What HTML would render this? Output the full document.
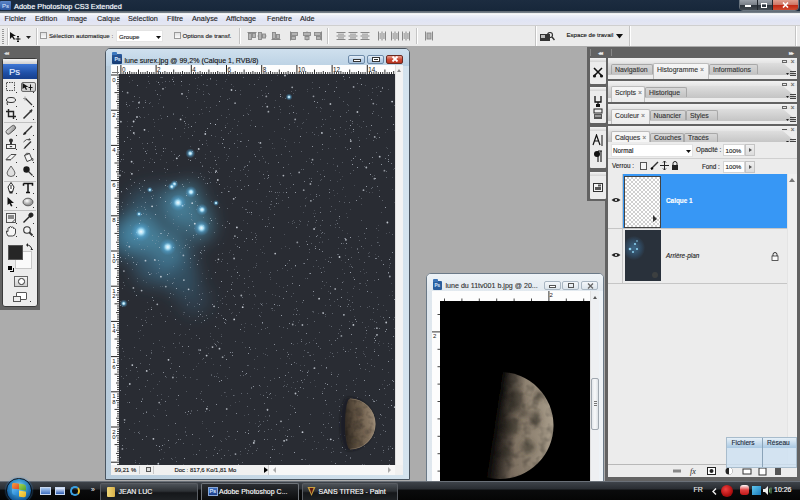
<!DOCTYPE html>
<html><head><meta charset="utf-8">
<style>
*{margin:0;padding:0;box-sizing:border-box}
html,body{width:800px;height:500px;overflow:hidden}
body{position:relative;background:#acacac;font-family:"Liberation Sans",sans-serif;font-size:7px;color:#222}
.a{position:absolute}
.t{position:absolute;white-space:nowrap;line-height:1;-webkit-text-stroke:0.12px currentColor}
#title{left:0;top:0;width:800px;height:10.5px;background:linear-gradient(#1c2c40,#17273a);}
#menu{left:0;top:10.5px;width:800px;height:14.5px;background:linear-gradient(#5a646e 0,#7a848e 1.8px,#ffffff 2.6px,#eceff8 4.5px,#e0e4f4 9px,#e4e6f2 13.5px,#d4d4da 14.5px);}
#opts{left:0;top:25px;width:800px;height:21px;background:#ebebeb;border-top:1px solid #cfcfcf;}
#tools{left:0;top:46px;width:40px;height:264px;background:#636363}
#doc1{left:105px;top:48px;width:305px;height:432px;background:#c4d8e8;border:1px solid #4a5560;border-radius:5px 5px 0 0}
#doc2{left:426px;top:273px;width:178px;height:212px;background:#dde6ee;border:1px solid #6b7a88;border-radius:5px 5px 0 0}
#task{left:0;top:481px;width:800px;height:19px;background:linear-gradient(#41464d 0,#2a2e33 40%,#0a0b0c 50%,#050505 100%)}
.dk{background:#626262}
.pn{background:#ececec}
</style></head><body>
<!-- title bar -->
<div id="title" class="a">
  <div class="a" style="left:0;top:1px;width:11px;height:9px;background:linear-gradient(#5b86c8,#2a55a0);border-radius:1px"></div>
  <div class="t" style="left:2px;top:3px;font-size:6px;color:#c9dcf5">Ps</div>
  <div class="t" style="left:14px;top:2.8px;font-size:7.35px;color:#fff;text-shadow:0 0 2px #4a6a90">Adobe Photoshop CS3 Extended</div>
  <div class="a" style="left:739px;top:-1px;width:60px;height:11.5px;border:1px solid #6a7580;border-radius:0 0 4px 4px;background:#222"></div>
  <div class="a" style="left:740px;top:0;width:17px;height:10px;background:linear-gradient(#9aa0a8 0,#7a8088 45%,#2e353d 55%,#444b52 100%)"></div>
  <div class="a" style="left:757px;top:0;width:1px;height:10px;background:#20262c"></div>
  <div class="a" style="left:758px;top:0;width:14px;height:10px;background:linear-gradient(#9aa0a8 0,#7a8088 45%,#2e353d 55%,#444b52 100%)"></div>
  <div class="a" style="left:772px;top:0;width:1px;height:10px;background:#20262c"></div>
  <div class="a" style="left:773px;top:0;width:25px;height:10px;border-radius:0 0 3px 0;background:linear-gradient(#e0a090 0,#d07868 45%,#c02a14 55%,#d04a30 100%)"></div>
  <div class="a" style="left:745px;top:5px;width:6px;height:2px;background:#fff"></div>
  <div class="a" style="left:761px;top:2.5px;width:5.5px;height:5px;border:1px solid #fff;border-top-width:1.5px"></div>
  <svg class="a" style="left:782px;top:2px" width="7" height="6"><path d="M1 0.5 L6 5.5 M6 0.5 L1 5.5" stroke="#fff" stroke-width="1.6"/></svg>
</div>
<!-- menu bar -->
<div id="menu" class="a">
  <div class="t" style="left:4.5px;top:4.3px;font-size:7.25px">Fichier</div>
  <div class="t" style="left:35px;top:4.3px;font-size:7.25px">Edition</div>
  <div class="t" style="left:67px;top:4.3px;font-size:7.25px">Image</div>
  <div class="t" style="left:97px;top:4.3px;font-size:7.25px">Calque</div>
  <div class="t" style="left:128px;top:4.3px;font-size:7.25px">Sélection</div>
  <div class="t" style="left:167px;top:4.3px;font-size:7.25px">Filtre</div>
  <div class="t" style="left:192px;top:4.3px;font-size:7.25px">Analyse</div>
  <div class="t" style="left:226px;top:4.3px;font-size:7.25px">Affichage</div>
  <div class="t" style="left:267px;top:4.3px;font-size:7.25px">Fenêtre</div>
  <div class="t" style="left:300px;top:4.3px;font-size:7.25px">Aide</div>
</div>
<!-- options bar -->
<div id="opts" class="a">
  <div class="a" style="left:2px;top:3px;width:2px;height:15px;background:repeating-linear-gradient(#999 0 1px,transparent 1px 2px)"></div>
  <div class="a" style="left:7px;top:2px;width:1px;height:17px;background:#c4c4c4;box-shadow:1px 0 #fff"></div>
  <svg class="a" style="left:9px;top:5px" width="14" height="12" viewBox="0 0 14 12"><path d="M1 1 L1 8 L3 6 L5 9 L6 8 L4 5 L7 5 Z" fill="#111"/><path d="M9 5 v6 M6.5 8 h5 M8 6 l1-1 l1 1 M8 10 l1 1 l1-1" stroke="#111" stroke-width="1" fill="none"/></svg>
  <svg class="a" style="left:26px;top:10px" width="5" height="3"><path d="M0 0 h5 l-2.5 3z" fill="#222"/></svg>
  <div class="a" style="left:36px;top:2px;width:1px;height:17px;background:#c4c4c4;box-shadow:1px 0 #fff"></div>
  <div class="a" style="left:40px;top:6px;width:7px;height:7px;border:1px solid #9a9a9a;background:linear-gradient(#e0e0e0,#fafafa)"></div>
  <div class="t" style="left:49px;top:6.8px;font-size:6.15px;color:#222">Sélection automatique :</div>
  <div class="a" style="left:116px;top:4px;width:47px;height:12px;background:#fff;border:1px solid #e4e4e4"></div>
  <div class="t" style="left:119px;top:8px;font-size:6.1px;color:#222">Groupe</div>
  <svg class="a" style="left:156px;top:10px" width="5" height="3"><path d="M0 0 h5 l-2.5 3z" fill="#111"/></svg>
  <div class="a" style="left:174px;top:6px;width:7px;height:7px;border:1px solid #9a9a9a;background:linear-gradient(#e0e0e0,#fafafa)"></div>
  <div class="t" style="left:182.5px;top:6.8px;font-size:6.2px;color:#222">Options de transf.</div>
  <div class="a" style="left:239px;top:2px;width:1px;height:16px;background:#c4c4c4;box-shadow:1px 0 #fff"></div>
  <div class="a" style="left:327px;top:2px;width:1px;height:16px;background:#c4c4c4;box-shadow:1px 0 #fff"></div>
  <div class="a" style="left:416px;top:2px;width:1px;height:16px;background:#c4c4c4;box-shadow:1px 0 #fff"></div>
  <div class="a" style="left:535px;top:0px;width:1px;height:20px;background:#c4c4c4;box-shadow:1px 0 #fff"></div>
  <div class="a" style="left:629px;top:0px;width:1px;height:20px;background:#c4c4c4;box-shadow:1px 0 #fff"></div>
  <div class="a" style="left:795px;top:0px;width:1px;height:20px;background:#c4c4c4;box-shadow:1px 0 #fff"></div>
<svg class="a" style="left:247px;top:5px" width="10" height="10" viewBox="0 0 10 10"><path d="M0.5 1.5h9" stroke="#888"/><rect x="1.5" y="2.5" width="3" height="6" fill="#b4b4b4" stroke="#888" stroke-width="0.9"/><rect x="5.5" y="2.5" width="3" height="4" fill="#b4b4b4" stroke="#888" stroke-width="0.9"/></svg>
<svg class="a" style="left:257px;top:5px" width="10" height="10" viewBox="0 0 10 10"><path d="M0.5 5h9" stroke="#888"/><rect x="1.5" y="1.5" width="3" height="7" fill="#b4b4b4" stroke="#888" stroke-width="0.9"/><rect x="5.5" y="3" width="3" height="4" fill="#b4b4b4" stroke="#888" stroke-width="0.9"/></svg>
<svg class="a" style="left:271px;top:5px" width="10" height="10" viewBox="0 0 10 10"><path d="M0.5 8.5h9" stroke="#888"/><rect x="1.5" y="1.5" width="3" height="6" fill="#b4b4b4" stroke="#888" stroke-width="0.9"/><rect x="5.5" y="3.5" width="3" height="4" fill="#b4b4b4" stroke="#888" stroke-width="0.9"/></svg>
<svg class="a" style="left:289px;top:5px" width="10" height="10" viewBox="0 0 10 10"><path d="M1.5 0.5v9" stroke="#888"/><rect x="2.5" y="1.5" width="6" height="3" fill="#b4b4b4" stroke="#888" stroke-width="0.9"/><rect x="2.5" y="5.5" width="4" height="3" fill="#b4b4b4" stroke="#888" stroke-width="0.9"/></svg>
<svg class="a" style="left:302px;top:5px" width="10" height="10" viewBox="0 0 10 10"><path d="M5 0.5v9" stroke="#888"/><rect x="1.5" y="1.5" width="7" height="3" fill="#b4b4b4" stroke="#888" stroke-width="0.9"/><rect x="3" y="5.5" width="4" height="3" fill="#b4b4b4" stroke="#888" stroke-width="0.9"/></svg>
<svg class="a" style="left:313px;top:5px" width="10" height="10" viewBox="0 0 10 10"><path d="M8.5 0.5v9" stroke="#888"/><rect x="1.5" y="1.5" width="6" height="3" fill="#b4b4b4" stroke="#888" stroke-width="0.9"/><rect x="3.5" y="5.5" width="4" height="3" fill="#b4b4b4" stroke="#888" stroke-width="0.9"/></svg>
<svg class="a" style="left:336px;top:5px" width="10" height="10" viewBox="0 0 10 10"><path d="M0.5 1.5h9M0.5 5h9M0.5 8.5h9" stroke="#888"/><rect x="2" y="2.5" width="6" height="1.8" fill="#b4b4b4"/><rect x="2" y="6" width="6" height="1.8" fill="#b4b4b4"/></svg>
<svg class="a" style="left:348px;top:5px" width="10" height="10" viewBox="0 0 10 10"><path d="M0.5 1.5h9M0.5 5h9M0.5 8.5h9" stroke="#888"/><rect x="2" y="2.5" width="6" height="1.8" fill="#b4b4b4"/><rect x="2" y="6" width="6" height="1.8" fill="#b4b4b4"/></svg>
<svg class="a" style="left:360px;top:5px" width="10" height="10" viewBox="0 0 10 10"><path d="M0.5 1.5h9M0.5 5h9M0.5 8.5h9" stroke="#888"/><rect x="2" y="2.5" width="6" height="1.8" fill="#b4b4b4"/><rect x="2" y="6" width="6" height="1.8" fill="#b4b4b4"/></svg>
<svg class="a" style="left:377px;top:5px" width="10" height="10" viewBox="0 0 10 10"><path d="M1.5 0.5v9M5 0.5v9M8.5 0.5v9" stroke="#888"/><rect x="2.5" y="2" width="1.8" height="6" fill="#b4b4b4"/><rect x="6" y="2" width="1.8" height="6" fill="#b4b4b4"/></svg>
<svg class="a" style="left:390px;top:5px" width="10" height="10" viewBox="0 0 10 10"><path d="M1.5 0.5v9M5 0.5v9M8.5 0.5v9" stroke="#888"/><rect x="2.5" y="2" width="1.8" height="6" fill="#b4b4b4"/><rect x="6" y="2" width="1.8" height="6" fill="#b4b4b4"/></svg>
<svg class="a" style="left:401px;top:5px" width="10" height="10" viewBox="0 0 10 10"><path d="M1.5 0.5v9M5 0.5v9M8.5 0.5v9" stroke="#888"/><rect x="2.5" y="2" width="1.8" height="6" fill="#b4b4b4"/><rect x="6" y="2" width="1.8" height="6" fill="#b4b4b4"/></svg>
<svg class="a" style="left:424px;top:5px" width="10" height="10" viewBox="0 0 10 10"><path d="M1.5 0.5v9M8.5 0.5v9" stroke="#888"/><rect x="3" y="2" width="4" height="6" fill="#b4b4b4" stroke="#888" stroke-width="0.9"/></svg>
  <svg class="a" style="left:539px;top:6px" width="16" height="10" viewBox="0 0 16 10"><rect x="1" y="2" width="10" height="7" fill="#333"/><rect x="2" y="3" width="4" height="3" fill="#bbb"/><circle cx="11" cy="3" r="2.5" fill="none" stroke="#333" stroke-width="1.2"/><path d="M13 5 l2.5 3" stroke="#333" stroke-width="1.5"/></svg>
  <div class="t" style="left:566.5px;top:6.3px;font-size:6.1px;color:#111">Espace de travail</div>
  <svg class="a" style="left:616px;top:8px" width="7" height="5"><path d="M0 0 h7 l-3.5 4.5z" fill="#111"/></svg>
</div>
<!-- toolbox -->
<div id="tools" class="a">
  <div class="t" style="left:4px;top:4px;font-size:6px;color:#ddd;letter-spacing:-1px">◂◂</div>
  <div class="a" style="left:2px;top:12px;width:36px;height:249px;background:#ececec;border-radius:3px;border:1px solid #3a3a3a"></div>
  <div class="a" style="left:3px;top:13px;width:34px;height:5px;background:linear-gradient(#f4f4f4,#cfcfcf)"></div>
  <div class="a" style="left:3px;top:18px;width:34px;height:14.5px;background:linear-gradient(#3f78d6,#1f4fa6 60%,#173f8c)"></div>
  <div class="t" style="left:9px;top:21px;font-size:9.5px;color:#e8f0ff">Ps</div>
  <div class="a" style="left:20.5px;top:35.5px;width:15.5px;height:10.5px;border:1px solid #6a6a6a;border-radius:2px;background:linear-gradient(#e0e0e0,#cacaca)"></div>
  <div class="a" style="left:4px;top:76px;width:32px;height:1px;background:#c0c0c0"></div>
  <div class="a" style="left:4px;top:134.5px;width:32px;height:1px;background:#c0c0c0"></div>
  <div class="a" style="left:4px;top:164px;width:32px;height:1px;background:#c0c0c0"></div>
<svg class="a" style="left:5px;top:35px" width="12" height="12" viewBox="0 0 12 12"><rect x="1.5" y="1.5" width="8" height="8" fill="none" stroke="#333" stroke-width="0.9" stroke-dasharray="1.5 1"/></svg>
<svg class="a" style="left:22px;top:35px" width="12" height="12" viewBox="0 0 12 12"><path d="M0.5 2 L0.5 8 L2.5 6.5 L4 9 L5 8.5 L3.8 6 L6.5 6 Z" fill="#111"/><path d="M8.5 3.5v6M6.5 6.5h4" stroke="#111" stroke-width="1"/></svg>
<svg class="a" style="left:5px;top:49px" width="12" height="12" viewBox="0 0 12 12"><ellipse cx="6" cy="5" rx="4.5" ry="2.5" fill="none" stroke="#333" stroke-width="1"/><path d="M2.5 6.5 Q1.5 8 2.5 10" stroke="#333" fill="none"/></svg>
<svg class="a" style="left:22px;top:49px" width="12" height="12" viewBox="0 0 12 12"><path d="M3.5 3.5 L10 10" stroke="#333" stroke-width="1.3"/><path d="M1 3.5h4M3 1.5v4" stroke="#888" stroke-width="0.8"/></svg>
<svg class="a" style="left:5px;top:62px" width="12" height="12" viewBox="0 0 12 12"><path d="M3.5 1 v7.5 h7.5 M1 3.5 h7.5 v7.5" fill="none" stroke="#222" stroke-width="1.4"/></svg>
<svg class="a" style="left:22px;top:62px" width="12" height="12" viewBox="0 0 12 12"><path d="M1.5 10.5 L8 4" stroke="#333" stroke-width="1.6"/><path d="M7 3 L10 1 L10.5 2.5 L9 5z" fill="#333"/></svg>
<svg class="a" style="left:5px;top:78px" width="12" height="12" viewBox="0 0 12 12"><defs><linearGradient id="ha" x1="0" y1="0" x2="1" y2="1"><stop offset="0" stop-color="#eee"/><stop offset="1" stop-color="#888"/></linearGradient></defs><rect x="0.5" y="3.5" width="11" height="4.5" rx="2.2" transform="rotate(-40 6 6)" fill="url(#ha)" stroke="#444" stroke-width="0.8"/></svg>
<svg class="a" style="left:22px;top:78px" width="12" height="12" viewBox="0 0 12 12"><path d="M3 9 L10 2" stroke="#333" stroke-width="1.4"/><path d="M1 11 Q1.5 8 3.5 8 L4.5 9 Q4 11 1 11z" fill="#222"/></svg>
<svg class="a" style="left:5px;top:92px" width="12" height="12" viewBox="0 0 12 12"><circle cx="6" cy="2.5" r="2" fill="#333"/><rect x="5" y="4" width="2" height="3" fill="#333"/><rect x="1.5" y="6.5" width="9" height="4" fill="#f4f4f4" stroke="#333" stroke-width="0.9"/><path d="M4.5 8h3l-1.5 1.5z" fill="#333"/></svg>
<svg class="a" style="left:22px;top:92px" width="12" height="12" viewBox="0 0 12 12"><path d="M3 9.5 L9 3.5" stroke="#333" stroke-width="1.4"/><path d="M1.5 4 Q4 0.5 8 1.5" stroke="#444" fill="none" stroke-width="0.9"/><path d="M7 0 L9 1.8 L6.5 2.8z" fill="#444"/><path d="M1.5 11 Q2 9 3.5 9 L4 10z" fill="#222"/></svg>
<svg class="a" style="left:5px;top:105px" width="12" height="12" viewBox="0 0 12 12"><path d="M1 8.5 L6 3.5 L11 3.5 L6 8.5 Z" fill="#f4f4f4" stroke="#333" stroke-width="0.9"/><path d="M1 8.5 L6 8.5 L6 9.5 L1 9.5z" fill="#666"/></svg>
<svg class="a" style="left:22px;top:105px" width="12" height="12" viewBox="0 0 12 12"><path d="M2.5 4.5 L7.5 2.5 L10 8.5 L5 10.5 Z" fill="#f4f4f4" stroke="#333" stroke-width="0.9"/><path d="M2.5 4.5 Q4 1 7.5 2.5" stroke="#333" fill="none" stroke-width="0.8"/><path d="M10.5 7 q1 2 0 3" stroke="#333" fill="none" stroke-width="0.9"/></svg>
<svg class="a" style="left:5px;top:119px" width="12" height="12" viewBox="0 0 12 12"><path d="M6 1 Q10 6.5 10 8 A4 3.5 0 0 1 2 8 Q2 6.5 6 1Z" fill="#e0e0e0" stroke="#555" stroke-width="0.9"/></svg>
<svg class="a" style="left:22px;top:119px" width="12" height="12" viewBox="0 0 12 12"><circle cx="4.5" cy="4.5" r="3.2" fill="#1a1a1a"/><path d="M6.5 6.5 L10.5 10.5" stroke="#333" stroke-width="1.1"/></svg>
<svg class="a" style="left:5px;top:136px" width="12" height="12" viewBox="0 0 12 12"><path d="M6 0.5 L9 5 L7.5 10 L4.5 10 L3 5 Z" fill="#fff" stroke="#222" stroke-width="1"/><path d="M6 3v4" stroke="#222" stroke-width="1"/><rect x="4.5" y="9.5" width="3" height="2" fill="#222"/></svg>
<svg class="a" style="left:22px;top:136px" width="12" height="12" viewBox="0 0 12 12"><path d="M1.5 1.5h9v2.2M1.5 1.5v2.2M6 1.5v9M4 10.5h4" stroke="#111" stroke-width="1.5" fill="none"/></svg>
<svg class="a" style="left:5px;top:150px" width="12" height="12" viewBox="0 0 12 12"><path d="M2.5 1 L2.5 9 L4.5 7.5 L6 10.5 L7.5 10 L6 7 L9 7 Z" fill="#111"/></svg>
<svg class="a" style="left:22px;top:150px" width="12" height="12" viewBox="0 0 12 12"><defs><radialGradient id="eg" cx="0.4" cy="0.35"><stop offset="0" stop-color="#fff"/><stop offset="1" stop-color="#999"/></radialGradient></defs><ellipse cx="6" cy="6" rx="5" ry="3.8" fill="url(#eg)" stroke="#444" stroke-width="0.8"/></svg>
<svg class="a" style="left:5px;top:166px" width="12" height="12" viewBox="0 0 12 12"><rect x="1.5" y="1.5" width="9" height="9" fill="#f0f0f0" stroke="#444" stroke-width="0.9"/><rect x="3" y="3" width="6" height="4" fill="#888"/><path d="M7 10.5 L10.5 7" stroke="#444"/></svg>
<svg class="a" style="left:22px;top:166px" width="12" height="12" viewBox="0 0 12 12"><path d="M1.5 10.5 L7 5" stroke="#222" stroke-width="1.4"/><path d="M6.5 3.5 L8.5 5.5 M8 1.5 a1.8 1.8 0 0 1 2.5 2.5 L9 5 L7 3z" fill="#222" stroke="#222" stroke-width="1.2"/></svg>
<svg class="a" style="left:5px;top:179px" width="12" height="12" viewBox="0 0 12 12"><path d="M3 11 Q1 8 1.5 6 L3 6.5 L3 3 Q3.5 2 4.5 3 L4.5 2 Q5.5 1 6.5 2 L6.5 2.5 Q7.5 1.5 8.5 2.5 L8.5 3.5 Q9.5 3 10.5 4 L10.5 8 Q10 11 7.5 11 Z" fill="#f6f6f6" stroke="#333" stroke-width="0.9"/></svg>
<svg class="a" style="left:22px;top:179px" width="12" height="12" viewBox="0 0 12 12"><circle cx="5" cy="5" r="3.3" fill="#f4f4f4" stroke="#333" stroke-width="1.1"/><path d="M7.5 7.5 L10.5 10.5" stroke="#333" stroke-width="1.8"/></svg>
<div class="a" style="left:16px;top:46px;width:1.2px;height:1.2px;background:#333"></div>
<div class="a" style="left:33px;top:46px;width:1.2px;height:1.2px;background:#333"></div>
<div class="a" style="left:16px;top:60px;width:1.2px;height:1.2px;background:#333"></div>
<div class="a" style="left:33px;top:60px;width:1.2px;height:1.2px;background:#333"></div>
<div class="a" style="left:16px;top:73px;width:1.2px;height:1.2px;background:#333"></div>
<div class="a" style="left:33px;top:73px;width:1.2px;height:1.2px;background:#333"></div>
<div class="a" style="left:16px;top:89px;width:1.2px;height:1.2px;background:#333"></div>
<div class="a" style="left:33px;top:89px;width:1.2px;height:1.2px;background:#333"></div>
<div class="a" style="left:16px;top:103px;width:1.2px;height:1.2px;background:#333"></div>
<div class="a" style="left:33px;top:103px;width:1.2px;height:1.2px;background:#333"></div>
<div class="a" style="left:16px;top:116px;width:1.2px;height:1.2px;background:#333"></div>
<div class="a" style="left:33px;top:116px;width:1.2px;height:1.2px;background:#333"></div>
<div class="a" style="left:16px;top:130px;width:1.2px;height:1.2px;background:#333"></div>
<div class="a" style="left:33px;top:130px;width:1.2px;height:1.2px;background:#333"></div>
<div class="a" style="left:16px;top:147px;width:1.2px;height:1.2px;background:#333"></div>
<div class="a" style="left:33px;top:147px;width:1.2px;height:1.2px;background:#333"></div>
<div class="a" style="left:16px;top:161px;width:1.2px;height:1.2px;background:#333"></div>
<div class="a" style="left:33px;top:161px;width:1.2px;height:1.2px;background:#333"></div>
<div class="a" style="left:16px;top:177px;width:1.2px;height:1.2px;background:#333"></div>
<div class="a" style="left:33px;top:177px;width:1.2px;height:1.2px;background:#333"></div>
<div class="a" style="left:16px;top:190px;width:1.2px;height:1.2px;background:#333"></div>
<div class="a" style="left:33px;top:190px;width:1.2px;height:1.2px;background:#333"></div>

  <div class="a" style="left:14.5px;top:205px;width:17.5px;height:17.5px;background:#fafafa;border:1px solid #c8c8c8"></div>
  <div class="a" style="left:8px;top:198.5px;width:15px;height:15.5px;background:#262626;border:1px solid #555"></div>
  <div class="a" style="left:8px;top:220px;width:4px;height:4px;background:#000"></div>
  <div class="a" style="left:10px;top:222px;width:4px;height:4px;border:1px solid #000;border-top:none;border-left:none"></div>
  <svg class="a" style="left:26px;top:197px" width="7" height="7"><path d="M1 2 q4 0 5 5" stroke="#222" fill="none"/><path d="M0 2 l2 -2 v4z M6 7 l-2 -1 h4z" fill="#222"/></svg>
  <div class="a" style="left:14px;top:230px;width:14px;height:10.5px;border:1px solid #666;background:linear-gradient(#f4f4f4,#cfcfcf)"></div>
  <div class="a" style="left:18px;top:232px;width:6.5px;height:6.5px;border-radius:50%;border:1px solid #333;background:#fff"></div>
  <div class="a" style="left:16px;top:246px;width:11px;height:8px;border:1px solid #555;background:#fff;border-radius:1px"></div>
  <div class="a" style="left:13px;top:250px;width:8px;height:6px;border:1px solid #555;background:#eee"></div>
  <div class="a" style="left:30px;top:255px;width:1.2px;height:1.2px;background:#333"></div>
</div>
<!-- doc1 -->
<div id="doc1" class="a"><div class="a" style="left:-1px;top:-1px;width:305px;height:431px">
<div class="a" style="left:1px;top:1px;width:303px;height:17px;background:linear-gradient(#cfe0ee,#bcd2e4);border-radius:4px 4px 0 0"></div>
<div class="a" style="left:1px;top:18px;width:303px;height:413px;background:linear-gradient(90deg,#b8ccdc,#d4e3ee)"></div>
<div class="a" style="left:7px;top:6px;width:10px;height:10px;background:linear-gradient(#2a5a9c,#143a72);border-radius:1px"></div>
<div class="a" style="left:7px;top:4px;width:5px;height:3px;background:#3a78c0;border-radius:1px 1px 0 0"></div>
<div class="t" style="left:9.5px;top:9px;font-size:5px;color:#cfe0f8;font-weight:bold">Ps</div>
<div class="t" style="left:19.5px;top:8.5px;font-size:7.05px;color:#111">lune surex.jpg @ 99,2% (Calque 1, RVB/8)</div>
<div class="a" style="left:243px;top:6.5px;width:17px;height:9px;border:1px solid #6d8aa8;border-radius:2px;background:linear-gradient(#e4eef8,#bcd2e8 50%,#a9c3dd)"></div>
<div class="a" style="left:247.5px;top:10.5px;width:8px;height:3px;border:1px solid #333;background:#fff"></div>
<div class="a" style="left:262px;top:6.5px;width:17px;height:9px;border:1px solid #6d8aa8;border-radius:2px;background:linear-gradient(#e4eef8,#bcd2e8 50%,#a9c3dd)"></div>
<div class="a" style="left:266.5px;top:8.5px;width:8px;height:5.5px;border:1px solid #333;background:#fff"></div>
<div class="a" style="left:268.5px;top:10.5px;width:4px;height:1.5px;background:#333"></div>
<div class="a" style="left:281px;top:6.5px;width:17px;height:9px;border:1px solid #6a2a22;border-radius:2px;background:linear-gradient(#e8a090,#cc4a35 50%,#b83420)"></div>
<svg class="a" style="left:286px;top:8px" width="8" height="6"><path d="M1.5 0.5 L6.5 5.5 M6.5 0.5 L1.5 5.5" stroke="#fff" stroke-width="1.8"/></svg>
<div class="a" style="left:6px;top:17px;width:284px;height:9px;background:#fdfdfd"></div>
<div class="a" style="left:6px;top:26px;width:8px;height:391px;background:#fdfdfd"></div>
<div class="a" style="left:6px;top:17px;width:8px;height:9px;background:#fdfdfd"></div><div class="a" style="left:12px;top:18px;width:1px;height:8px;background:#777"></div><div class="a" style="left:7px;top:23.5px;width:7px;height:1px;background:#777"></div>
<svg class="a" style="left:0;top:0" width="305" height="431"><rect x="15.4" y="17" width="1" height="9" fill="#222"/><text x="16.9" y="23.5" font-size="6.3" font-family="Liberation Sans" fill="#111">0</text><rect x="17.6" y="24" width="1" height="2" fill="#333"/><rect x="19.8" y="24" width="1" height="2" fill="#333"/><rect x="22.0" y="24" width="1" height="2" fill="#333"/><rect x="24.2" y="23" width="1" height="3" fill="#333"/><rect x="26.4" y="24" width="1" height="2" fill="#333"/><rect x="28.6" y="24" width="1" height="2" fill="#333"/><rect x="30.8" y="24" width="1" height="2" fill="#333"/><rect x="33.0" y="21.5" width="1" height="4.5" fill="#333"/><rect x="35.2" y="24" width="1" height="2" fill="#333"/><rect x="37.4" y="24" width="1" height="2" fill="#333"/><rect x="39.6" y="24" width="1" height="2" fill="#333"/><rect x="41.8" y="23" width="1" height="3" fill="#333"/><rect x="44.0" y="24" width="1" height="2" fill="#333"/><rect x="46.2" y="24" width="1" height="2" fill="#333"/><rect x="48.4" y="24" width="1" height="2" fill="#333"/><rect x="50.6" y="17" width="1" height="9" fill="#222"/><text x="52.1" y="23.5" font-size="6.3" font-family="Liberation Sans" fill="#111">2</text><rect x="52.8" y="24" width="1" height="2" fill="#333"/><rect x="55.0" y="24" width="1" height="2" fill="#333"/><rect x="57.2" y="24" width="1" height="2" fill="#333"/><rect x="59.4" y="23" width="1" height="3" fill="#333"/><rect x="61.6" y="24" width="1" height="2" fill="#333"/><rect x="63.8" y="24" width="1" height="2" fill="#333"/><rect x="66.0" y="24" width="1" height="2" fill="#333"/><rect x="68.2" y="21.5" width="1" height="4.5" fill="#333"/><rect x="70.4" y="24" width="1" height="2" fill="#333"/><rect x="72.6" y="24" width="1" height="2" fill="#333"/><rect x="74.8" y="24" width="1" height="2" fill="#333"/><rect x="77.0" y="23" width="1" height="3" fill="#333"/><rect x="79.2" y="24" width="1" height="2" fill="#333"/><rect x="81.4" y="24" width="1" height="2" fill="#333"/><rect x="83.6" y="24" width="1" height="2" fill="#333"/><rect x="85.8" y="17" width="1" height="9" fill="#222"/><text x="87.3" y="23.5" font-size="6.3" font-family="Liberation Sans" fill="#111">4</text><rect x="88.0" y="24" width="1" height="2" fill="#333"/><rect x="90.2" y="24" width="1" height="2" fill="#333"/><rect x="92.4" y="24" width="1" height="2" fill="#333"/><rect x="94.6" y="23" width="1" height="3" fill="#333"/><rect x="96.8" y="24" width="1" height="2" fill="#333"/><rect x="99.0" y="24" width="1" height="2" fill="#333"/><rect x="101.2" y="24" width="1" height="2" fill="#333"/><rect x="103.4" y="21.5" width="1" height="4.5" fill="#333"/><rect x="105.6" y="24" width="1" height="2" fill="#333"/><rect x="107.8" y="24" width="1" height="2" fill="#333"/><rect x="110.0" y="24" width="1" height="2" fill="#333"/><rect x="112.2" y="23" width="1" height="3" fill="#333"/><rect x="114.4" y="24" width="1" height="2" fill="#333"/><rect x="116.6" y="24" width="1" height="2" fill="#333"/><rect x="118.8" y="24" width="1" height="2" fill="#333"/><rect x="121.0" y="17" width="1" height="9" fill="#222"/><text x="122.5" y="23.5" font-size="6.3" font-family="Liberation Sans" fill="#111">6</text><rect x="123.2" y="24" width="1" height="2" fill="#333"/><rect x="125.4" y="24" width="1" height="2" fill="#333"/><rect x="127.6" y="24" width="1" height="2" fill="#333"/><rect x="129.8" y="23" width="1" height="3" fill="#333"/><rect x="132.0" y="24" width="1" height="2" fill="#333"/><rect x="134.2" y="24" width="1" height="2" fill="#333"/><rect x="136.4" y="24" width="1" height="2" fill="#333"/><rect x="138.6" y="21.5" width="1" height="4.5" fill="#333"/><rect x="140.8" y="24" width="1" height="2" fill="#333"/><rect x="143.0" y="24" width="1" height="2" fill="#333"/><rect x="145.2" y="24" width="1" height="2" fill="#333"/><rect x="147.4" y="23" width="1" height="3" fill="#333"/><rect x="149.6" y="24" width="1" height="2" fill="#333"/><rect x="151.8" y="24" width="1" height="2" fill="#333"/><rect x="154.0" y="24" width="1" height="2" fill="#333"/><rect x="156.2" y="17" width="1" height="9" fill="#222"/><text x="157.7" y="23.5" font-size="6.3" font-family="Liberation Sans" fill="#111">8</text><rect x="158.4" y="24" width="1" height="2" fill="#333"/><rect x="160.6" y="24" width="1" height="2" fill="#333"/><rect x="162.8" y="24" width="1" height="2" fill="#333"/><rect x="165.0" y="23" width="1" height="3" fill="#333"/><rect x="167.2" y="24" width="1" height="2" fill="#333"/><rect x="169.4" y="24" width="1" height="2" fill="#333"/><rect x="171.6" y="24" width="1" height="2" fill="#333"/><rect x="173.8" y="21.5" width="1" height="4.5" fill="#333"/><rect x="176.0" y="24" width="1" height="2" fill="#333"/><rect x="178.2" y="24" width="1" height="2" fill="#333"/><rect x="180.4" y="24" width="1" height="2" fill="#333"/><rect x="182.6" y="23" width="1" height="3" fill="#333"/><rect x="184.8" y="24" width="1" height="2" fill="#333"/><rect x="187.0" y="24" width="1" height="2" fill="#333"/><rect x="189.2" y="24" width="1" height="2" fill="#333"/><rect x="191.4" y="17" width="1" height="9" fill="#222"/><text x="192.9" y="23.5" font-size="6.3" font-family="Liberation Sans" fill="#111">10</text><rect x="193.6" y="24" width="1" height="2" fill="#333"/><rect x="195.8" y="24" width="1" height="2" fill="#333"/><rect x="198.0" y="24" width="1" height="2" fill="#333"/><rect x="200.2" y="23" width="1" height="3" fill="#333"/><rect x="202.4" y="24" width="1" height="2" fill="#333"/><rect x="204.6" y="24" width="1" height="2" fill="#333"/><rect x="206.8" y="24" width="1" height="2" fill="#333"/><rect x="209.0" y="21.5" width="1" height="4.5" fill="#333"/><rect x="211.2" y="24" width="1" height="2" fill="#333"/><rect x="213.4" y="24" width="1" height="2" fill="#333"/><rect x="215.6" y="24" width="1" height="2" fill="#333"/><rect x="217.8" y="23" width="1" height="3" fill="#333"/><rect x="220.0" y="24" width="1" height="2" fill="#333"/><rect x="222.2" y="24" width="1" height="2" fill="#333"/><rect x="224.4" y="24" width="1" height="2" fill="#333"/><rect x="226.6" y="17" width="1" height="9" fill="#222"/><text x="228.1" y="23.5" font-size="6.3" font-family="Liberation Sans" fill="#111">12</text><rect x="228.8" y="24" width="1" height="2" fill="#333"/><rect x="231.0" y="24" width="1" height="2" fill="#333"/><rect x="233.2" y="24" width="1" height="2" fill="#333"/><rect x="235.4" y="23" width="1" height="3" fill="#333"/><rect x="237.6" y="24" width="1" height="2" fill="#333"/><rect x="239.8" y="24" width="1" height="2" fill="#333"/><rect x="242.0" y="24" width="1" height="2" fill="#333"/><rect x="244.2" y="21.5" width="1" height="4.5" fill="#333"/><rect x="246.4" y="24" width="1" height="2" fill="#333"/><rect x="248.6" y="24" width="1" height="2" fill="#333"/><rect x="250.8" y="24" width="1" height="2" fill="#333"/><rect x="253.0" y="23" width="1" height="3" fill="#333"/><rect x="255.2" y="24" width="1" height="2" fill="#333"/><rect x="257.4" y="24" width="1" height="2" fill="#333"/><rect x="259.6" y="24" width="1" height="2" fill="#333"/><rect x="261.8" y="17" width="1" height="9" fill="#222"/><text x="263.3" y="23.5" font-size="6.3" font-family="Liberation Sans" fill="#111">14</text><rect x="264.0" y="24" width="1" height="2" fill="#333"/><rect x="266.2" y="24" width="1" height="2" fill="#333"/><rect x="268.4" y="24" width="1" height="2" fill="#333"/><rect x="270.6" y="23" width="1" height="3" fill="#333"/><rect x="272.8" y="24" width="1" height="2" fill="#333"/><rect x="275.0" y="24" width="1" height="2" fill="#333"/><rect x="277.2" y="24" width="1" height="2" fill="#333"/><rect x="279.4" y="21.5" width="1" height="4.5" fill="#333"/><rect x="281.6" y="24" width="1" height="2" fill="#333"/><rect x="283.8" y="24" width="1" height="2" fill="#333"/><rect x="286.0" y="24" width="1" height="2" fill="#333"/><rect x="288.2" y="23" width="1" height="3" fill="#333"/><rect x="6" y="26.5" width="8" height="1" fill="#222"/><text x="7.2" y="33.5" font-size="6" font-family="Liberation Sans" fill="#111">0</text><rect x="12" y="28.7" width="2" height="1" fill="#333"/><rect x="12" y="30.9" width="2" height="1" fill="#333"/><rect x="12" y="33.1" width="2" height="1" fill="#333"/><rect x="11" y="35.3" width="3" height="1" fill="#333"/><rect x="12" y="37.5" width="2" height="1" fill="#333"/><rect x="12" y="39.7" width="2" height="1" fill="#333"/><rect x="12" y="41.9" width="2" height="1" fill="#333"/><rect x="9.5" y="44.1" width="4.5" height="1" fill="#333"/><rect x="12" y="46.3" width="2" height="1" fill="#333"/><rect x="12" y="48.5" width="2" height="1" fill="#333"/><rect x="12" y="50.7" width="2" height="1" fill="#333"/><rect x="11" y="52.9" width="3" height="1" fill="#333"/><rect x="12" y="55.1" width="2" height="1" fill="#333"/><rect x="12" y="57.3" width="2" height="1" fill="#333"/><rect x="12" y="59.5" width="2" height="1" fill="#333"/><rect x="6" y="61.7" width="8" height="1" fill="#222"/><text x="7.2" y="68.7" font-size="6" font-family="Liberation Sans" fill="#111">2</text><rect x="12" y="63.9" width="2" height="1" fill="#333"/><rect x="12" y="66.1" width="2" height="1" fill="#333"/><rect x="12" y="68.3" width="2" height="1" fill="#333"/><rect x="11" y="70.5" width="3" height="1" fill="#333"/><rect x="12" y="72.7" width="2" height="1" fill="#333"/><rect x="12" y="74.9" width="2" height="1" fill="#333"/><rect x="12" y="77.1" width="2" height="1" fill="#333"/><rect x="9.5" y="79.3" width="4.5" height="1" fill="#333"/><rect x="12" y="81.5" width="2" height="1" fill="#333"/><rect x="12" y="83.7" width="2" height="1" fill="#333"/><rect x="12" y="85.9" width="2" height="1" fill="#333"/><rect x="11" y="88.1" width="3" height="1" fill="#333"/><rect x="12" y="90.3" width="2" height="1" fill="#333"/><rect x="12" y="92.5" width="2" height="1" fill="#333"/><rect x="12" y="94.7" width="2" height="1" fill="#333"/><rect x="6" y="96.9" width="8" height="1" fill="#222"/><text x="7.2" y="103.9" font-size="6" font-family="Liberation Sans" fill="#111">4</text><rect x="12" y="99.1" width="2" height="1" fill="#333"/><rect x="12" y="101.3" width="2" height="1" fill="#333"/><rect x="12" y="103.5" width="2" height="1" fill="#333"/><rect x="11" y="105.7" width="3" height="1" fill="#333"/><rect x="12" y="107.9" width="2" height="1" fill="#333"/><rect x="12" y="110.1" width="2" height="1" fill="#333"/><rect x="12" y="112.3" width="2" height="1" fill="#333"/><rect x="9.5" y="114.5" width="4.5" height="1" fill="#333"/><rect x="12" y="116.7" width="2" height="1" fill="#333"/><rect x="12" y="118.9" width="2" height="1" fill="#333"/><rect x="12" y="121.1" width="2" height="1" fill="#333"/><rect x="11" y="123.3" width="3" height="1" fill="#333"/><rect x="12" y="125.5" width="2" height="1" fill="#333"/><rect x="12" y="127.7" width="2" height="1" fill="#333"/><rect x="12" y="129.9" width="2" height="1" fill="#333"/><rect x="6" y="132.1" width="8" height="1" fill="#222"/><text x="7.2" y="139.1" font-size="6" font-family="Liberation Sans" fill="#111">6</text><rect x="12" y="134.3" width="2" height="1" fill="#333"/><rect x="12" y="136.5" width="2" height="1" fill="#333"/><rect x="12" y="138.7" width="2" height="1" fill="#333"/><rect x="11" y="140.9" width="3" height="1" fill="#333"/><rect x="12" y="143.1" width="2" height="1" fill="#333"/><rect x="12" y="145.3" width="2" height="1" fill="#333"/><rect x="12" y="147.5" width="2" height="1" fill="#333"/><rect x="9.5" y="149.7" width="4.5" height="1" fill="#333"/><rect x="12" y="151.9" width="2" height="1" fill="#333"/><rect x="12" y="154.1" width="2" height="1" fill="#333"/><rect x="12" y="156.3" width="2" height="1" fill="#333"/><rect x="11" y="158.5" width="3" height="1" fill="#333"/><rect x="12" y="160.7" width="2" height="1" fill="#333"/><rect x="12" y="162.9" width="2" height="1" fill="#333"/><rect x="12" y="165.1" width="2" height="1" fill="#333"/><rect x="6" y="167.3" width="8" height="1" fill="#222"/><text x="7.2" y="174.3" font-size="6" font-family="Liberation Sans" fill="#111">8</text><rect x="12" y="169.5" width="2" height="1" fill="#333"/><rect x="12" y="171.7" width="2" height="1" fill="#333"/><rect x="12" y="173.9" width="2" height="1" fill="#333"/><rect x="11" y="176.1" width="3" height="1" fill="#333"/><rect x="12" y="178.3" width="2" height="1" fill="#333"/><rect x="12" y="180.5" width="2" height="1" fill="#333"/><rect x="12" y="182.7" width="2" height="1" fill="#333"/><rect x="9.5" y="184.9" width="4.5" height="1" fill="#333"/><rect x="12" y="187.1" width="2" height="1" fill="#333"/><rect x="12" y="189.3" width="2" height="1" fill="#333"/><rect x="12" y="191.5" width="2" height="1" fill="#333"/><rect x="11" y="193.7" width="3" height="1" fill="#333"/><rect x="12" y="195.9" width="2" height="1" fill="#333"/><rect x="12" y="198.1" width="2" height="1" fill="#333"/><rect x="12" y="200.3" width="2" height="1" fill="#333"/><rect x="6" y="202.5" width="8" height="1" fill="#222"/><text x="7.2" y="209.5" font-size="6" font-family="Liberation Sans" fill="#111">1</text><text x="7.2" y="215.0" font-size="6" font-family="Liberation Sans" fill="#111">0</text><rect x="12" y="204.7" width="2" height="1" fill="#333"/><rect x="12" y="206.9" width="2" height="1" fill="#333"/><rect x="12" y="209.1" width="2" height="1" fill="#333"/><rect x="11" y="211.3" width="3" height="1" fill="#333"/><rect x="12" y="213.5" width="2" height="1" fill="#333"/><rect x="12" y="215.7" width="2" height="1" fill="#333"/><rect x="12" y="217.9" width="2" height="1" fill="#333"/><rect x="9.5" y="220.1" width="4.5" height="1" fill="#333"/><rect x="12" y="222.3" width="2" height="1" fill="#333"/><rect x="12" y="224.5" width="2" height="1" fill="#333"/><rect x="12" y="226.7" width="2" height="1" fill="#333"/><rect x="11" y="228.9" width="3" height="1" fill="#333"/><rect x="12" y="231.1" width="2" height="1" fill="#333"/><rect x="12" y="233.3" width="2" height="1" fill="#333"/><rect x="12" y="235.5" width="2" height="1" fill="#333"/><rect x="6" y="237.7" width="8" height="1" fill="#222"/><text x="7.2" y="244.7" font-size="6" font-family="Liberation Sans" fill="#111">1</text><text x="7.2" y="250.2" font-size="6" font-family="Liberation Sans" fill="#111">2</text><rect x="12" y="239.9" width="2" height="1" fill="#333"/><rect x="12" y="242.1" width="2" height="1" fill="#333"/><rect x="12" y="244.3" width="2" height="1" fill="#333"/><rect x="11" y="246.5" width="3" height="1" fill="#333"/><rect x="12" y="248.7" width="2" height="1" fill="#333"/><rect x="12" y="250.9" width="2" height="1" fill="#333"/><rect x="12" y="253.1" width="2" height="1" fill="#333"/><rect x="9.5" y="255.3" width="4.5" height="1" fill="#333"/><rect x="12" y="257.5" width="2" height="1" fill="#333"/><rect x="12" y="259.7" width="2" height="1" fill="#333"/><rect x="12" y="261.9" width="2" height="1" fill="#333"/><rect x="11" y="264.1" width="3" height="1" fill="#333"/><rect x="12" y="266.3" width="2" height="1" fill="#333"/><rect x="12" y="268.5" width="2" height="1" fill="#333"/><rect x="12" y="270.7" width="2" height="1" fill="#333"/><rect x="6" y="272.9" width="8" height="1" fill="#222"/><text x="7.2" y="279.9" font-size="6" font-family="Liberation Sans" fill="#111">1</text><text x="7.2" y="285.4" font-size="6" font-family="Liberation Sans" fill="#111">4</text><rect x="12" y="275.1" width="2" height="1" fill="#333"/><rect x="12" y="277.3" width="2" height="1" fill="#333"/><rect x="12" y="279.5" width="2" height="1" fill="#333"/><rect x="11" y="281.7" width="3" height="1" fill="#333"/><rect x="12" y="283.9" width="2" height="1" fill="#333"/><rect x="12" y="286.1" width="2" height="1" fill="#333"/><rect x="12" y="288.3" width="2" height="1" fill="#333"/><rect x="9.5" y="290.5" width="4.5" height="1" fill="#333"/><rect x="12" y="292.7" width="2" height="1" fill="#333"/><rect x="12" y="294.9" width="2" height="1" fill="#333"/><rect x="12" y="297.1" width="2" height="1" fill="#333"/><rect x="11" y="299.3" width="3" height="1" fill="#333"/><rect x="12" y="301.5" width="2" height="1" fill="#333"/><rect x="12" y="303.7" width="2" height="1" fill="#333"/><rect x="12" y="305.9" width="2" height="1" fill="#333"/><rect x="6" y="308.1" width="8" height="1" fill="#222"/><text x="7.2" y="315.1" font-size="6" font-family="Liberation Sans" fill="#111">1</text><text x="7.2" y="320.6" font-size="6" font-family="Liberation Sans" fill="#111">6</text><rect x="12" y="310.3" width="2" height="1" fill="#333"/><rect x="12" y="312.5" width="2" height="1" fill="#333"/><rect x="12" y="314.7" width="2" height="1" fill="#333"/><rect x="11" y="316.9" width="3" height="1" fill="#333"/><rect x="12" y="319.1" width="2" height="1" fill="#333"/><rect x="12" y="321.3" width="2" height="1" fill="#333"/><rect x="12" y="323.5" width="2" height="1" fill="#333"/><rect x="9.5" y="325.7" width="4.5" height="1" fill="#333"/><rect x="12" y="327.9" width="2" height="1" fill="#333"/><rect x="12" y="330.1" width="2" height="1" fill="#333"/><rect x="12" y="332.3" width="2" height="1" fill="#333"/><rect x="11" y="334.5" width="3" height="1" fill="#333"/><rect x="12" y="336.7" width="2" height="1" fill="#333"/><rect x="12" y="338.9" width="2" height="1" fill="#333"/><rect x="12" y="341.1" width="2" height="1" fill="#333"/><rect x="6" y="343.3" width="8" height="1" fill="#222"/><text x="7.2" y="350.3" font-size="6" font-family="Liberation Sans" fill="#111">1</text><text x="7.2" y="355.8" font-size="6" font-family="Liberation Sans" fill="#111">8</text><rect x="12" y="345.5" width="2" height="1" fill="#333"/><rect x="12" y="347.7" width="2" height="1" fill="#333"/><rect x="12" y="349.9" width="2" height="1" fill="#333"/><rect x="11" y="352.1" width="3" height="1" fill="#333"/><rect x="12" y="354.3" width="2" height="1" fill="#333"/><rect x="12" y="356.5" width="2" height="1" fill="#333"/><rect x="12" y="358.7" width="2" height="1" fill="#333"/><rect x="9.5" y="360.9" width="4.5" height="1" fill="#333"/><rect x="12" y="363.1" width="2" height="1" fill="#333"/><rect x="12" y="365.3" width="2" height="1" fill="#333"/><rect x="12" y="367.5" width="2" height="1" fill="#333"/><rect x="11" y="369.7" width="3" height="1" fill="#333"/><rect x="12" y="371.9" width="2" height="1" fill="#333"/><rect x="12" y="374.1" width="2" height="1" fill="#333"/><rect x="12" y="376.3" width="2" height="1" fill="#333"/><rect x="6" y="378.5" width="8" height="1" fill="#222"/><text x="7.2" y="385.5" font-size="6" font-family="Liberation Sans" fill="#111">2</text><text x="7.2" y="391.0" font-size="6" font-family="Liberation Sans" fill="#111">0</text><rect x="12" y="380.7" width="2" height="1" fill="#333"/><rect x="12" y="382.9" width="2" height="1" fill="#333"/><rect x="12" y="385.1" width="2" height="1" fill="#333"/><rect x="11" y="387.3" width="3" height="1" fill="#333"/><rect x="12" y="389.5" width="2" height="1" fill="#333"/><rect x="12" y="391.7" width="2" height="1" fill="#333"/><rect x="12" y="393.9" width="2" height="1" fill="#333"/><rect x="9.5" y="396.1" width="4.5" height="1" fill="#333"/><rect x="12" y="398.3" width="2" height="1" fill="#333"/><rect x="12" y="400.5" width="2" height="1" fill="#333"/><rect x="12" y="402.7" width="2" height="1" fill="#333"/><rect x="11" y="404.9" width="3" height="1" fill="#333"/><rect x="12" y="407.1" width="2" height="1" fill="#333"/><rect x="12" y="409.3" width="2" height="1" fill="#333"/><rect x="12" y="411.5" width="2" height="1" fill="#333"/><rect x="6" y="413.7" width="8" height="1" fill="#222"/><text x="7.2" y="420.7" font-size="6" font-family="Liberation Sans" fill="#111">2</text><text x="7.2" y="426.2" font-size="6" font-family="Liberation Sans" fill="#111">2</text><rect x="12" y="415.9" width="2" height="1" fill="#333"/></svg>
<div class="a" style="left:290px;top:17px;width:8px;height:400px;background:#f3f3f3;border-left:1px solid #e0e0e0"></div>
<svg class="a" style="left:291px;top:20px" width="6" height="5"><path d="M3 1 L5 4 H1Z" fill="#888"/></svg>
<div class="a" style="left:6px;top:417px;width:292px;height:9.5px;background:#f0f0f0"></div>
<div class="t" style="left:9.5px;top:419.5px;font-size:5.9px;color:#111">99,21 %</div>
<div class="a" style="left:34px;top:418px;width:1px;height:8px;background:#c8c8c8"></div>
<div class="a" style="left:41px;top:419px;width:5px;height:5px;border:1px solid #555;background:#ddd"></div>
<div class="a" style="left:48px;top:418px;width:1px;height:8px;background:#c8c8c8"></div>
<div class="t" style="left:69.5px;top:419.5px;font-size:5.9px;color:#111">Doc : 817,6 Ko/1,81 Mo</div>
<svg class="a" style="left:159px;top:419px" width="4" height="6"><path d="M0 0 L4 3 L0 6Z" fill="#000"/></svg>
<div class="a" style="left:163px;top:417px;width:127px;height:9.5px;background:#f7f7f7;border-left:1px solid #ccc"></div>
<svg class="a" style="left:167px;top:419px" width="4" height="6"><path d="M4 0 L1 3 L4 6Z" fill="#aaa"/></svg>
<svg class="a" style="left:283px;top:419px" width="4" height="6"><path d="M0 0 L3 3 L0 6Z" fill="#aaa"/></svg>
<div class="a" style="left:14px;top:26px;width:276px;height:391px;background:#232937;overflow:hidden"><!--SF--><svg width="276" height="391" style="position:absolute;left:0;top:0"><defs>
<filter id="bl" x="-50%" y="-50%" width="200%" height="200%"><feGaussianBlur stdDeviation="8"/></filter>
<filter id="bl3" x="-50%" y="-50%" width="200%" height="200%"><feGaussianBlur stdDeviation="0.8"/></filter>
<filter id="bs" x="-50%" y="-50%" width="200%" height="200%"><feGaussianBlur stdDeviation="0.45"/></filter>
<radialGradient id="sg"><stop offset="0" stop-color="#f4fcff"/><stop offset="0.25" stop-color="#b0e4fa" stop-opacity="0.95"/><stop offset="0.55" stop-color="#5ab0e0" stop-opacity="0.45"/><stop offset="1" stop-color="#4a9ad0" stop-opacity="0"/></radialGradient>
<radialGradient id="mg" cx="0.55" cy="0.45" r="0.65"><stop offset="0" stop-color="#8c7e6c"/><stop offset="0.7" stop-color="#7a6c5c"/><stop offset="1" stop-color="#4a4038"/></radialGradient>
</defs><rect width="276" height="391" fill="#292c33"/><g filter="url(#bl)"><circle cx="40" cy="155" r="46" fill="#4684a4" fill-opacity="0.2"/><circle cx="22" cy="158" r="20" fill="#5ab4d8" fill-opacity="0.55"/><circle cx="58" cy="130" r="17" fill="#5ab4d8" fill-opacity="0.48"/><circle cx="82" cy="153" r="13" fill="#5ab4d8" fill-opacity="0.42"/><circle cx="49" cy="174" r="17" fill="#5ab4d8" fill-opacity="0.45"/><circle cx="60" cy="200" r="20" fill="#4a98c0" fill-opacity="0.3"/><circle cx="72" cy="118" r="11" fill="#5ab4d8" fill-opacity="0.35"/><circle cx="5" cy="165" r="18" fill="#4a98c0" fill-opacity="0.38"/><circle cx="32" cy="195" r="18" fill="#4a98c0" fill-opacity="0.28"/><circle cx="75" cy="225" r="16" fill="#4a98c0" fill-opacity="0.18"/><circle cx="83" cy="136" r="10" fill="#5ab4d8" fill-opacity="0.32"/><circle cx="25" cy="128" r="12" fill="#4a98c0" fill-opacity="0.22"/><circle cx="62" cy="145" r="12" fill="#5ab4d8" fill-opacity="0.3"/></g><g filter="url(#bs)"><rect x="172" y="290" width="1" height="1" fill="#d0d8e4" fill-opacity="0.63"/><rect x="204" y="361" width="1" height="1" fill="#a8b0bc" fill-opacity="0.32"/><rect x="260" y="254" width="1" height="1" fill="#d0d8e4" fill-opacity="0.38"/><rect x="129" y="96" width="1" height="1" fill="#a8b0bc" fill-opacity="0.34"/><rect x="4" y="85" width="1" height="1" fill="#a8b0bc" fill-opacity="0.43"/><rect x="211" y="62" width="1" height="1" fill="#d0d8e4" fill-opacity="0.39"/><rect x="170" y="50" width="1" height="1" fill="#a8b0bc" fill-opacity="0.42"/><circle cx="57.8" cy="84.3" r="0.9" fill="#e4eaf2" fill-opacity="0.81"/><rect x="80" y="376" width="1" height="1" fill="#a8b0bc" fill-opacity="0.37"/><rect x="57" y="368" width="1" height="1" fill="#a8b0bc" fill-opacity="0.44"/><rect x="247" y="117" width="1" height="1" fill="#a8b0bc" fill-opacity="0.24"/><rect x="40" y="25" width="1" height="1" fill="#a8b0bc" fill-opacity="0.35"/><rect x="1" y="265" width="1" height="1" fill="#a8b0bc" fill-opacity="0.28"/><rect x="226" y="188" width="1" height="1" fill="#a8b0bc" fill-opacity="0.32"/><circle cx="194.5" cy="22.3" r="0.9" fill="#e4eaf2" fill-opacity="0.56"/><rect x="207" y="330" width="1" height="1" fill="#a8b0bc" fill-opacity="0.40"/><rect x="101" y="226" width="1" height="1" fill="#a8b0bc" fill-opacity="0.21"/><rect x="50" y="373" width="1" height="1" fill="#a8b0bc" fill-opacity="0.39"/><rect x="257" y="368" width="1" height="1" fill="#a8b0bc" fill-opacity="0.29"/><rect x="145" y="303" width="1" height="1" fill="#a8b0bc" fill-opacity="0.39"/><rect x="220" y="336" width="1" height="1" fill="#a8b0bc" fill-opacity="0.44"/><rect x="25" y="133" width="1" height="1" fill="#a8b0bc" fill-opacity="0.43"/><rect x="94" y="361" width="1" height="1" fill="#a8b0bc" fill-opacity="0.28"/><rect x="87" y="69" width="1" height="1" fill="#a8b0bc" fill-opacity="0.24"/><rect x="190" y="390" width="1" height="1" fill="#a8b0bc" fill-opacity="0.21"/><rect x="272" y="209" width="1" height="1" fill="#a8b0bc" fill-opacity="0.26"/><rect x="164" y="323" width="1" height="1" fill="#a8b0bc" fill-opacity="0.31"/><rect x="15" y="358" width="1" height="1" fill="#a8b0bc" fill-opacity="0.32"/><rect x="231" y="51" width="1" height="1" fill="#d0d8e4" fill-opacity="0.63"/><rect x="174" y="308" width="1" height="1" fill="#a8b0bc" fill-opacity="0.31"/><rect x="41" y="330" width="1" height="1" fill="#a8b0bc" fill-opacity="0.31"/><circle cx="275.8" cy="333.2" r="0.9" fill="#e4eaf2" fill-opacity="0.69"/><rect x="135" y="285" width="1" height="1" fill="#a8b0bc" fill-opacity="0.27"/><rect x="111" y="57" width="1" height="1" fill="#a8b0bc" fill-opacity="0.45"/><rect x="265" y="245" width="1" height="1" fill="#a8b0bc" fill-opacity="0.28"/><rect x="25" y="106" width="1" height="1" fill="#d0d8e4" fill-opacity="0.61"/><rect x="100" y="307" width="1" height="1" fill="#d0d8e4" fill-opacity="0.56"/><rect x="183" y="297" width="1" height="1" fill="#a8b0bc" fill-opacity="0.38"/><rect x="78" y="190" width="1" height="1" fill="#d0d8e4" fill-opacity="0.56"/><rect x="81" y="370" width="1" height="1" fill="#a8b0bc" fill-opacity="0.35"/><rect x="3" y="214" width="1" height="1" fill="#a8b0bc" fill-opacity="0.37"/><rect x="128" y="319" width="1" height="1" fill="#a8b0bc" fill-opacity="0.40"/><rect x="96" y="252" width="1" height="1" fill="#d0d8e4" fill-opacity="0.60"/><rect x="97" y="330" width="1" height="1" fill="#d0d8e4" fill-opacity="0.56"/><rect x="269" y="374" width="1" height="1" fill="#a8b0bc" fill-opacity="0.33"/><rect x="46" y="327" width="1" height="1" fill="#d0d8e4" fill-opacity="0.49"/><rect x="191" y="281" width="1" height="1" fill="#d0d8e4" fill-opacity="0.40"/><rect x="215" y="227" width="1" height="1" fill="#a8b0bc" fill-opacity="0.31"/><rect x="172" y="303" width="1" height="1" fill="#a8b0bc" fill-opacity="0.38"/><rect x="8" y="63" width="1" height="1" fill="#a8b0bc" fill-opacity="0.36"/><rect x="60" y="268" width="1" height="1" fill="#a8b0bc" fill-opacity="0.21"/><rect x="130" y="88" width="1" height="1" fill="#a8b0bc" fill-opacity="0.23"/><rect x="88" y="71" width="1" height="1" fill="#a8b0bc" fill-opacity="0.21"/><rect x="128" y="149" width="1" height="1" fill="#a8b0bc" fill-opacity="0.35"/><rect x="66" y="353" width="1" height="1" fill="#a8b0bc" fill-opacity="0.30"/><rect x="77" y="160" width="1" height="1" fill="#a8b0bc" fill-opacity="0.41"/><rect x="103" y="14" width="1" height="1" fill="#a8b0bc" fill-opacity="0.22"/><rect x="150" y="133" width="1" height="1" fill="#a8b0bc" fill-opacity="0.44"/><rect x="226" y="164" width="1" height="1" fill="#d0d8e4" fill-opacity="0.54"/><rect x="102" y="56" width="1" height="1" fill="#a8b0bc" fill-opacity="0.34"/><rect x="264" y="378" width="1" height="1" fill="#a8b0bc" fill-opacity="0.29"/><rect x="247" y="0" width="1" height="1" fill="#a8b0bc" fill-opacity="0.34"/><rect x="170" y="55" width="1" height="1" fill="#a8b0bc" fill-opacity="0.42"/><rect x="104" y="169" width="1" height="1" fill="#a8b0bc" fill-opacity="0.27"/><circle cx="268.4" cy="148.5" r="0.9" fill="#e4eaf2" fill-opacity="0.82"/><circle cx="164.4" cy="101.6" r="0.9" fill="#e4eaf2" fill-opacity="0.70"/><circle cx="114.7" cy="124.8" r="0.9" fill="#e4eaf2" fill-opacity="0.70"/><rect x="79" y="186" width="1" height="1" fill="#a8b0bc" fill-opacity="0.36"/><rect x="122" y="115" width="1" height="1" fill="#d0d8e4" fill-opacity="0.60"/><rect x="4" y="208" width="1" height="1" fill="#a8b0bc" fill-opacity="0.43"/><rect x="216" y="96" width="1" height="1" fill="#a8b0bc" fill-opacity="0.24"/><rect x="273" y="115" width="1" height="1" fill="#a8b0bc" fill-opacity="0.32"/><rect x="178" y="236" width="1" height="1" fill="#d0d8e4" fill-opacity="0.39"/><rect x="210" y="118" width="1" height="1" fill="#a8b0bc" fill-opacity="0.28"/><rect x="82" y="207" width="1" height="1" fill="#a8b0bc" fill-opacity="0.29"/><rect x="206" y="231" width="1" height="1" fill="#a8b0bc" fill-opacity="0.26"/><rect x="126" y="358" width="1" height="1" fill="#d0d8e4" fill-opacity="0.51"/><rect x="4" y="304" width="1" height="1" fill="#a8b0bc" fill-opacity="0.34"/><rect x="195" y="247" width="1" height="1" fill="#a8b0bc" fill-opacity="0.43"/><rect x="106" y="153" width="1" height="1" fill="#d0d8e4" fill-opacity="0.41"/><rect x="82" y="325" width="1" height="1" fill="#a8b0bc" fill-opacity="0.41"/><rect x="192" y="169" width="1" height="1" fill="#a8b0bc" fill-opacity="0.40"/><rect x="251" y="56" width="1" height="1" fill="#a8b0bc" fill-opacity="0.34"/><rect x="137" y="129" width="1" height="1" fill="#a8b0bc" fill-opacity="0.35"/><rect x="224" y="27" width="1" height="1" fill="#a8b0bc" fill-opacity="0.40"/><rect x="219" y="259" width="1" height="1" fill="#a8b0bc" fill-opacity="0.38"/><rect x="270" y="390" width="1" height="1" fill="#d0d8e4" fill-opacity="0.36"/><rect x="232" y="86" width="1" height="1" fill="#a8b0bc" fill-opacity="0.44"/><rect x="197" y="53" width="1" height="1" fill="#a8b0bc" fill-opacity="0.43"/><rect x="41" y="239" width="1" height="1" fill="#a8b0bc" fill-opacity="0.24"/><rect x="172" y="17" width="1" height="1" fill="#a8b0bc" fill-opacity="0.29"/><rect x="20" y="23" width="1" height="1" fill="#a8b0bc" fill-opacity="0.39"/><rect x="242" y="53" width="1" height="1" fill="#a8b0bc" fill-opacity="0.28"/><rect x="166" y="191" width="1" height="1" fill="#d0d8e4" fill-opacity="0.46"/><rect x="15" y="273" width="1" height="1" fill="#a8b0bc" fill-opacity="0.36"/><rect x="140" y="356" width="1" height="1" fill="#a8b0bc" fill-opacity="0.36"/><rect x="73" y="216" width="1" height="1" fill="#a8b0bc" fill-opacity="0.39"/><rect x="143" y="52" width="1" height="1" fill="#a8b0bc" fill-opacity="0.29"/><rect x="203" y="70" width="1" height="1" fill="#d0d8e4" fill-opacity="0.55"/><rect x="24" y="261" width="1" height="1" fill="#a8b0bc" fill-opacity="0.23"/><rect x="164" y="93" width="1" height="1" fill="#d0d8e4" fill-opacity="0.49"/><rect x="89" y="311" width="1" height="1" fill="#a8b0bc" fill-opacity="0.38"/><circle cx="14.8" cy="59.0" r="0.9" fill="#e4eaf2" fill-opacity="0.75"/><circle cx="61.6" cy="45.4" r="0.9" fill="#e4eaf2" fill-opacity="0.75"/><rect x="226" y="55" width="1" height="1" fill="#a8b0bc" fill-opacity="0.29"/><rect x="65" y="130" width="1" height="1" fill="#a8b0bc" fill-opacity="0.29"/><rect x="106" y="53" width="1" height="1" fill="#d0d8e4" fill-opacity="0.54"/><rect x="222" y="169" width="1" height="1" fill="#d0d8e4" fill-opacity="0.51"/><rect x="164" y="224" width="1" height="1" fill="#d0d8e4" fill-opacity="0.47"/><rect x="27" y="13" width="1" height="1" fill="#a8b0bc" fill-opacity="0.21"/><rect x="245" y="188" width="1" height="1" fill="#d0d8e4" fill-opacity="0.35"/><rect x="130" y="348" width="1" height="1" fill="#a8b0bc" fill-opacity="0.31"/><rect x="128" y="39" width="1" height="1" fill="#a8b0bc" fill-opacity="0.24"/><rect x="103" y="151" width="1" height="1" fill="#d0d8e4" fill-opacity="0.40"/><rect x="70" y="108" width="1" height="1" fill="#a8b0bc" fill-opacity="0.27"/><rect x="65" y="188" width="1" height="1" fill="#a8b0bc" fill-opacity="0.43"/><rect x="102" y="367" width="1" height="1" fill="#a8b0bc" fill-opacity="0.37"/><rect x="130" y="370" width="1" height="1" fill="#a8b0bc" fill-opacity="0.37"/><rect x="80" y="264" width="1" height="1" fill="#d0d8e4" fill-opacity="0.40"/><rect x="55" y="10" width="1" height="1" fill="#a8b0bc" fill-opacity="0.22"/><rect x="111" y="381" width="1" height="1" fill="#a8b0bc" fill-opacity="0.28"/><rect x="129" y="111" width="1" height="1" fill="#d0d8e4" fill-opacity="0.57"/><rect x="45" y="94" width="1" height="1" fill="#a8b0bc" fill-opacity="0.44"/><circle cx="178.3" cy="168.4" r="0.9" fill="#e4eaf2" fill-opacity="0.55"/><rect x="17" y="305" width="1" height="1" fill="#a8b0bc" fill-opacity="0.21"/><rect x="151" y="387" width="1" height="1" fill="#a8b0bc" fill-opacity="0.29"/><rect x="26" y="28" width="1" height="1" fill="#d0d8e4" fill-opacity="0.50"/><rect x="258" y="21" width="1" height="1" fill="#a8b0bc" fill-opacity="0.21"/><rect x="110" y="24" width="1" height="1" fill="#a8b0bc" fill-opacity="0.30"/><rect x="84" y="20" width="1" height="1" fill="#a8b0bc" fill-opacity="0.44"/><rect x="50" y="199" width="1" height="1" fill="#a8b0bc" fill-opacity="0.33"/><rect x="23" y="123" width="1" height="1" fill="#a8b0bc" fill-opacity="0.34"/><rect x="254" y="234" width="1" height="1" fill="#d0d8e4" fill-opacity="0.41"/><rect x="5" y="211" width="1" height="1" fill="#a8b0bc" fill-opacity="0.34"/><rect x="104" y="244" width="1" height="1" fill="#d0d8e4" fill-opacity="0.62"/><rect x="85" y="176" width="1" height="1" fill="#d0d8e4" fill-opacity="0.42"/><rect x="32" y="122" width="1" height="1" fill="#a8b0bc" fill-opacity="0.39"/><rect x="226" y="122" width="1" height="1" fill="#a8b0bc" fill-opacity="0.22"/><rect x="68" y="33" width="1" height="1" fill="#a8b0bc" fill-opacity="0.34"/><rect x="68" y="24" width="1" height="1" fill="#d0d8e4" fill-opacity="0.36"/><rect x="55" y="112" width="1" height="1" fill="#a8b0bc" fill-opacity="0.22"/><rect x="116" y="123" width="1" height="1" fill="#d0d8e4" fill-opacity="0.52"/><rect x="247" y="256" width="1" height="1" fill="#d0d8e4" fill-opacity="0.52"/><rect x="122" y="319" width="1" height="1" fill="#a8b0bc" fill-opacity="0.44"/><rect x="201" y="274" width="1" height="1" fill="#a8b0bc" fill-opacity="0.40"/><rect x="106" y="51" width="1" height="1" fill="#a8b0bc" fill-opacity="0.24"/><rect x="72" y="264" width="1" height="1" fill="#a8b0bc" fill-opacity="0.22"/><rect x="211" y="218" width="1" height="1" fill="#a8b0bc" fill-opacity="0.21"/><rect x="36" y="140" width="1" height="1" fill="#d0d8e4" fill-opacity="0.63"/><rect x="169" y="90" width="1" height="1" fill="#a8b0bc" fill-opacity="0.29"/><rect x="91" y="5" width="1" height="1" fill="#a8b0bc" fill-opacity="0.41"/><rect x="201" y="37" width="1" height="1" fill="#a8b0bc" fill-opacity="0.24"/><rect x="196" y="174" width="1" height="1" fill="#d0d8e4" fill-opacity="0.59"/><rect x="33" y="124" width="1" height="1" fill="#d0d8e4" fill-opacity="0.49"/><rect x="120" y="173" width="1" height="1" fill="#d0d8e4" fill-opacity="0.63"/><rect x="147" y="379" width="1" height="1" fill="#a8b0bc" fill-opacity="0.23"/><rect x="225" y="164" width="1" height="1" fill="#a8b0bc" fill-opacity="0.44"/><rect x="9" y="226" width="1" height="1" fill="#a8b0bc" fill-opacity="0.42"/><rect x="108" y="84" width="1" height="1" fill="#a8b0bc" fill-opacity="0.25"/><rect x="155" y="140" width="1" height="1" fill="#d0d8e4" fill-opacity="0.42"/><circle cx="97.1" cy="97.1" r="0.9" fill="#e4eaf2" fill-opacity="0.80"/><rect x="235" y="242" width="1" height="1" fill="#a8b0bc" fill-opacity="0.24"/><rect x="230" y="192" width="1" height="1" fill="#a8b0bc" fill-opacity="0.24"/><rect x="27" y="281" width="1" height="1" fill="#d0d8e4" fill-opacity="0.41"/><rect x="220" y="127" width="1" height="1" fill="#a8b0bc" fill-opacity="0.42"/><rect x="172" y="313" width="1" height="1" fill="#a8b0bc" fill-opacity="0.20"/><rect x="141" y="229" width="1" height="1" fill="#a8b0bc" fill-opacity="0.30"/><rect x="88" y="11" width="1" height="1" fill="#a8b0bc" fill-opacity="0.30"/><rect x="131" y="275" width="1" height="1" fill="#a8b0bc" fill-opacity="0.45"/><rect x="225" y="361" width="1" height="1" fill="#a8b0bc" fill-opacity="0.37"/><rect x="148" y="312" width="1" height="1" fill="#a8b0bc" fill-opacity="0.35"/><rect x="188" y="204" width="1" height="1" fill="#a8b0bc" fill-opacity="0.22"/><rect x="24" y="139" width="1" height="1" fill="#a8b0bc" fill-opacity="0.39"/><rect x="197" y="120" width="1" height="1" fill="#d0d8e4" fill-opacity="0.43"/><rect x="198" y="28" width="1" height="1" fill="#d0d8e4" fill-opacity="0.55"/><rect x="264" y="351" width="1" height="1" fill="#a8b0bc" fill-opacity="0.41"/><rect x="204" y="239" width="1" height="1" fill="#a8b0bc" fill-opacity="0.33"/><circle cx="247.3" cy="93.5" r="0.9" fill="#e4eaf2" fill-opacity="0.71"/><rect x="109" y="1" width="1" height="1" fill="#a8b0bc" fill-opacity="0.24"/><rect x="180" y="352" width="1" height="1" fill="#d0d8e4" fill-opacity="0.53"/><rect x="107" y="43" width="1" height="1" fill="#a8b0bc" fill-opacity="0.34"/><rect x="197" y="146" width="1" height="1" fill="#d0d8e4" fill-opacity="0.41"/><rect x="84" y="105" width="1" height="1" fill="#a8b0bc" fill-opacity="0.42"/><rect x="46" y="247" width="1" height="1" fill="#d0d8e4" fill-opacity="0.42"/><rect x="17" y="221" width="1" height="1" fill="#d0d8e4" fill-opacity="0.61"/><rect x="201" y="163" width="1" height="1" fill="#a8b0bc" fill-opacity="0.33"/><rect x="250" y="118" width="1" height="1" fill="#a8b0bc" fill-opacity="0.35"/><rect x="267" y="73" width="1" height="1" fill="#a8b0bc" fill-opacity="0.23"/><rect x="155" y="236" width="1" height="1" fill="#a8b0bc" fill-opacity="0.25"/><rect x="164" y="253" width="1" height="1" fill="#a8b0bc" fill-opacity="0.38"/><rect x="17" y="190" width="1" height="1" fill="#d0d8e4" fill-opacity="0.64"/><rect x="88" y="332" width="1" height="1" fill="#a8b0bc" fill-opacity="0.43"/><rect x="63" y="272" width="1" height="1" fill="#d0d8e4" fill-opacity="0.49"/><rect x="28" y="76" width="1" height="1" fill="#a8b0bc" fill-opacity="0.22"/><rect x="42" y="241" width="1" height="1" fill="#a8b0bc" fill-opacity="0.39"/><rect x="203" y="319" width="1" height="1" fill="#d0d8e4" fill-opacity="0.56"/><rect x="255" y="374" width="1" height="1" fill="#a8b0bc" fill-opacity="0.44"/><rect x="29" y="40" width="1" height="1" fill="#a8b0bc" fill-opacity="0.25"/><rect x="103" y="179" width="1" height="1" fill="#a8b0bc" fill-opacity="0.39"/><rect x="23" y="158" width="1" height="1" fill="#a8b0bc" fill-opacity="0.29"/><rect x="32" y="233" width="1" height="1" fill="#a8b0bc" fill-opacity="0.37"/><rect x="137" y="376" width="1" height="1" fill="#d0d8e4" fill-opacity="0.37"/><rect x="210" y="282" width="1" height="1" fill="#a8b0bc" fill-opacity="0.23"/><rect x="132" y="138" width="1" height="1" fill="#d0d8e4" fill-opacity="0.63"/><rect x="105" y="114" width="1" height="1" fill="#a8b0bc" fill-opacity="0.37"/><rect x="218" y="225" width="1" height="1" fill="#a8b0bc" fill-opacity="0.28"/><rect x="234" y="203" width="1" height="1" fill="#a8b0bc" fill-opacity="0.31"/><rect x="66" y="260" width="1" height="1" fill="#a8b0bc" fill-opacity="0.27"/><circle cx="26.5" cy="186.7" r="0.9" fill="#e4eaf2" fill-opacity="0.71"/><rect x="107" y="365" width="1" height="1" fill="#a8b0bc" fill-opacity="0.29"/><rect x="224" y="2" width="1" height="1" fill="#d0d8e4" fill-opacity="0.46"/><rect x="5" y="98" width="1" height="1" fill="#a8b0bc" fill-opacity="0.30"/><rect x="143" y="21" width="1" height="1" fill="#a8b0bc" fill-opacity="0.44"/><rect x="122" y="185" width="1" height="1" fill="#a8b0bc" fill-opacity="0.27"/><rect x="264" y="269" width="1" height="1" fill="#a8b0bc" fill-opacity="0.21"/><rect x="108" y="304" width="1" height="1" fill="#a8b0bc" fill-opacity="0.35"/><rect x="249" y="252" width="1" height="1" fill="#a8b0bc" fill-opacity="0.21"/><rect x="7" y="301" width="1" height="1" fill="#a8b0bc" fill-opacity="0.42"/><rect x="228" y="358" width="1" height="1" fill="#a8b0bc" fill-opacity="0.45"/><rect x="209" y="349" width="1" height="1" fill="#a8b0bc" fill-opacity="0.40"/><circle cx="116.5" cy="380.1" r="0.9" fill="#e4eaf2" fill-opacity="0.62"/><rect x="116" y="106" width="1" height="1" fill="#a8b0bc" fill-opacity="0.27"/><rect x="184" y="48" width="1" height="1" fill="#a8b0bc" fill-opacity="0.31"/><rect x="20" y="149" width="1" height="1" fill="#d0d8e4" fill-opacity="0.62"/><rect x="54" y="7" width="1" height="1" fill="#d0d8e4" fill-opacity="0.64"/><rect x="165" y="53" width="1" height="1" fill="#a8b0bc" fill-opacity="0.43"/><rect x="259" y="12" width="1" height="1" fill="#a8b0bc" fill-opacity="0.31"/><rect x="74" y="295" width="1" height="1" fill="#a8b0bc" fill-opacity="0.39"/><circle cx="41.9" cy="202.7" r="0.9" fill="#e4eaf2" fill-opacity="0.76"/><rect x="25" y="43" width="1" height="1" fill="#a8b0bc" fill-opacity="0.29"/><rect x="102" y="187" width="1" height="1" fill="#a8b0bc" fill-opacity="0.44"/><rect x="66" y="222" width="1" height="1" fill="#a8b0bc" fill-opacity="0.34"/><rect x="202" y="52" width="1" height="1" fill="#a8b0bc" fill-opacity="0.38"/><rect x="2" y="302" width="1" height="1" fill="#a8b0bc" fill-opacity="0.33"/><rect x="168" y="310" width="1" height="1" fill="#a8b0bc" fill-opacity="0.33"/><rect x="11" y="151" width="1" height="1" fill="#a8b0bc" fill-opacity="0.21"/><rect x="82" y="176" width="1" height="1" fill="#a8b0bc" fill-opacity="0.43"/><rect x="102" y="207" width="1" height="1" fill="#d0d8e4" fill-opacity="0.63"/><rect x="262" y="386" width="1" height="1" fill="#a8b0bc" fill-opacity="0.24"/><rect x="257" y="30" width="1" height="1" fill="#a8b0bc" fill-opacity="0.38"/><rect x="146" y="152" width="1" height="1" fill="#d0d8e4" fill-opacity="0.44"/><rect x="152" y="324" width="1" height="1" fill="#a8b0bc" fill-opacity="0.29"/><rect x="136" y="221" width="1" height="1" fill="#a8b0bc" fill-opacity="0.31"/><rect x="17" y="34" width="1" height="1" fill="#a8b0bc" fill-opacity="0.24"/><rect x="267" y="103" width="1" height="1" fill="#a8b0bc" fill-opacity="0.40"/><rect x="205" y="102" width="1" height="1" fill="#d0d8e4" fill-opacity="0.54"/><rect x="107" y="246" width="1" height="1" fill="#a8b0bc" fill-opacity="0.27"/><rect x="242" y="172" width="1" height="1" fill="#d0d8e4" fill-opacity="0.40"/><rect x="38" y="20" width="1" height="1" fill="#d0d8e4" fill-opacity="0.52"/><rect x="3" y="17" width="1" height="1" fill="#d0d8e4" fill-opacity="0.50"/><rect x="240" y="16" width="1" height="1" fill="#a8b0bc" fill-opacity="0.23"/><rect x="199" y="239" width="1" height="1" fill="#a8b0bc" fill-opacity="0.26"/><rect x="262" y="43" width="1" height="1" fill="#a8b0bc" fill-opacity="0.37"/><rect x="26" y="26" width="1" height="1" fill="#a8b0bc" fill-opacity="0.36"/><rect x="246" y="282" width="1" height="1" fill="#a8b0bc" fill-opacity="0.36"/><rect x="233" y="47" width="1" height="1" fill="#d0d8e4" fill-opacity="0.43"/><rect x="82" y="1" width="1" height="1" fill="#d0d8e4" fill-opacity="0.50"/><rect x="249" y="182" width="1" height="1" fill="#a8b0bc" fill-opacity="0.25"/><rect x="73" y="370" width="1" height="1" fill="#a8b0bc" fill-opacity="0.22"/><rect x="97" y="31" width="1" height="1" fill="#a8b0bc" fill-opacity="0.36"/><rect x="180" y="68" width="1" height="1" fill="#a8b0bc" fill-opacity="0.32"/><rect x="190" y="175" width="1" height="1" fill="#a8b0bc" fill-opacity="0.43"/><rect x="40" y="105" width="1" height="1" fill="#a8b0bc" fill-opacity="0.33"/><rect x="248" y="217" width="1" height="1" fill="#a8b0bc" fill-opacity="0.30"/><rect x="216" y="327" width="1" height="1" fill="#a8b0bc" fill-opacity="0.23"/><rect x="72" y="140" width="1" height="1" fill="#d0d8e4" fill-opacity="0.43"/><circle cx="173.7" cy="250.5" r="0.9" fill="#e4eaf2" fill-opacity="0.58"/><rect x="212" y="132" width="1" height="1" fill="#a8b0bc" fill-opacity="0.36"/><rect x="233" y="228" width="1" height="1" fill="#a8b0bc" fill-opacity="0.44"/><rect x="106" y="249" width="1" height="1" fill="#d0d8e4" fill-opacity="0.43"/><rect x="113" y="129" width="1" height="1" fill="#a8b0bc" fill-opacity="0.22"/><rect x="198" y="161" width="1" height="1" fill="#d0d8e4" fill-opacity="0.37"/><rect x="83" y="70" width="1" height="1" fill="#d0d8e4" fill-opacity="0.59"/><rect x="247" y="198" width="1" height="1" fill="#a8b0bc" fill-opacity="0.30"/><rect x="62" y="11" width="1" height="1" fill="#a8b0bc" fill-opacity="0.27"/><rect x="30" y="200" width="1" height="1" fill="#d0d8e4" fill-opacity="0.63"/><rect x="129" y="40" width="1" height="1" fill="#d0d8e4" fill-opacity="0.38"/><circle cx="148.3" cy="32.7" r="0.9" fill="#e4eaf2" fill-opacity="0.71"/><rect x="121" y="106" width="1" height="1" fill="#a8b0bc" fill-opacity="0.44"/><rect x="118" y="82" width="1" height="1" fill="#a8b0bc" fill-opacity="0.43"/><rect x="105" y="248" width="1" height="1" fill="#d0d8e4" fill-opacity="0.45"/><rect x="224" y="207" width="1" height="1" fill="#a8b0bc" fill-opacity="0.21"/><rect x="259" y="182" width="1" height="1" fill="#a8b0bc" fill-opacity="0.43"/><rect x="158" y="196" width="1" height="1" fill="#a8b0bc" fill-opacity="0.39"/><rect x="71" y="184" width="1" height="1" fill="#d0d8e4" fill-opacity="0.53"/><rect x="37" y="79" width="1" height="1" fill="#a8b0bc" fill-opacity="0.38"/><rect x="28" y="390" width="1" height="1" fill="#a8b0bc" fill-opacity="0.24"/><rect x="25" y="175" width="1" height="1" fill="#a8b0bc" fill-opacity="0.41"/><rect x="45" y="273" width="1" height="1" fill="#a8b0bc" fill-opacity="0.35"/><rect x="70" y="139" width="1" height="1" fill="#a8b0bc" fill-opacity="0.38"/><rect x="34" y="299" width="1" height="1" fill="#a8b0bc" fill-opacity="0.35"/><rect x="176" y="191" width="1" height="1" fill="#d0d8e4" fill-opacity="0.63"/><rect x="78" y="131" width="1" height="1" fill="#d0d8e4" fill-opacity="0.39"/><circle cx="115.9" cy="162.1" r="0.9" fill="#e4eaf2" fill-opacity="0.59"/><rect x="181" y="296" width="1" height="1" fill="#d0d8e4" fill-opacity="0.35"/><rect x="260" y="122" width="1" height="1" fill="#d0d8e4" fill-opacity="0.55"/><rect x="116" y="328" width="1" height="1" fill="#a8b0bc" fill-opacity="0.28"/><rect x="202" y="198" width="1" height="1" fill="#d0d8e4" fill-opacity="0.53"/><rect x="220" y="62" width="1" height="1" fill="#a8b0bc" fill-opacity="0.20"/><rect x="218" y="302" width="1" height="1" fill="#d0d8e4" fill-opacity="0.36"/><rect x="148" y="187" width="1" height="1" fill="#a8b0bc" fill-opacity="0.25"/><rect x="269" y="333" width="1" height="1" fill="#a8b0bc" fill-opacity="0.41"/><rect x="180" y="150" width="1" height="1" fill="#a8b0bc" fill-opacity="0.26"/><rect x="76" y="4" width="1" height="1" fill="#a8b0bc" fill-opacity="0.35"/><rect x="205" y="197" width="1" height="1" fill="#a8b0bc" fill-opacity="0.28"/><rect x="203" y="146" width="1" height="1" fill="#a8b0bc" fill-opacity="0.39"/><rect x="123" y="268" width="1" height="1" fill="#a8b0bc" fill-opacity="0.27"/><rect x="232" y="58" width="1" height="1" fill="#a8b0bc" fill-opacity="0.20"/><rect x="211" y="42" width="1" height="1" fill="#a8b0bc" fill-opacity="0.31"/><rect x="222" y="186" width="1" height="1" fill="#a8b0bc" fill-opacity="0.21"/><rect x="219" y="300" width="1" height="1" fill="#a8b0bc" fill-opacity="0.41"/><rect x="169" y="280" width="1" height="1" fill="#d0d8e4" fill-opacity="0.54"/><circle cx="5.6" cy="345.8" r="0.9" fill="#e4eaf2" fill-opacity="0.61"/><rect x="18" y="133" width="1" height="1" fill="#a8b0bc" fill-opacity="0.29"/><rect x="25" y="86" width="1" height="1" fill="#a8b0bc" fill-opacity="0.31"/><rect x="83" y="285" width="1" height="1" fill="#a8b0bc" fill-opacity="0.24"/><rect x="263" y="350" width="1" height="1" fill="#a8b0bc" fill-opacity="0.25"/><rect x="111" y="176" width="1" height="1" fill="#a8b0bc" fill-opacity="0.21"/><rect x="126" y="300" width="1" height="1" fill="#a8b0bc" fill-opacity="0.42"/><rect x="188" y="298" width="1" height="1" fill="#d0d8e4" fill-opacity="0.63"/><rect x="219" y="163" width="1" height="1" fill="#a8b0bc" fill-opacity="0.36"/><rect x="244" y="279" width="1" height="1" fill="#a8b0bc" fill-opacity="0.25"/><rect x="90" y="98" width="1" height="1" fill="#a8b0bc" fill-opacity="0.39"/><rect x="53" y="209" width="1" height="1" fill="#d0d8e4" fill-opacity="0.46"/><rect x="26" y="237" width="1" height="1" fill="#a8b0bc" fill-opacity="0.24"/><rect x="79" y="3" width="1" height="1" fill="#a8b0bc" fill-opacity="0.31"/><rect x="29" y="2" width="1" height="1" fill="#a8b0bc" fill-opacity="0.44"/><rect x="230" y="128" width="1" height="1" fill="#d0d8e4" fill-opacity="0.37"/><rect x="42" y="3" width="1" height="1" fill="#a8b0bc" fill-opacity="0.35"/><rect x="209" y="187" width="1" height="1" fill="#d0d8e4" fill-opacity="0.49"/><rect x="254" y="238" width="1" height="1" fill="#a8b0bc" fill-opacity="0.24"/><rect x="118" y="172" width="1" height="1" fill="#d0d8e4" fill-opacity="0.42"/><rect x="81" y="319" width="1" height="1" fill="#a8b0bc" fill-opacity="0.33"/><rect x="61" y="260" width="1" height="1" fill="#a8b0bc" fill-opacity="0.22"/><rect x="202" y="159" width="1" height="1" fill="#a8b0bc" fill-opacity="0.41"/><rect x="215" y="121" width="1" height="1" fill="#a8b0bc" fill-opacity="0.23"/><rect x="143" y="32" width="1" height="1" fill="#a8b0bc" fill-opacity="0.43"/><rect x="176" y="16" width="1" height="1" fill="#a8b0bc" fill-opacity="0.32"/><rect x="122" y="59" width="1" height="1" fill="#a8b0bc" fill-opacity="0.31"/><rect x="20" y="264" width="1" height="1" fill="#a8b0bc" fill-opacity="0.27"/><rect x="25" y="118" width="1" height="1" fill="#d0d8e4" fill-opacity="0.44"/><rect x="26" y="135" width="1" height="1" fill="#d0d8e4" fill-opacity="0.38"/><rect x="95" y="82" width="1" height="1" fill="#a8b0bc" fill-opacity="0.32"/><rect x="27" y="337" width="1" height="1" fill="#a8b0bc" fill-opacity="0.37"/><rect x="125" y="341" width="1" height="1" fill="#a8b0bc" fill-opacity="0.26"/><rect x="79" y="103" width="1" height="1" fill="#d0d8e4" fill-opacity="0.50"/><rect x="96" y="198" width="1" height="1" fill="#d0d8e4" fill-opacity="0.52"/><rect x="125" y="257" width="1" height="1" fill="#a8b0bc" fill-opacity="0.30"/><rect x="118" y="51" width="1" height="1" fill="#a8b0bc" fill-opacity="0.42"/><rect x="84" y="143" width="1" height="1" fill="#a8b0bc" fill-opacity="0.35"/><rect x="48" y="174" width="1" height="1" fill="#d0d8e4" fill-opacity="0.36"/><rect x="30" y="295" width="1" height="1" fill="#d0d8e4" fill-opacity="0.37"/><rect x="22" y="245" width="1" height="1" fill="#a8b0bc" fill-opacity="0.36"/><rect x="9" y="179" width="1" height="1" fill="#a8b0bc" fill-opacity="0.28"/><rect x="191" y="199" width="1" height="1" fill="#d0d8e4" fill-opacity="0.60"/><rect x="171" y="331" width="1" height="1" fill="#a8b0bc" fill-opacity="0.32"/><rect x="88" y="244" width="1" height="1" fill="#a8b0bc" fill-opacity="0.42"/><rect x="102" y="306" width="1" height="1" fill="#d0d8e4" fill-opacity="0.63"/><circle cx="107.7" cy="335.0" r="0.9" fill="#e4eaf2" fill-opacity="0.59"/><rect x="206" y="284" width="1" height="1" fill="#a8b0bc" fill-opacity="0.27"/><rect x="48" y="161" width="1" height="1" fill="#d0d8e4" fill-opacity="0.47"/><rect x="70" y="242" width="1" height="1" fill="#a8b0bc" fill-opacity="0.35"/><rect x="125" y="112" width="1" height="1" fill="#a8b0bc" fill-opacity="0.40"/><rect x="182" y="95" width="1" height="1" fill="#a8b0bc" fill-opacity="0.35"/><rect x="139" y="352" width="1" height="1" fill="#d0d8e4" fill-opacity="0.44"/><rect x="93" y="239" width="1" height="1" fill="#a8b0bc" fill-opacity="0.43"/><rect x="13" y="195" width="1" height="1" fill="#a8b0bc" fill-opacity="0.33"/><circle cx="12.6" cy="87.7" r="0.9" fill="#e4eaf2" fill-opacity="0.79"/><rect x="61" y="178" width="1" height="1" fill="#a8b0bc" fill-opacity="0.23"/><rect x="53" y="385" width="1" height="1" fill="#a8b0bc" fill-opacity="0.26"/><circle cx="18.0" cy="43.0" r="0.9" fill="#e4eaf2" fill-opacity="0.77"/><rect x="254" y="327" width="1" height="1" fill="#d0d8e4" fill-opacity="0.43"/><rect x="47" y="106" width="1" height="1" fill="#a8b0bc" fill-opacity="0.24"/><rect x="199" y="192" width="1" height="1" fill="#a8b0bc" fill-opacity="0.28"/><rect x="234" y="333" width="1" height="1" fill="#d0d8e4" fill-opacity="0.57"/><rect x="252" y="218" width="1" height="1" fill="#a8b0bc" fill-opacity="0.34"/><rect x="78" y="14" width="1" height="1" fill="#a8b0bc" fill-opacity="0.31"/><rect x="33" y="32" width="1" height="1" fill="#a8b0bc" fill-opacity="0.29"/><rect x="264" y="190" width="1" height="1" fill="#d0d8e4" fill-opacity="0.57"/><rect x="163" y="126" width="1" height="1" fill="#a8b0bc" fill-opacity="0.28"/><rect x="175" y="334" width="1" height="1" fill="#d0d8e4" fill-opacity="0.44"/><rect x="41" y="3" width="1" height="1" fill="#a8b0bc" fill-opacity="0.26"/><rect x="2" y="118" width="1" height="1" fill="#a8b0bc" fill-opacity="0.25"/><rect x="183" y="228" width="1" height="1" fill="#a8b0bc" fill-opacity="0.38"/><rect x="57" y="360" width="1" height="1" fill="#a8b0bc" fill-opacity="0.35"/><rect x="195" y="286" width="1" height="1" fill="#a8b0bc" fill-opacity="0.42"/><rect x="174" y="270" width="1" height="1" fill="#a8b0bc" fill-opacity="0.25"/><rect x="129" y="213" width="1" height="1" fill="#a8b0bc" fill-opacity="0.39"/><rect x="96" y="186" width="1" height="1" fill="#a8b0bc" fill-opacity="0.41"/><rect x="83" y="219" width="1" height="1" fill="#a8b0bc" fill-opacity="0.36"/><rect x="86" y="109" width="1" height="1" fill="#a8b0bc" fill-opacity="0.35"/><rect x="178" y="52" width="1" height="1" fill="#a8b0bc" fill-opacity="0.34"/><rect x="54" y="40" width="1" height="1" fill="#d0d8e4" fill-opacity="0.36"/><rect x="138" y="115" width="1" height="1" fill="#a8b0bc" fill-opacity="0.27"/><rect x="45" y="156" width="1" height="1" fill="#d0d8e4" fill-opacity="0.37"/><rect x="97" y="272" width="1" height="1" fill="#a8b0bc" fill-opacity="0.21"/><rect x="63" y="110" width="1" height="1" fill="#d0d8e4" fill-opacity="0.48"/><rect x="71" y="188" width="1" height="1" fill="#a8b0bc" fill-opacity="0.24"/><rect x="184" y="282" width="1" height="1" fill="#a8b0bc" fill-opacity="0.33"/><rect x="213" y="374" width="1" height="1" fill="#a8b0bc" fill-opacity="0.21"/><rect x="139" y="259" width="1" height="1" fill="#a8b0bc" fill-opacity="0.37"/><rect x="102" y="241" width="1" height="1" fill="#a8b0bc" fill-opacity="0.37"/><rect x="255" y="277" width="1" height="1" fill="#d0d8e4" fill-opacity="0.56"/><rect x="64" y="240" width="1" height="1" fill="#a8b0bc" fill-opacity="0.22"/><rect x="208" y="89" width="1" height="1" fill="#a8b0bc" fill-opacity="0.33"/><rect x="199" y="299" width="1" height="1" fill="#a8b0bc" fill-opacity="0.43"/><circle cx="122.3" cy="221.5" r="0.9" fill="#e4eaf2" fill-opacity="0.65"/><rect x="197" y="374" width="1" height="1" fill="#a8b0bc" fill-opacity="0.39"/><rect x="180" y="211" width="1" height="1" fill="#d0d8e4" fill-opacity="0.61"/><rect x="40" y="190" width="1" height="1" fill="#a8b0bc" fill-opacity="0.37"/><rect x="265" y="314" width="1" height="1" fill="#d0d8e4" fill-opacity="0.37"/><rect x="118" y="357" width="1" height="1" fill="#d0d8e4" fill-opacity="0.58"/><rect x="92" y="301" width="1" height="1" fill="#a8b0bc" fill-opacity="0.37"/><rect x="176" y="338" width="1" height="1" fill="#d0d8e4" fill-opacity="0.64"/><rect x="136" y="193" width="1" height="1" fill="#a8b0bc" fill-opacity="0.34"/><rect x="14" y="375" width="1" height="1" fill="#a8b0bc" fill-opacity="0.32"/><rect x="12" y="74" width="1" height="1" fill="#d0d8e4" fill-opacity="0.43"/><rect x="82" y="317" width="1" height="1" fill="#a8b0bc" fill-opacity="0.37"/><rect x="157" y="350" width="1" height="1" fill="#a8b0bc" fill-opacity="0.28"/><rect x="72" y="142" width="1" height="1" fill="#a8b0bc" fill-opacity="0.23"/><rect x="41" y="123" width="1" height="1" fill="#d0d8e4" fill-opacity="0.63"/><rect x="98" y="98" width="1" height="1" fill="#a8b0bc" fill-opacity="0.36"/><rect x="132" y="46" width="1" height="1" fill="#a8b0bc" fill-opacity="0.27"/><rect x="40" y="307" width="1" height="1" fill="#a8b0bc" fill-opacity="0.31"/><rect x="211" y="212" width="1" height="1" fill="#d0d8e4" fill-opacity="0.45"/><rect x="261" y="17" width="1" height="1" fill="#d0d8e4" fill-opacity="0.48"/><circle cx="0.9" cy="101.4" r="0.9" fill="#e4eaf2" fill-opacity="0.76"/><rect x="203" y="317" width="1" height="1" fill="#a8b0bc" fill-opacity="0.28"/><rect x="129" y="356" width="1" height="1" fill="#d0d8e4" fill-opacity="0.39"/><rect x="273" y="217" width="1" height="1" fill="#a8b0bc" fill-opacity="0.22"/><rect x="118" y="204" width="1" height="1" fill="#a8b0bc" fill-opacity="0.28"/><rect x="262" y="186" width="1" height="1" fill="#a8b0bc" fill-opacity="0.39"/><rect x="67" y="165" width="1" height="1" fill="#a8b0bc" fill-opacity="0.26"/><rect x="275" y="243" width="1" height="1" fill="#a8b0bc" fill-opacity="0.37"/><rect x="186" y="204" width="1" height="1" fill="#a8b0bc" fill-opacity="0.24"/><rect x="8" y="47" width="1" height="1" fill="#a8b0bc" fill-opacity="0.20"/><rect x="186" y="132" width="1" height="1" fill="#a8b0bc" fill-opacity="0.28"/><rect x="136" y="82" width="1" height="1" fill="#d0d8e4" fill-opacity="0.49"/><rect x="19" y="33" width="1" height="1" fill="#d0d8e4" fill-opacity="0.52"/><rect x="80" y="279" width="1" height="1" fill="#a8b0bc" fill-opacity="0.42"/><rect x="258" y="260" width="1" height="1" fill="#a8b0bc" fill-opacity="0.31"/><rect x="231" y="232" width="1" height="1" fill="#a8b0bc" fill-opacity="0.26"/><rect x="18" y="204" width="1" height="1" fill="#a8b0bc" fill-opacity="0.31"/><rect x="247" y="352" width="1" height="1" fill="#a8b0bc" fill-opacity="0.40"/><rect x="37" y="371" width="1" height="1" fill="#d0d8e4" fill-opacity="0.49"/><circle cx="244.5" cy="116.2" r="0.9" fill="#e4eaf2" fill-opacity="0.65"/><rect x="255" y="327" width="1" height="1" fill="#d0d8e4" fill-opacity="0.57"/><rect x="20" y="109" width="1" height="1" fill="#a8b0bc" fill-opacity="0.43"/><rect x="188" y="15" width="1" height="1" fill="#a8b0bc" fill-opacity="0.29"/><rect x="47" y="88" width="1" height="1" fill="#a8b0bc" fill-opacity="0.29"/><rect x="74" y="161" width="1" height="1" fill="#d0d8e4" fill-opacity="0.53"/><rect x="208" y="365" width="1" height="1" fill="#a8b0bc" fill-opacity="0.42"/><rect x="26" y="77" width="1" height="1" fill="#d0d8e4" fill-opacity="0.58"/><rect x="170" y="186" width="1" height="1" fill="#d0d8e4" fill-opacity="0.48"/><rect x="54" y="86" width="1" height="1" fill="#a8b0bc" fill-opacity="0.21"/><rect x="263" y="372" width="1" height="1" fill="#a8b0bc" fill-opacity="0.30"/><rect x="77" y="305" width="1" height="1" fill="#a8b0bc" fill-opacity="0.24"/><rect x="244" y="363" width="1" height="1" fill="#a8b0bc" fill-opacity="0.31"/><rect x="61" y="250" width="1" height="1" fill="#a8b0bc" fill-opacity="0.27"/><rect x="83" y="237" width="1" height="1" fill="#a8b0bc" fill-opacity="0.32"/><rect x="188" y="185" width="1" height="1" fill="#d0d8e4" fill-opacity="0.48"/><rect x="219" y="364" width="1" height="1" fill="#a8b0bc" fill-opacity="0.35"/><rect x="218" y="278" width="1" height="1" fill="#a8b0bc" fill-opacity="0.30"/><rect x="43" y="8" width="1" height="1" fill="#a8b0bc" fill-opacity="0.28"/><rect x="70" y="10" width="1" height="1" fill="#a8b0bc" fill-opacity="0.37"/><rect x="99" y="170" width="1" height="1" fill="#a8b0bc" fill-opacity="0.43"/><circle cx="193.5" cy="85.7" r="0.9" fill="#e4eaf2" fill-opacity="0.61"/><rect x="160" y="252" width="1" height="1" fill="#a8b0bc" fill-opacity="0.42"/><rect x="168" y="278" width="1" height="1" fill="#a8b0bc" fill-opacity="0.41"/><rect x="79" y="242" width="1" height="1" fill="#d0d8e4" fill-opacity="0.45"/><circle cx="73.2" cy="129.2" r="0.9" fill="#e4eaf2" fill-opacity="0.75"/><rect x="130" y="220" width="1" height="1" fill="#a8b0bc" fill-opacity="0.27"/><rect x="21" y="43" width="1" height="1" fill="#a8b0bc" fill-opacity="0.35"/><rect x="270" y="243" width="1" height="1" fill="#d0d8e4" fill-opacity="0.65"/><rect x="137" y="165" width="1" height="1" fill="#a8b0bc" fill-opacity="0.29"/><rect x="210" y="225" width="1" height="1" fill="#a8b0bc" fill-opacity="0.44"/><rect x="145" y="293" width="1" height="1" fill="#a8b0bc" fill-opacity="0.35"/><rect x="159" y="45" width="1" height="1" fill="#a8b0bc" fill-opacity="0.38"/><rect x="96" y="50" width="1" height="1" fill="#d0d8e4" fill-opacity="0.57"/><rect x="211" y="151" width="1" height="1" fill="#a8b0bc" fill-opacity="0.39"/><rect x="60" y="261" width="1" height="1" fill="#a8b0bc" fill-opacity="0.27"/><rect x="1" y="231" width="1" height="1" fill="#d0d8e4" fill-opacity="0.53"/><rect x="272" y="89" width="1" height="1" fill="#d0d8e4" fill-opacity="0.48"/><rect x="160" y="118" width="1" height="1" fill="#a8b0bc" fill-opacity="0.34"/><rect x="168" y="356" width="1" height="1" fill="#a8b0bc" fill-opacity="0.32"/><rect x="180" y="246" width="1" height="1" fill="#a8b0bc" fill-opacity="0.27"/><rect x="188" y="151" width="1" height="1" fill="#a8b0bc" fill-opacity="0.24"/><rect x="99" y="268" width="1" height="1" fill="#a8b0bc" fill-opacity="0.32"/><rect x="225" y="128" width="1" height="1" fill="#a8b0bc" fill-opacity="0.39"/><rect x="187" y="167" width="1" height="1" fill="#d0d8e4" fill-opacity="0.36"/><rect x="148" y="336" width="1" height="1" fill="#d0d8e4" fill-opacity="0.41"/><rect x="223" y="208" width="1" height="1" fill="#d0d8e4" fill-opacity="0.45"/><circle cx="183.4" cy="251.0" r="0.9" fill="#e4eaf2" fill-opacity="0.65"/><rect x="108" y="49" width="1" height="1" fill="#a8b0bc" fill-opacity="0.22"/><rect x="234" y="57" width="1" height="1" fill="#a8b0bc" fill-opacity="0.44"/><rect x="138" y="295" width="1" height="1" fill="#a8b0bc" fill-opacity="0.26"/><rect x="102" y="384" width="1" height="1" fill="#a8b0bc" fill-opacity="0.43"/><rect x="244" y="266" width="1" height="1" fill="#a8b0bc" fill-opacity="0.38"/><rect x="250" y="232" width="1" height="1" fill="#a8b0bc" fill-opacity="0.35"/><rect x="264" y="231" width="1" height="1" fill="#a8b0bc" fill-opacity="0.25"/><rect x="174" y="19" width="1" height="1" fill="#a8b0bc" fill-opacity="0.29"/><rect x="71" y="193" width="1" height="1" fill="#a8b0bc" fill-opacity="0.34"/><rect x="186" y="124" width="1" height="1" fill="#a8b0bc" fill-opacity="0.33"/><rect x="218" y="225" width="1" height="1" fill="#a8b0bc" fill-opacity="0.34"/><rect x="227" y="38" width="1" height="1" fill="#a8b0bc" fill-opacity="0.42"/><rect x="230" y="3" width="1" height="1" fill="#d0d8e4" fill-opacity="0.53"/><rect x="236" y="274" width="1" height="1" fill="#a8b0bc" fill-opacity="0.23"/><rect x="211" y="278" width="1" height="1" fill="#a8b0bc" fill-opacity="0.27"/><rect x="101" y="366" width="1" height="1" fill="#a8b0bc" fill-opacity="0.25"/><rect x="272" y="383" width="1" height="1" fill="#a8b0bc" fill-opacity="0.25"/><rect x="201" y="151" width="1" height="1" fill="#a8b0bc" fill-opacity="0.37"/><rect x="75" y="232" width="1" height="1" fill="#a8b0bc" fill-opacity="0.26"/><rect x="151" y="167" width="1" height="1" fill="#d0d8e4" fill-opacity="0.39"/><rect x="253" y="102" width="1" height="1" fill="#a8b0bc" fill-opacity="0.23"/><rect x="87" y="383" width="1" height="1" fill="#a8b0bc" fill-opacity="0.41"/><rect x="269" y="272" width="1" height="1" fill="#a8b0bc" fill-opacity="0.31"/><rect x="46" y="98" width="1" height="1" fill="#a8b0bc" fill-opacity="0.24"/><rect x="188" y="204" width="1" height="1" fill="#a8b0bc" fill-opacity="0.26"/><rect x="39" y="45" width="1" height="1" fill="#a8b0bc" fill-opacity="0.22"/><rect x="144" y="100" width="1" height="1" fill="#d0d8e4" fill-opacity="0.43"/><rect x="236" y="370" width="1" height="1" fill="#d0d8e4" fill-opacity="0.42"/><rect x="256" y="184" width="1" height="1" fill="#d0d8e4" fill-opacity="0.49"/><rect x="149" y="101" width="1" height="1" fill="#d0d8e4" fill-opacity="0.46"/><rect x="244" y="277" width="1" height="1" fill="#a8b0bc" fill-opacity="0.21"/><rect x="74" y="163" width="1" height="1" fill="#a8b0bc" fill-opacity="0.35"/><rect x="1" y="183" width="1" height="1" fill="#d0d8e4" fill-opacity="0.64"/><rect x="190" y="268" width="1" height="1" fill="#a8b0bc" fill-opacity="0.45"/><rect x="218" y="180" width="1" height="1" fill="#a8b0bc" fill-opacity="0.43"/><rect x="152" y="234" width="1" height="1" fill="#a8b0bc" fill-opacity="0.37"/><circle cx="134.8" cy="368.9" r="0.9" fill="#e4eaf2" fill-opacity="0.85"/><rect x="262" y="17" width="1" height="1" fill="#a8b0bc" fill-opacity="0.28"/><rect x="228" y="218" width="1" height="1" fill="#a8b0bc" fill-opacity="0.23"/><rect x="69" y="50" width="1" height="1" fill="#a8b0bc" fill-opacity="0.39"/><rect x="53" y="65" width="1" height="1" fill="#a8b0bc" fill-opacity="0.23"/><rect x="230" y="254" width="1" height="1" fill="#d0d8e4" fill-opacity="0.57"/><rect x="202" y="105" width="1" height="1" fill="#a8b0bc" fill-opacity="0.29"/><rect x="108" y="357" width="1" height="1" fill="#a8b0bc" fill-opacity="0.40"/><rect x="174" y="32" width="1" height="1" fill="#a8b0bc" fill-opacity="0.34"/><rect x="218" y="91" width="1" height="1" fill="#a8b0bc" fill-opacity="0.29"/><rect x="127" y="164" width="1" height="1" fill="#d0d8e4" fill-opacity="0.53"/><rect x="77" y="135" width="1" height="1" fill="#a8b0bc" fill-opacity="0.24"/><rect x="108" y="25" width="1" height="1" fill="#a8b0bc" fill-opacity="0.42"/><rect x="248" y="233" width="1" height="1" fill="#a8b0bc" fill-opacity="0.34"/><rect x="153" y="69" width="1" height="1" fill="#a8b0bc" fill-opacity="0.32"/><rect x="54" y="173" width="1" height="1" fill="#d0d8e4" fill-opacity="0.54"/><rect x="91" y="93" width="1" height="1" fill="#a8b0bc" fill-opacity="0.34"/><rect x="82" y="184" width="1" height="1" fill="#a8b0bc" fill-opacity="0.36"/><rect x="242" y="146" width="1" height="1" fill="#a8b0bc" fill-opacity="0.34"/><rect x="184" y="95" width="1" height="1" fill="#a8b0bc" fill-opacity="0.43"/><rect x="40" y="266" width="1" height="1" fill="#a8b0bc" fill-opacity="0.32"/><rect x="125" y="93" width="1" height="1" fill="#a8b0bc" fill-opacity="0.44"/><rect x="11" y="56" width="1" height="1" fill="#d0d8e4" fill-opacity="0.46"/><circle cx="53.9" cy="303.5" r="0.9" fill="#e4eaf2" fill-opacity="0.61"/><circle cx="195.1" cy="155.0" r="0.9" fill="#e4eaf2" fill-opacity="0.73"/><rect x="247" y="259" width="1" height="1" fill="#a8b0bc" fill-opacity="0.31"/><rect x="195" y="60" width="1" height="1" fill="#a8b0bc" fill-opacity="0.45"/><rect x="255" y="254" width="1" height="1" fill="#a8b0bc" fill-opacity="0.38"/><rect x="273" y="306" width="1" height="1" fill="#d0d8e4" fill-opacity="0.48"/><rect x="174" y="362" width="1" height="1" fill="#a8b0bc" fill-opacity="0.22"/><rect x="40" y="372" width="1" height="1" fill="#d0d8e4" fill-opacity="0.63"/><rect x="41" y="41" width="1" height="1" fill="#a8b0bc" fill-opacity="0.31"/><rect x="128" y="91" width="1" height="1" fill="#d0d8e4" fill-opacity="0.58"/><rect x="200" y="168" width="1" height="1" fill="#a8b0bc" fill-opacity="0.30"/><rect x="128" y="127" width="1" height="1" fill="#a8b0bc" fill-opacity="0.44"/><rect x="221" y="53" width="1" height="1" fill="#a8b0bc" fill-opacity="0.40"/><rect x="95" y="348" width="1" height="1" fill="#d0d8e4" fill-opacity="0.37"/><rect x="173" y="149" width="1" height="1" fill="#a8b0bc" fill-opacity="0.34"/><rect x="237" y="247" width="1" height="1" fill="#d0d8e4" fill-opacity="0.42"/><rect x="220" y="153" width="1" height="1" fill="#a8b0bc" fill-opacity="0.40"/><rect x="159" y="88" width="1" height="1" fill="#d0d8e4" fill-opacity="0.50"/><rect x="186" y="385" width="1" height="1" fill="#a8b0bc" fill-opacity="0.34"/><rect x="151" y="112" width="1" height="1" fill="#a8b0bc" fill-opacity="0.44"/><rect x="192" y="104" width="1" height="1" fill="#a8b0bc" fill-opacity="0.35"/><rect x="102" y="262" width="1" height="1" fill="#a8b0bc" fill-opacity="0.40"/><rect x="107" y="322" width="1" height="1" fill="#a8b0bc" fill-opacity="0.24"/><rect x="91" y="49" width="1" height="1" fill="#d0d8e4" fill-opacity="0.65"/><rect x="115" y="94" width="1" height="1" fill="#d0d8e4" fill-opacity="0.61"/><rect x="67" y="119" width="1" height="1" fill="#a8b0bc" fill-opacity="0.23"/><rect x="58" y="155" width="1" height="1" fill="#a8b0bc" fill-opacity="0.24"/><rect x="167" y="118" width="1" height="1" fill="#d0d8e4" fill-opacity="0.64"/><rect x="185" y="107" width="1" height="1" fill="#d0d8e4" fill-opacity="0.45"/><rect x="240" y="166" width="1" height="1" fill="#a8b0bc" fill-opacity="0.39"/><rect x="194" y="294" width="1" height="1" fill="#a8b0bc" fill-opacity="0.24"/><rect x="102" y="375" width="1" height="1" fill="#a8b0bc" fill-opacity="0.27"/><rect x="85" y="172" width="1" height="1" fill="#d0d8e4" fill-opacity="0.40"/><rect x="29" y="7" width="1" height="1" fill="#a8b0bc" fill-opacity="0.38"/><rect x="125" y="253" width="1" height="1" fill="#a8b0bc" fill-opacity="0.29"/><circle cx="112.5" cy="16.0" r="0.9" fill="#e4eaf2" fill-opacity="0.77"/><rect x="27" y="79" width="1" height="1" fill="#d0d8e4" fill-opacity="0.50"/><rect x="207" y="294" width="1" height="1" fill="#a8b0bc" fill-opacity="0.41"/><rect x="56" y="54" width="1" height="1" fill="#d0d8e4" fill-opacity="0.59"/><rect x="84" y="151" width="1" height="1" fill="#d0d8e4" fill-opacity="0.44"/><rect x="123" y="388" width="1" height="1" fill="#a8b0bc" fill-opacity="0.44"/><rect x="245" y="390" width="1" height="1" fill="#a8b0bc" fill-opacity="0.25"/><rect x="121" y="67" width="1" height="1" fill="#d0d8e4" fill-opacity="0.52"/><rect x="232" y="192" width="1" height="1" fill="#a8b0bc" fill-opacity="0.44"/><rect x="35" y="88" width="1" height="1" fill="#d0d8e4" fill-opacity="0.53"/><rect x="216" y="389" width="1" height="1" fill="#d0d8e4" fill-opacity="0.53"/><rect x="207" y="208" width="1" height="1" fill="#a8b0bc" fill-opacity="0.28"/><rect x="255" y="206" width="1" height="1" fill="#a8b0bc" fill-opacity="0.36"/><rect x="274" y="245" width="1" height="1" fill="#a8b0bc" fill-opacity="0.31"/><rect x="174" y="240" width="1" height="1" fill="#a8b0bc" fill-opacity="0.43"/><rect x="245" y="306" width="1" height="1" fill="#d0d8e4" fill-opacity="0.57"/><rect x="54" y="192" width="1" height="1" fill="#a8b0bc" fill-opacity="0.25"/><rect x="262" y="90" width="1" height="1" fill="#d0d8e4" fill-opacity="0.60"/><rect x="112" y="10" width="1" height="1" fill="#a8b0bc" fill-opacity="0.36"/><rect x="196" y="139" width="1" height="1" fill="#a8b0bc" fill-opacity="0.24"/><rect x="182" y="306" width="1" height="1" fill="#d0d8e4" fill-opacity="0.52"/><rect x="158" y="1" width="1" height="1" fill="#a8b0bc" fill-opacity="0.30"/><circle cx="20.0" cy="28.7" r="0.9" fill="#e4eaf2" fill-opacity="0.76"/><rect x="155" y="270" width="1" height="1" fill="#d0d8e4" fill-opacity="0.54"/><circle cx="117.9" cy="153.4" r="0.9" fill="#e4eaf2" fill-opacity="0.84"/><rect x="42" y="320" width="1" height="1" fill="#a8b0bc" fill-opacity="0.29"/><rect x="192" y="107" width="1" height="1" fill="#d0d8e4" fill-opacity="0.52"/><rect x="161" y="22" width="1" height="1" fill="#d0d8e4" fill-opacity="0.64"/><rect x="210" y="115" width="1" height="1" fill="#d0d8e4" fill-opacity="0.38"/><rect x="151" y="135" width="1" height="1" fill="#a8b0bc" fill-opacity="0.27"/><rect x="20" y="170" width="1" height="1" fill="#a8b0bc" fill-opacity="0.24"/><rect x="91" y="49" width="1" height="1" fill="#a8b0bc" fill-opacity="0.44"/><rect x="15" y="349" width="1" height="1" fill="#a8b0bc" fill-opacity="0.23"/><rect x="118" y="198" width="1" height="1" fill="#a8b0bc" fill-opacity="0.34"/><rect x="2" y="117" width="1" height="1" fill="#d0d8e4" fill-opacity="0.60"/><rect x="49" y="159" width="1" height="1" fill="#d0d8e4" fill-opacity="0.44"/><rect x="33" y="97" width="1" height="1" fill="#d0d8e4" fill-opacity="0.45"/><rect x="184" y="367" width="1" height="1" fill="#a8b0bc" fill-opacity="0.25"/><rect x="133" y="127" width="1" height="1" fill="#a8b0bc" fill-opacity="0.35"/><rect x="269" y="269" width="1" height="1" fill="#a8b0bc" fill-opacity="0.40"/><rect x="140" y="76" width="1" height="1" fill="#a8b0bc" fill-opacity="0.27"/><rect x="59" y="152" width="1" height="1" fill="#a8b0bc" fill-opacity="0.21"/><rect x="100" y="376" width="1" height="1" fill="#a8b0bc" fill-opacity="0.29"/><rect x="126" y="273" width="1" height="1" fill="#a8b0bc" fill-opacity="0.30"/><rect x="160" y="108" width="1" height="1" fill="#a8b0bc" fill-opacity="0.31"/><rect x="195" y="136" width="1" height="1" fill="#a8b0bc" fill-opacity="0.25"/><rect x="134" y="193" width="1" height="1" fill="#a8b0bc" fill-opacity="0.23"/><rect x="127" y="299" width="1" height="1" fill="#d0d8e4" fill-opacity="0.60"/><rect x="222" y="378" width="1" height="1" fill="#a8b0bc" fill-opacity="0.24"/><rect x="38" y="310" width="1" height="1" fill="#a8b0bc" fill-opacity="0.28"/><rect x="38" y="355" width="1" height="1" fill="#a8b0bc" fill-opacity="0.26"/><rect x="164" y="275" width="1" height="1" fill="#a8b0bc" fill-opacity="0.34"/><rect x="146" y="217" width="1" height="1" fill="#a8b0bc" fill-opacity="0.40"/><rect x="227" y="337" width="1" height="1" fill="#a8b0bc" fill-opacity="0.21"/><rect x="130" y="10" width="1" height="1" fill="#a8b0bc" fill-opacity="0.32"/><rect x="206" y="326" width="1" height="1" fill="#d0d8e4" fill-opacity="0.56"/><rect x="92" y="284" width="1" height="1" fill="#a8b0bc" fill-opacity="0.25"/><rect x="240" y="185" width="1" height="1" fill="#a8b0bc" fill-opacity="0.25"/><rect x="229" y="185" width="1" height="1" fill="#d0d8e4" fill-opacity="0.60"/><rect x="143" y="229" width="1" height="1" fill="#a8b0bc" fill-opacity="0.26"/><rect x="221" y="360" width="1" height="1" fill="#a8b0bc" fill-opacity="0.21"/><rect x="130" y="31" width="1" height="1" fill="#a8b0bc" fill-opacity="0.29"/><rect x="66" y="303" width="1" height="1" fill="#a8b0bc" fill-opacity="0.43"/><rect x="54" y="149" width="1" height="1" fill="#a8b0bc" fill-opacity="0.39"/><rect x="118" y="73" width="1" height="1" fill="#a8b0bc" fill-opacity="0.34"/><rect x="267" y="255" width="1" height="1" fill="#d0d8e4" fill-opacity="0.60"/><rect x="118" y="198" width="1" height="1" fill="#d0d8e4" fill-opacity="0.57"/><rect x="110" y="74" width="1" height="1" fill="#d0d8e4" fill-opacity="0.44"/><rect x="73" y="98" width="1" height="1" fill="#a8b0bc" fill-opacity="0.36"/><rect x="259" y="230" width="1" height="1" fill="#a8b0bc" fill-opacity="0.42"/><circle cx="38.3" cy="230.3" r="0.9" fill="#e4eaf2" fill-opacity="0.65"/><rect x="42" y="44" width="1" height="1" fill="#a8b0bc" fill-opacity="0.38"/><rect x="114" y="321" width="1" height="1" fill="#d0d8e4" fill-opacity="0.36"/><rect x="85" y="103" width="1" height="1" fill="#a8b0bc" fill-opacity="0.21"/><rect x="70" y="133" width="1" height="1" fill="#a8b0bc" fill-opacity="0.33"/><rect x="272" y="42" width="1" height="1" fill="#a8b0bc" fill-opacity="0.43"/><rect x="79" y="211" width="1" height="1" fill="#a8b0bc" fill-opacity="0.42"/><rect x="258" y="223" width="1" height="1" fill="#a8b0bc" fill-opacity="0.29"/><rect x="194" y="221" width="1" height="1" fill="#a8b0bc" fill-opacity="0.30"/><rect x="17" y="158" width="1" height="1" fill="#d0d8e4" fill-opacity="0.47"/><rect x="129" y="66" width="1" height="1" fill="#d0d8e4" fill-opacity="0.48"/><rect x="106" y="302" width="1" height="1" fill="#a8b0bc" fill-opacity="0.22"/><rect x="177" y="289" width="1" height="1" fill="#a8b0bc" fill-opacity="0.29"/><rect x="245" y="199" width="1" height="1" fill="#a8b0bc" fill-opacity="0.23"/><rect x="80" y="230" width="1" height="1" fill="#d0d8e4" fill-opacity="0.55"/><rect x="267" y="159" width="1" height="1" fill="#a8b0bc" fill-opacity="0.29"/><rect x="101" y="22" width="1" height="1" fill="#a8b0bc" fill-opacity="0.43"/><rect x="247" y="52" width="1" height="1" fill="#a8b0bc" fill-opacity="0.45"/><rect x="46" y="118" width="1" height="1" fill="#a8b0bc" fill-opacity="0.25"/><rect x="9" y="181" width="1" height="1" fill="#d0d8e4" fill-opacity="0.37"/><rect x="136" y="52" width="1" height="1" fill="#d0d8e4" fill-opacity="0.62"/><rect x="241" y="209" width="1" height="1" fill="#a8b0bc" fill-opacity="0.38"/><rect x="19" y="303" width="1" height="1" fill="#a8b0bc" fill-opacity="0.42"/><rect x="79" y="289" width="1" height="1" fill="#a8b0bc" fill-opacity="0.26"/><rect x="136" y="168" width="1" height="1" fill="#a8b0bc" fill-opacity="0.34"/><rect x="147" y="274" width="1" height="1" fill="#a8b0bc" fill-opacity="0.35"/><rect x="55" y="204" width="1" height="1" fill="#a8b0bc" fill-opacity="0.40"/><rect x="53" y="114" width="1" height="1" fill="#a8b0bc" fill-opacity="0.27"/><rect x="149" y="89" width="1" height="1" fill="#a8b0bc" fill-opacity="0.42"/><rect x="86" y="84" width="1" height="1" fill="#a8b0bc" fill-opacity="0.41"/><rect x="206" y="353" width="1" height="1" fill="#a8b0bc" fill-opacity="0.28"/><rect x="138" y="23" width="1" height="1" fill="#a8b0bc" fill-opacity="0.41"/><rect x="253" y="325" width="1" height="1" fill="#a8b0bc" fill-opacity="0.40"/><rect x="80" y="220" width="1" height="1" fill="#a8b0bc" fill-opacity="0.43"/><circle cx="141.4" cy="68.9" r="0.9" fill="#e4eaf2" fill-opacity="0.74"/><rect x="59" y="331" width="1" height="1" fill="#a8b0bc" fill-opacity="0.36"/><rect x="242" y="124" width="1" height="1" fill="#a8b0bc" fill-opacity="0.34"/><rect x="56" y="273" width="1" height="1" fill="#a8b0bc" fill-opacity="0.25"/><rect x="34" y="63" width="1" height="1" fill="#a8b0bc" fill-opacity="0.43"/><rect x="220" y="332" width="1" height="1" fill="#a8b0bc" fill-opacity="0.40"/><rect x="91" y="144" width="1" height="1" fill="#d0d8e4" fill-opacity="0.43"/><rect x="172" y="222" width="1" height="1" fill="#a8b0bc" fill-opacity="0.34"/><rect x="220" y="348" width="1" height="1" fill="#a8b0bc" fill-opacity="0.42"/><rect x="10" y="355" width="1" height="1" fill="#a8b0bc" fill-opacity="0.40"/><rect x="124" y="230" width="1" height="1" fill="#d0d8e4" fill-opacity="0.42"/><rect x="51" y="294" width="1" height="1" fill="#d0d8e4" fill-opacity="0.42"/><rect x="151" y="198" width="1" height="1" fill="#a8b0bc" fill-opacity="0.41"/><rect x="78" y="305" width="1" height="1" fill="#a8b0bc" fill-opacity="0.24"/><rect x="266" y="58" width="1" height="1" fill="#a8b0bc" fill-opacity="0.21"/><rect x="97" y="10" width="1" height="1" fill="#a8b0bc" fill-opacity="0.44"/><rect x="70" y="280" width="1" height="1" fill="#a8b0bc" fill-opacity="0.20"/><circle cx="1.9" cy="47.7" r="0.9" fill="#e4eaf2" fill-opacity="0.69"/><rect x="69" y="18" width="1" height="1" fill="#a8b0bc" fill-opacity="0.28"/><rect x="50" y="171" width="1" height="1" fill="#d0d8e4" fill-opacity="0.45"/><rect x="155" y="74" width="1" height="1" fill="#a8b0bc" fill-opacity="0.21"/><rect x="255" y="363" width="1" height="1" fill="#a8b0bc" fill-opacity="0.32"/><rect x="110" y="293" width="1" height="1" fill="#a8b0bc" fill-opacity="0.38"/><rect x="122" y="156" width="1" height="1" fill="#d0d8e4" fill-opacity="0.40"/><rect x="94" y="94" width="1" height="1" fill="#a8b0bc" fill-opacity="0.42"/><rect x="86" y="288" width="1" height="1" fill="#a8b0bc" fill-opacity="0.43"/><rect x="129" y="291" width="1" height="1" fill="#a8b0bc" fill-opacity="0.35"/><rect x="224" y="113" width="1" height="1" fill="#a8b0bc" fill-opacity="0.30"/><rect x="212" y="298" width="1" height="1" fill="#a8b0bc" fill-opacity="0.28"/><rect x="253" y="113" width="1" height="1" fill="#a8b0bc" fill-opacity="0.42"/><rect x="226" y="174" width="1" height="1" fill="#a8b0bc" fill-opacity="0.39"/><rect x="231" y="74" width="1" height="1" fill="#d0d8e4" fill-opacity="0.63"/><rect x="218" y="204" width="1" height="1" fill="#a8b0bc" fill-opacity="0.44"/><rect x="274" y="315" width="1" height="1" fill="#a8b0bc" fill-opacity="0.42"/><rect x="241" y="197" width="1" height="1" fill="#a8b0bc" fill-opacity="0.35"/><rect x="37" y="131" width="1" height="1" fill="#a8b0bc" fill-opacity="0.33"/><rect x="178" y="321" width="1" height="1" fill="#d0d8e4" fill-opacity="0.44"/><rect x="263" y="126" width="1" height="1" fill="#a8b0bc" fill-opacity="0.39"/><rect x="269" y="198" width="1" height="1" fill="#d0d8e4" fill-opacity="0.60"/><rect x="87" y="241" width="1" height="1" fill="#d0d8e4" fill-opacity="0.36"/><rect x="34" y="341" width="1" height="1" fill="#a8b0bc" fill-opacity="0.30"/><rect x="219" y="174" width="1" height="1" fill="#a8b0bc" fill-opacity="0.29"/><rect x="210" y="251" width="1" height="1" fill="#a8b0bc" fill-opacity="0.20"/><rect x="275" y="31" width="1" height="1" fill="#a8b0bc" fill-opacity="0.40"/><rect x="259" y="269" width="1" height="1" fill="#a8b0bc" fill-opacity="0.39"/><rect x="184" y="226" width="1" height="1" fill="#d0d8e4" fill-opacity="0.52"/><rect x="149" y="101" width="1" height="1" fill="#d0d8e4" fill-opacity="0.38"/><rect x="26" y="246" width="1" height="1" fill="#a8b0bc" fill-opacity="0.42"/><rect x="53" y="183" width="1" height="1" fill="#a8b0bc" fill-opacity="0.32"/><rect x="170" y="77" width="1" height="1" fill="#a8b0bc" fill-opacity="0.44"/><rect x="41" y="85" width="1" height="1" fill="#a8b0bc" fill-opacity="0.23"/><circle cx="3.4" cy="374.9" r="0.9" fill="#e4eaf2" fill-opacity="0.56"/><rect x="230" y="226" width="1" height="1" fill="#a8b0bc" fill-opacity="0.42"/><rect x="32" y="250" width="1" height="1" fill="#a8b0bc" fill-opacity="0.37"/><rect x="65" y="58" width="1" height="1" fill="#a8b0bc" fill-opacity="0.27"/><rect x="167" y="289" width="1" height="1" fill="#a8b0bc" fill-opacity="0.38"/><rect x="270" y="158" width="1" height="1" fill="#a8b0bc" fill-opacity="0.28"/><rect x="243" y="87" width="1" height="1" fill="#a8b0bc" fill-opacity="0.33"/><rect x="123" y="223" width="1" height="1" fill="#a8b0bc" fill-opacity="0.43"/><rect x="148" y="152" width="1" height="1" fill="#d0d8e4" fill-opacity="0.36"/><rect x="254" y="326" width="1" height="1" fill="#a8b0bc" fill-opacity="0.31"/><circle cx="10.8" cy="310.0" r="0.9" fill="#e4eaf2" fill-opacity="0.73"/><rect x="270" y="185" width="1" height="1" fill="#d0d8e4" fill-opacity="0.60"/><rect x="256" y="180" width="1" height="1" fill="#a8b0bc" fill-opacity="0.21"/><rect x="263" y="34" width="1" height="1" fill="#a8b0bc" fill-opacity="0.35"/><rect x="48" y="137" width="1" height="1" fill="#a8b0bc" fill-opacity="0.20"/><rect x="110" y="149" width="1" height="1" fill="#d0d8e4" fill-opacity="0.56"/><rect x="262" y="341" width="1" height="1" fill="#a8b0bc" fill-opacity="0.35"/><rect x="191" y="308" width="1" height="1" fill="#a8b0bc" fill-opacity="0.28"/><rect x="169" y="123" width="1" height="1" fill="#d0d8e4" fill-opacity="0.47"/><rect x="195" y="27" width="1" height="1" fill="#d0d8e4" fill-opacity="0.64"/><rect x="266" y="133" width="1" height="1" fill="#d0d8e4" fill-opacity="0.64"/><rect x="30" y="29" width="1" height="1" fill="#a8b0bc" fill-opacity="0.45"/><rect x="8" y="328" width="1" height="1" fill="#a8b0bc" fill-opacity="0.32"/><rect x="39" y="198" width="1" height="1" fill="#a8b0bc" fill-opacity="0.25"/><rect x="248" y="289" width="1" height="1" fill="#a8b0bc" fill-opacity="0.36"/><circle cx="165.1" cy="366.8" r="0.9" fill="#e4eaf2" fill-opacity="0.82"/><rect x="15" y="165" width="1" height="1" fill="#a8b0bc" fill-opacity="0.39"/><rect x="23" y="324" width="1" height="1" fill="#a8b0bc" fill-opacity="0.36"/><rect x="261" y="340" width="1" height="1" fill="#d0d8e4" fill-opacity="0.54"/><rect x="151" y="203" width="1" height="1" fill="#a8b0bc" fill-opacity="0.25"/><rect x="190" y="162" width="1" height="1" fill="#a8b0bc" fill-opacity="0.41"/><rect x="107" y="285" width="1" height="1" fill="#d0d8e4" fill-opacity="0.60"/><rect x="65" y="238" width="1" height="1" fill="#a8b0bc" fill-opacity="0.35"/><rect x="24" y="74" width="1" height="1" fill="#a8b0bc" fill-opacity="0.40"/><rect x="216" y="150" width="1" height="1" fill="#a8b0bc" fill-opacity="0.31"/><rect x="148" y="104" width="1" height="1" fill="#a8b0bc" fill-opacity="0.44"/><rect x="244" y="47" width="1" height="1" fill="#a8b0bc" fill-opacity="0.42"/><rect x="122" y="250" width="1" height="1" fill="#a8b0bc" fill-opacity="0.35"/><rect x="250" y="60" width="1" height="1" fill="#d0d8e4" fill-opacity="0.43"/><rect x="21" y="116" width="1" height="1" fill="#a8b0bc" fill-opacity="0.40"/><rect x="160" y="379" width="1" height="1" fill="#a8b0bc" fill-opacity="0.29"/><rect x="158" y="231" width="1" height="1" fill="#a8b0bc" fill-opacity="0.33"/><rect x="28" y="306" width="1" height="1" fill="#d0d8e4" fill-opacity="0.37"/><rect x="224" y="2" width="1" height="1" fill="#a8b0bc" fill-opacity="0.36"/><rect x="82" y="35" width="1" height="1" fill="#a8b0bc" fill-opacity="0.36"/><rect x="147" y="318" width="1" height="1" fill="#a8b0bc" fill-opacity="0.36"/><rect x="84" y="17" width="1" height="1" fill="#a8b0bc" fill-opacity="0.23"/><circle cx="44.0" cy="14.8" r="0.9" fill="#e4eaf2" fill-opacity="0.66"/><rect x="209" y="165" width="1" height="1" fill="#a8b0bc" fill-opacity="0.26"/><circle cx="260.7" cy="82.7" r="0.9" fill="#e4eaf2" fill-opacity="0.78"/><circle cx="238.4" cy="38.0" r="0.9" fill="#e4eaf2" fill-opacity="0.75"/><rect x="160" y="222" width="1" height="1" fill="#a8b0bc" fill-opacity="0.44"/><rect x="271" y="372" width="1" height="1" fill="#a8b0bc" fill-opacity="0.33"/><rect x="193" y="72" width="1" height="1" fill="#d0d8e4" fill-opacity="0.58"/><rect x="33" y="116" width="1" height="1" fill="#a8b0bc" fill-opacity="0.42"/><rect x="276" y="108" width="1" height="1" fill="#d0d8e4" fill-opacity="0.53"/><rect x="100" y="94" width="1" height="1" fill="#a8b0bc" fill-opacity="0.21"/><rect x="119" y="47" width="1" height="1" fill="#a8b0bc" fill-opacity="0.28"/><rect x="37" y="79" width="1" height="1" fill="#a8b0bc" fill-opacity="0.44"/><rect x="117" y="241" width="1" height="1" fill="#a8b0bc" fill-opacity="0.44"/><rect x="228" y="362" width="1" height="1" fill="#d0d8e4" fill-opacity="0.57"/><rect x="242" y="130" width="1" height="1" fill="#a8b0bc" fill-opacity="0.28"/><circle cx="255.4" cy="104.7" r="0.9" fill="#e4eaf2" fill-opacity="0.62"/><rect x="94" y="290" width="1" height="1" fill="#a8b0bc" fill-opacity="0.25"/><rect x="35" y="342" width="1" height="1" fill="#a8b0bc" fill-opacity="0.33"/><rect x="231" y="190" width="1" height="1" fill="#a8b0bc" fill-opacity="0.24"/><rect x="258" y="235" width="1" height="1" fill="#a8b0bc" fill-opacity="0.30"/><rect x="196" y="148" width="1" height="1" fill="#a8b0bc" fill-opacity="0.29"/><rect x="210" y="338" width="1" height="1" fill="#a8b0bc" fill-opacity="0.36"/><circle cx="257.9" cy="254.2" r="0.9" fill="#e4eaf2" fill-opacity="0.63"/><rect x="241" y="294" width="1" height="1" fill="#a8b0bc" fill-opacity="0.35"/><rect x="46" y="7" width="1" height="1" fill="#a8b0bc" fill-opacity="0.42"/><rect x="110" y="235" width="1" height="1" fill="#a8b0bc" fill-opacity="0.42"/><rect x="203" y="146" width="1" height="1" fill="#a8b0bc" fill-opacity="0.25"/><rect x="260" y="63" width="1" height="1" fill="#d0d8e4" fill-opacity="0.51"/><rect x="41" y="385" width="1" height="1" fill="#a8b0bc" fill-opacity="0.37"/><rect x="72" y="52" width="1" height="1" fill="#d0d8e4" fill-opacity="0.62"/><rect x="246" y="263" width="1" height="1" fill="#a8b0bc" fill-opacity="0.24"/><rect x="275" y="128" width="1" height="1" fill="#a8b0bc" fill-opacity="0.21"/><rect x="87" y="204" width="1" height="1" fill="#a8b0bc" fill-opacity="0.30"/><rect x="106" y="7" width="1" height="1" fill="#a8b0bc" fill-opacity="0.29"/><rect x="31" y="144" width="1" height="1" fill="#a8b0bc" fill-opacity="0.39"/><rect x="115" y="45" width="1" height="1" fill="#a8b0bc" fill-opacity="0.35"/><rect x="133" y="379" width="1" height="1" fill="#a8b0bc" fill-opacity="0.33"/><rect x="8" y="52" width="1" height="1" fill="#a8b0bc" fill-opacity="0.25"/><rect x="48" y="42" width="1" height="1" fill="#d0d8e4" fill-opacity="0.53"/><rect x="135" y="220" width="1" height="1" fill="#a8b0bc" fill-opacity="0.42"/><rect x="203" y="167" width="1" height="1" fill="#a8b0bc" fill-opacity="0.20"/><rect x="10" y="284" width="1" height="1" fill="#a8b0bc" fill-opacity="0.31"/><rect x="143" y="145" width="1" height="1" fill="#a8b0bc" fill-opacity="0.43"/><rect x="263" y="295" width="1" height="1" fill="#a8b0bc" fill-opacity="0.44"/><rect x="194" y="90" width="1" height="1" fill="#a8b0bc" fill-opacity="0.24"/><rect x="29" y="152" width="1" height="1" fill="#a8b0bc" fill-opacity="0.25"/><rect x="22" y="132" width="1" height="1" fill="#a8b0bc" fill-opacity="0.42"/><rect x="246" y="321" width="1" height="1" fill="#a8b0bc" fill-opacity="0.41"/><rect x="78" y="229" width="1" height="1" fill="#a8b0bc" fill-opacity="0.26"/><rect x="149" y="103" width="1" height="1" fill="#d0d8e4" fill-opacity="0.42"/><rect x="216" y="74" width="1" height="1" fill="#a8b0bc" fill-opacity="0.31"/><rect x="243" y="248" width="1" height="1" fill="#a8b0bc" fill-opacity="0.33"/><rect x="91" y="259" width="1" height="1" fill="#a8b0bc" fill-opacity="0.24"/><rect x="276" y="15" width="1" height="1" fill="#a8b0bc" fill-opacity="0.28"/><rect x="92" y="217" width="1" height="1" fill="#a8b0bc" fill-opacity="0.24"/><rect x="229" y="277" width="1" height="1" fill="#a8b0bc" fill-opacity="0.24"/><rect x="31" y="200" width="1" height="1" fill="#a8b0bc" fill-opacity="0.38"/><rect x="66" y="338" width="1" height="1" fill="#d0d8e4" fill-opacity="0.49"/><rect x="33" y="68" width="1" height="1" fill="#d0d8e4" fill-opacity="0.37"/><rect x="172" y="280" width="1" height="1" fill="#a8b0bc" fill-opacity="0.24"/><rect x="66" y="171" width="1" height="1" fill="#d0d8e4" fill-opacity="0.59"/><rect x="107" y="5" width="1" height="1" fill="#a8b0bc" fill-opacity="0.25"/><rect x="80" y="364" width="1" height="1" fill="#a8b0bc" fill-opacity="0.30"/><rect x="186" y="365" width="1" height="1" fill="#a8b0bc" fill-opacity="0.35"/><rect x="183" y="49" width="1" height="1" fill="#a8b0bc" fill-opacity="0.28"/><circle cx="93.5" cy="273.1" r="0.9" fill="#e4eaf2" fill-opacity="0.75"/><rect x="119" y="390" width="1" height="1" fill="#d0d8e4" fill-opacity="0.48"/><rect x="130" y="202" width="1" height="1" fill="#a8b0bc" fill-opacity="0.36"/><rect x="197" y="186" width="1" height="1" fill="#a8b0bc" fill-opacity="0.43"/><rect x="172" y="269" width="1" height="1" fill="#d0d8e4" fill-opacity="0.57"/><rect x="126" y="374" width="1" height="1" fill="#d0d8e4" fill-opacity="0.37"/><rect x="276" y="65" width="1" height="1" fill="#d0d8e4" fill-opacity="0.54"/><rect x="216" y="135" width="1" height="1" fill="#a8b0bc" fill-opacity="0.24"/><rect x="34" y="45" width="1" height="1" fill="#a8b0bc" fill-opacity="0.41"/><circle cx="148.5" cy="335.7" r="0.9" fill="#e4eaf2" fill-opacity="0.68"/><rect x="49" y="351" width="1" height="1" fill="#a8b0bc" fill-opacity="0.33"/><rect x="233" y="49" width="1" height="1" fill="#a8b0bc" fill-opacity="0.36"/><rect x="27" y="338" width="1" height="1" fill="#d0d8e4" fill-opacity="0.52"/><rect x="215" y="55" width="1" height="1" fill="#d0d8e4" fill-opacity="0.51"/><rect x="106" y="318" width="1" height="1" fill="#a8b0bc" fill-opacity="0.21"/><rect x="193" y="14" width="1" height="1" fill="#a8b0bc" fill-opacity="0.25"/><rect x="114" y="164" width="1" height="1" fill="#a8b0bc" fill-opacity="0.36"/><rect x="97" y="90" width="1" height="1" fill="#d0d8e4" fill-opacity="0.37"/><rect x="161" y="284" width="1" height="1" fill="#a8b0bc" fill-opacity="0.21"/><rect x="23" y="251" width="1" height="1" fill="#d0d8e4" fill-opacity="0.54"/><rect x="272" y="274" width="1" height="1" fill="#a8b0bc" fill-opacity="0.44"/><rect x="66" y="43" width="1" height="1" fill="#a8b0bc" fill-opacity="0.21"/><rect x="157" y="209" width="1" height="1" fill="#a8b0bc" fill-opacity="0.35"/><rect x="130" y="273" width="1" height="1" fill="#d0d8e4" fill-opacity="0.59"/><rect x="189" y="39" width="1" height="1" fill="#a8b0bc" fill-opacity="0.37"/><rect x="54" y="145" width="1" height="1" fill="#a8b0bc" fill-opacity="0.27"/><rect x="23" y="112" width="1" height="1" fill="#a8b0bc" fill-opacity="0.39"/><rect x="272" y="331" width="1" height="1" fill="#d0d8e4" fill-opacity="0.64"/><rect x="141" y="242" width="1" height="1" fill="#a8b0bc" fill-opacity="0.38"/><rect x="231" y="135" width="1" height="1" fill="#a8b0bc" fill-opacity="0.22"/><rect x="259" y="168" width="1" height="1" fill="#a8b0bc" fill-opacity="0.26"/><rect x="240" y="373" width="1" height="1" fill="#a8b0bc" fill-opacity="0.33"/><rect x="79" y="275" width="1" height="1" fill="#a8b0bc" fill-opacity="0.41"/><circle cx="4.9" cy="197.1" r="0.9" fill="#e4eaf2" fill-opacity="0.56"/><rect x="173" y="147" width="1" height="1" fill="#a8b0bc" fill-opacity="0.28"/><rect x="266" y="84" width="1" height="1" fill="#a8b0bc" fill-opacity="0.42"/><rect x="30" y="9" width="1" height="1" fill="#a8b0bc" fill-opacity="0.36"/><rect x="10" y="328" width="1" height="1" fill="#d0d8e4" fill-opacity="0.53"/><rect x="67" y="361" width="1" height="1" fill="#a8b0bc" fill-opacity="0.45"/><rect x="152" y="355" width="1" height="1" fill="#a8b0bc" fill-opacity="0.35"/><rect x="260" y="171" width="1" height="1" fill="#a8b0bc" fill-opacity="0.44"/><rect x="274" y="50" width="1" height="1" fill="#d0d8e4" fill-opacity="0.58"/><rect x="58" y="91" width="1" height="1" fill="#a8b0bc" fill-opacity="0.41"/><rect x="22" y="327" width="1" height="1" fill="#d0d8e4" fill-opacity="0.65"/><rect x="31" y="317" width="1" height="1" fill="#a8b0bc" fill-opacity="0.23"/><rect x="234" y="55" width="1" height="1" fill="#d0d8e4" fill-opacity="0.65"/><rect x="133" y="165" width="1" height="1" fill="#d0d8e4" fill-opacity="0.54"/><rect x="272" y="270" width="1" height="1" fill="#a8b0bc" fill-opacity="0.21"/><rect x="246" y="295" width="1" height="1" fill="#a8b0bc" fill-opacity="0.37"/><rect x="74" y="172" width="1" height="1" fill="#a8b0bc" fill-opacity="0.22"/><rect x="129" y="279" width="1" height="1" fill="#d0d8e4" fill-opacity="0.61"/><rect x="252" y="291" width="1" height="1" fill="#a8b0bc" fill-opacity="0.39"/><rect x="203" y="45" width="1" height="1" fill="#a8b0bc" fill-opacity="0.43"/><rect x="47" y="341" width="1" height="1" fill="#d0d8e4" fill-opacity="0.48"/><rect x="146" y="29" width="1" height="1" fill="#a8b0bc" fill-opacity="0.41"/><rect x="172" y="101" width="1" height="1" fill="#a8b0bc" fill-opacity="0.22"/><rect x="211" y="106" width="1" height="1" fill="#a8b0bc" fill-opacity="0.41"/><rect x="87" y="66" width="1" height="1" fill="#a8b0bc" fill-opacity="0.29"/><rect x="145" y="179" width="1" height="1" fill="#a8b0bc" fill-opacity="0.27"/><rect x="138" y="374" width="1" height="1" fill="#a8b0bc" fill-opacity="0.30"/><rect x="128" y="176" width="1" height="1" fill="#a8b0bc" fill-opacity="0.36"/><rect x="258" y="59" width="1" height="1" fill="#a8b0bc" fill-opacity="0.45"/><rect x="0" y="271" width="1" height="1" fill="#a8b0bc" fill-opacity="0.33"/><rect x="201" y="100" width="1" height="1" fill="#a8b0bc" fill-opacity="0.36"/><rect x="273" y="178" width="1" height="1" fill="#d0d8e4" fill-opacity="0.50"/><rect x="187" y="259" width="1" height="1" fill="#d0d8e4" fill-opacity="0.55"/><rect x="189" y="278" width="1" height="1" fill="#a8b0bc" fill-opacity="0.42"/><rect x="168" y="196" width="1" height="1" fill="#a8b0bc" fill-opacity="0.29"/><rect x="66" y="358" width="1" height="1" fill="#a8b0bc" fill-opacity="0.29"/><rect x="163" y="194" width="1" height="1" fill="#a8b0bc" fill-opacity="0.27"/><rect x="211" y="54" width="1" height="1" fill="#a8b0bc" fill-opacity="0.23"/><rect x="21" y="383" width="1" height="1" fill="#a8b0bc" fill-opacity="0.32"/><rect x="20" y="63" width="1" height="1" fill="#a8b0bc" fill-opacity="0.43"/><rect x="259" y="156" width="1" height="1" fill="#a8b0bc" fill-opacity="0.26"/><rect x="230" y="54" width="1" height="1" fill="#a8b0bc" fill-opacity="0.25"/><rect x="204" y="339" width="1" height="1" fill="#a8b0bc" fill-opacity="0.28"/><rect x="253" y="39" width="1" height="1" fill="#d0d8e4" fill-opacity="0.45"/><rect x="251" y="100" width="1" height="1" fill="#d0d8e4" fill-opacity="0.61"/><rect x="86" y="80" width="1" height="1" fill="#a8b0bc" fill-opacity="0.22"/><rect x="159" y="121" width="1" height="1" fill="#a8b0bc" fill-opacity="0.23"/><rect x="190" y="104" width="1" height="1" fill="#a8b0bc" fill-opacity="0.38"/><rect x="46" y="127" width="1" height="1" fill="#d0d8e4" fill-opacity="0.56"/><rect x="246" y="11" width="1" height="1" fill="#a8b0bc" fill-opacity="0.29"/><rect x="244" y="195" width="1" height="1" fill="#a8b0bc" fill-opacity="0.24"/><rect x="123" y="133" width="1" height="1" fill="#a8b0bc" fill-opacity="0.36"/><rect x="245" y="159" width="1" height="1" fill="#a8b0bc" fill-opacity="0.42"/><rect x="264" y="376" width="1" height="1" fill="#d0d8e4" fill-opacity="0.41"/><rect x="100" y="133" width="1" height="1" fill="#d0d8e4" fill-opacity="0.59"/><rect x="226" y="60" width="1" height="1" fill="#a8b0bc" fill-opacity="0.45"/><rect x="94" y="232" width="1" height="1" fill="#a8b0bc" fill-opacity="0.38"/><rect x="1" y="316" width="1" height="1" fill="#d0d8e4" fill-opacity="0.56"/><rect x="97" y="271" width="1" height="1" fill="#a8b0bc" fill-opacity="0.39"/><rect x="221" y="232" width="1" height="1" fill="#d0d8e4" fill-opacity="0.56"/><rect x="212" y="353" width="1" height="1" fill="#d0d8e4" fill-opacity="0.62"/><rect x="197" y="33" width="1" height="1" fill="#a8b0bc" fill-opacity="0.43"/><rect x="24" y="339" width="1" height="1" fill="#d0d8e4" fill-opacity="0.39"/><rect x="245" y="280" width="1" height="1" fill="#a8b0bc" fill-opacity="0.29"/><rect x="188" y="244" width="1" height="1" fill="#a8b0bc" fill-opacity="0.41"/><circle cx="87.8" cy="334.8" r="0.9" fill="#e4eaf2" fill-opacity="0.81"/><rect x="121" y="96" width="1" height="1" fill="#a8b0bc" fill-opacity="0.30"/><rect x="184" y="35" width="1" height="1" fill="#a8b0bc" fill-opacity="0.22"/><rect x="34" y="121" width="1" height="1" fill="#a8b0bc" fill-opacity="0.40"/><rect x="103" y="347" width="1" height="1" fill="#a8b0bc" fill-opacity="0.44"/><rect x="92" y="127" width="1" height="1" fill="#a8b0bc" fill-opacity="0.40"/><rect x="163" y="371" width="1" height="1" fill="#a8b0bc" fill-opacity="0.39"/><rect x="45" y="364" width="1" height="1" fill="#a8b0bc" fill-opacity="0.25"/><circle cx="273.1" cy="27.6" r="0.9" fill="#e4eaf2" fill-opacity="0.85"/><rect x="18" y="164" width="1" height="1" fill="#d0d8e4" fill-opacity="0.64"/><rect x="149" y="355" width="1" height="1" fill="#a8b0bc" fill-opacity="0.39"/><rect x="19" y="257" width="1" height="1" fill="#a8b0bc" fill-opacity="0.38"/><rect x="78" y="11" width="1" height="1" fill="#a8b0bc" fill-opacity="0.26"/><rect x="140" y="3" width="1" height="1" fill="#a8b0bc" fill-opacity="0.26"/><rect x="99" y="239" width="1" height="1" fill="#d0d8e4" fill-opacity="0.49"/><rect x="118" y="112" width="1" height="1" fill="#a8b0bc" fill-opacity="0.39"/><rect x="66" y="49" width="1" height="1" fill="#d0d8e4" fill-opacity="0.43"/><rect x="209" y="217" width="1" height="1" fill="#a8b0bc" fill-opacity="0.29"/><rect x="257" y="326" width="1" height="1" fill="#a8b0bc" fill-opacity="0.45"/><rect x="274" y="307" width="1" height="1" fill="#d0d8e4" fill-opacity="0.50"/><rect x="247" y="112" width="1" height="1" fill="#d0d8e4" fill-opacity="0.64"/><rect x="226" y="375" width="1" height="1" fill="#a8b0bc" fill-opacity="0.37"/><rect x="31" y="284" width="1" height="1" fill="#a8b0bc" fill-opacity="0.43"/><rect x="222" y="342" width="1" height="1" fill="#d0d8e4" fill-opacity="0.43"/><rect x="166" y="191" width="1" height="1" fill="#d0d8e4" fill-opacity="0.53"/><rect x="113" y="281" width="1" height="1" fill="#d0d8e4" fill-opacity="0.54"/><rect x="102" y="260" width="1" height="1" fill="#a8b0bc" fill-opacity="0.23"/><rect x="75" y="57" width="1" height="1" fill="#a8b0bc" fill-opacity="0.23"/><rect x="211" y="231" width="1" height="1" fill="#a8b0bc" fill-opacity="0.38"/><rect x="217" y="13" width="1" height="1" fill="#d0d8e4" fill-opacity="0.49"/><rect x="248" y="359" width="1" height="1" fill="#a8b0bc" fill-opacity="0.40"/><rect x="52" y="289" width="1" height="1" fill="#a8b0bc" fill-opacity="0.39"/><rect x="125" y="92" width="1" height="1" fill="#a8b0bc" fill-opacity="0.24"/><rect x="182" y="265" width="1" height="1" fill="#a8b0bc" fill-opacity="0.40"/><rect x="79" y="237" width="1" height="1" fill="#d0d8e4" fill-opacity="0.54"/><rect x="48" y="112" width="1" height="1" fill="#a8b0bc" fill-opacity="0.28"/><rect x="189" y="147" width="1" height="1" fill="#a8b0bc" fill-opacity="0.44"/><rect x="160" y="356" width="1" height="1" fill="#a8b0bc" fill-opacity="0.23"/><rect x="20" y="357" width="1" height="1" fill="#a8b0bc" fill-opacity="0.22"/><rect x="165" y="160" width="1" height="1" fill="#a8b0bc" fill-opacity="0.29"/><rect x="162" y="64" width="1" height="1" fill="#a8b0bc" fill-opacity="0.26"/><rect x="140" y="347" width="1" height="1" fill="#a8b0bc" fill-opacity="0.39"/><rect x="225" y="5" width="1" height="1" fill="#a8b0bc" fill-opacity="0.40"/><rect x="136" y="163" width="1" height="1" fill="#d0d8e4" fill-opacity="0.43"/><rect x="132" y="313" width="1" height="1" fill="#d0d8e4" fill-opacity="0.37"/><rect x="72" y="337" width="1" height="1" fill="#a8b0bc" fill-opacity="0.30"/><rect x="248" y="206" width="1" height="1" fill="#d0d8e4" fill-opacity="0.43"/><rect x="169" y="148" width="1" height="1" fill="#a8b0bc" fill-opacity="0.36"/><rect x="142" y="127" width="1" height="1" fill="#a8b0bc" fill-opacity="0.30"/><rect x="175" y="378" width="1" height="1" fill="#d0d8e4" fill-opacity="0.63"/><rect x="84" y="10" width="1" height="1" fill="#a8b0bc" fill-opacity="0.41"/><circle cx="27.7" cy="296.9" r="0.9" fill="#e4eaf2" fill-opacity="0.79"/><rect x="135" y="80" width="1" height="1" fill="#d0d8e4" fill-opacity="0.41"/><rect x="2" y="187" width="1" height="1" fill="#d0d8e4" fill-opacity="0.65"/><rect x="142" y="16" width="1" height="1" fill="#a8b0bc" fill-opacity="0.31"/><rect x="181" y="147" width="1" height="1" fill="#a8b0bc" fill-opacity="0.41"/><rect x="220" y="98" width="1" height="1" fill="#a8b0bc" fill-opacity="0.21"/><rect x="139" y="5" width="1" height="1" fill="#a8b0bc" fill-opacity="0.30"/><rect x="257" y="198" width="1" height="1" fill="#a8b0bc" fill-opacity="0.39"/><rect x="108" y="217" width="1" height="1" fill="#d0d8e4" fill-opacity="0.47"/><rect x="146" y="19" width="1" height="1" fill="#a8b0bc" fill-opacity="0.22"/><rect x="137" y="189" width="1" height="1" fill="#a8b0bc" fill-opacity="0.29"/><rect x="3" y="371" width="1" height="1" fill="#d0d8e4" fill-opacity="0.44"/><rect x="273" y="285" width="1" height="1" fill="#a8b0bc" fill-opacity="0.28"/><rect x="194" y="324" width="1" height="1" fill="#d0d8e4" fill-opacity="0.48"/><rect x="241" y="85" width="1" height="1" fill="#d0d8e4" fill-opacity="0.64"/><rect x="11" y="65" width="1" height="1" fill="#a8b0bc" fill-opacity="0.37"/><rect x="39" y="8" width="1" height="1" fill="#d0d8e4" fill-opacity="0.65"/><rect x="252" y="25" width="1" height="1" fill="#d0d8e4" fill-opacity="0.48"/><rect x="102" y="118" width="1" height="1" fill="#d0d8e4" fill-opacity="0.47"/><rect x="46" y="13" width="1" height="1" fill="#a8b0bc" fill-opacity="0.31"/><circle cx="200.1" cy="224.7" r="0.9" fill="#e4eaf2" fill-opacity="0.82"/><rect x="247" y="211" width="1" height="1" fill="#a8b0bc" fill-opacity="0.37"/><rect x="175" y="68" width="1" height="1" fill="#a8b0bc" fill-opacity="0.31"/><rect x="137" y="191" width="1" height="1" fill="#a8b0bc" fill-opacity="0.35"/><circle cx="86.3" cy="60.0" r="0.9" fill="#e4eaf2" fill-opacity="0.78"/><rect x="77" y="324" width="1" height="1" fill="#d0d8e4" fill-opacity="0.45"/><rect x="78" y="77" width="1" height="1" fill="#a8b0bc" fill-opacity="0.26"/><rect x="251" y="380" width="1" height="1" fill="#a8b0bc" fill-opacity="0.44"/><circle cx="14.4" cy="213.9" r="0.9" fill="#e4eaf2" fill-opacity="0.63"/><rect x="6" y="364" width="1" height="1" fill="#a8b0bc" fill-opacity="0.43"/><rect x="23" y="325" width="1" height="1" fill="#a8b0bc" fill-opacity="0.42"/><rect x="87" y="11" width="1" height="1" fill="#a8b0bc" fill-opacity="0.29"/><rect x="43" y="61" width="1" height="1" fill="#a8b0bc" fill-opacity="0.35"/><rect x="214" y="36" width="1" height="1" fill="#a8b0bc" fill-opacity="0.41"/><rect x="68" y="230" width="1" height="1" fill="#a8b0bc" fill-opacity="0.40"/><rect x="161" y="35" width="1" height="1" fill="#a8b0bc" fill-opacity="0.37"/><rect x="66" y="51" width="1" height="1" fill="#a8b0bc" fill-opacity="0.21"/><rect x="16" y="45" width="1" height="1" fill="#a8b0bc" fill-opacity="0.40"/><rect x="247" y="154" width="1" height="1" fill="#d0d8e4" fill-opacity="0.60"/><rect x="269" y="87" width="1" height="1" fill="#d0d8e4" fill-opacity="0.62"/><rect x="206" y="17" width="1" height="1" fill="#d0d8e4" fill-opacity="0.58"/><rect x="165" y="16" width="1" height="1" fill="#a8b0bc" fill-opacity="0.20"/><rect x="153" y="234" width="1" height="1" fill="#a8b0bc" fill-opacity="0.41"/><rect x="113" y="54" width="1" height="1" fill="#a8b0bc" fill-opacity="0.27"/><rect x="59" y="82" width="1" height="1" fill="#d0d8e4" fill-opacity="0.38"/><rect x="65" y="54" width="1" height="1" fill="#a8b0bc" fill-opacity="0.37"/><rect x="118" y="60" width="1" height="1" fill="#a8b0bc" fill-opacity="0.43"/><rect x="166" y="24" width="1" height="1" fill="#a8b0bc" fill-opacity="0.41"/><rect x="56" y="369" width="1" height="1" fill="#a8b0bc" fill-opacity="0.31"/><rect x="121" y="377" width="1" height="1" fill="#a8b0bc" fill-opacity="0.38"/><rect x="199" y="111" width="1" height="1" fill="#a8b0bc" fill-opacity="0.32"/><rect x="91" y="77" width="1" height="1" fill="#a8b0bc" fill-opacity="0.45"/><circle cx="255.7" cy="62.9" r="0.9" fill="#e4eaf2" fill-opacity="0.65"/><rect x="210" y="183" width="1" height="1" fill="#a8b0bc" fill-opacity="0.31"/><rect x="9" y="204" width="1" height="1" fill="#a8b0bc" fill-opacity="0.43"/><rect x="174" y="110" width="1" height="1" fill="#d0d8e4" fill-opacity="0.52"/><rect x="175" y="288" width="1" height="1" fill="#d0d8e4" fill-opacity="0.41"/><rect x="240" y="290" width="1" height="1" fill="#d0d8e4" fill-opacity="0.57"/><rect x="65" y="384" width="1" height="1" fill="#d0d8e4" fill-opacity="0.62"/><rect x="78" y="120" width="1" height="1" fill="#d0d8e4" fill-opacity="0.65"/><rect x="193" y="58" width="1" height="1" fill="#a8b0bc" fill-opacity="0.34"/><rect x="2" y="132" width="1" height="1" fill="#a8b0bc" fill-opacity="0.43"/><rect x="190" y="349" width="1" height="1" fill="#a8b0bc" fill-opacity="0.42"/><rect x="60" y="98" width="1" height="1" fill="#a8b0bc" fill-opacity="0.26"/><rect x="3" y="274" width="1" height="1" fill="#a8b0bc" fill-opacity="0.36"/><rect x="29" y="198" width="1" height="1" fill="#d0d8e4" fill-opacity="0.48"/><rect x="56" y="349" width="1" height="1" fill="#d0d8e4" fill-opacity="0.49"/><rect x="204" y="96" width="1" height="1" fill="#a8b0bc" fill-opacity="0.26"/><rect x="165" y="307" width="1" height="1" fill="#a8b0bc" fill-opacity="0.24"/><rect x="82" y="102" width="1" height="1" fill="#a8b0bc" fill-opacity="0.39"/><rect x="101" y="291" width="1" height="1" fill="#a8b0bc" fill-opacity="0.43"/><rect x="163" y="380" width="1" height="1" fill="#a8b0bc" fill-opacity="0.34"/><rect x="55" y="80" width="1" height="1" fill="#a8b0bc" fill-opacity="0.41"/><rect x="249" y="179" width="1" height="1" fill="#a8b0bc" fill-opacity="0.28"/><circle cx="156.2" cy="179.6" r="0.9" fill="#e4eaf2" fill-opacity="0.76"/><rect x="99" y="221" width="1" height="1" fill="#a8b0bc" fill-opacity="0.44"/><rect x="51" y="314" width="1" height="1" fill="#a8b0bc" fill-opacity="0.30"/><rect x="11" y="98" width="1" height="1" fill="#a8b0bc" fill-opacity="0.27"/><rect x="175" y="48" width="1" height="1" fill="#a8b0bc" fill-opacity="0.34"/><rect x="147" y="229" width="1" height="1" fill="#a8b0bc" fill-opacity="0.27"/><rect x="212" y="387" width="1" height="1" fill="#a8b0bc" fill-opacity="0.22"/><rect x="243" y="390" width="1" height="1" fill="#a8b0bc" fill-opacity="0.44"/><rect x="164" y="353" width="1" height="1" fill="#a8b0bc" fill-opacity="0.21"/><rect x="232" y="183" width="1" height="1" fill="#a8b0bc" fill-opacity="0.39"/><rect x="0" y="76" width="1" height="1" fill="#d0d8e4" fill-opacity="0.57"/><rect x="142" y="238" width="1" height="1" fill="#a8b0bc" fill-opacity="0.26"/><rect x="97" y="243" width="1" height="1" fill="#a8b0bc" fill-opacity="0.40"/><rect x="253" y="245" width="1" height="1" fill="#a8b0bc" fill-opacity="0.27"/><rect x="162" y="174" width="1" height="1" fill="#a8b0bc" fill-opacity="0.20"/><rect x="108" y="147" width="1" height="1" fill="#a8b0bc" fill-opacity="0.45"/><rect x="214" y="377" width="1" height="1" fill="#a8b0bc" fill-opacity="0.37"/><rect x="198" y="97" width="1" height="1" fill="#a8b0bc" fill-opacity="0.38"/><rect x="164" y="213" width="1" height="1" fill="#a8b0bc" fill-opacity="0.27"/><rect x="89" y="196" width="1" height="1" fill="#a8b0bc" fill-opacity="0.25"/><rect x="16" y="388" width="1" height="1" fill="#a8b0bc" fill-opacity="0.42"/><rect x="247" y="64" width="1" height="1" fill="#a8b0bc" fill-opacity="0.26"/><rect x="1" y="87" width="1" height="1" fill="#a8b0bc" fill-opacity="0.38"/><rect x="48" y="206" width="1" height="1" fill="#a8b0bc" fill-opacity="0.38"/><rect x="189" y="296" width="1" height="1" fill="#a8b0bc" fill-opacity="0.23"/><rect x="200" y="175" width="1" height="1" fill="#d0d8e4" fill-opacity="0.57"/><rect x="213" y="279" width="1" height="1" fill="#a8b0bc" fill-opacity="0.43"/><rect x="185" y="189" width="1" height="1" fill="#d0d8e4" fill-opacity="0.45"/><circle cx="95.2" cy="232.3" r="0.9" fill="#e4eaf2" fill-opacity="0.61"/><rect x="80" y="40" width="1" height="1" fill="#a8b0bc" fill-opacity="0.32"/><rect x="132" y="140" width="1" height="1" fill="#a8b0bc" fill-opacity="0.35"/><rect x="44" y="187" width="1" height="1" fill="#a8b0bc" fill-opacity="0.33"/><rect x="137" y="161" width="1" height="1" fill="#a8b0bc" fill-opacity="0.40"/><circle cx="64.9" cy="206.1" r="0.9" fill="#e4eaf2" fill-opacity="0.66"/><rect x="116" y="267" width="1" height="1" fill="#a8b0bc" fill-opacity="0.40"/><rect x="245" y="92" width="1" height="1" fill="#a8b0bc" fill-opacity="0.32"/><rect x="126" y="249" width="1" height="1" fill="#a8b0bc" fill-opacity="0.27"/><rect x="68" y="170" width="1" height="1" fill="#a8b0bc" fill-opacity="0.27"/><rect x="261" y="242" width="1" height="1" fill="#a8b0bc" fill-opacity="0.22"/><rect x="175" y="235" width="1" height="1" fill="#a8b0bc" fill-opacity="0.21"/><rect x="167" y="312" width="1" height="1" fill="#a8b0bc" fill-opacity="0.37"/><rect x="98" y="149" width="1" height="1" fill="#a8b0bc" fill-opacity="0.39"/><rect x="205" y="211" width="1" height="1" fill="#a8b0bc" fill-opacity="0.27"/><rect x="269" y="15" width="1" height="1" fill="#a8b0bc" fill-opacity="0.28"/><rect x="221" y="378" width="1" height="1" fill="#a8b0bc" fill-opacity="0.38"/><rect x="57" y="387" width="1" height="1" fill="#a8b0bc" fill-opacity="0.42"/><rect x="8" y="130" width="1" height="1" fill="#a8b0bc" fill-opacity="0.24"/><rect x="3" y="128" width="1" height="1" fill="#a8b0bc" fill-opacity="0.42"/><rect x="52" y="232" width="1" height="1" fill="#d0d8e4" fill-opacity="0.58"/><rect x="176" y="192" width="1" height="1" fill="#a8b0bc" fill-opacity="0.27"/><rect x="156" y="118" width="1" height="1" fill="#d0d8e4" fill-opacity="0.42"/><rect x="172" y="82" width="1" height="1" fill="#a8b0bc" fill-opacity="0.42"/><rect x="246" y="164" width="1" height="1" fill="#d0d8e4" fill-opacity="0.39"/><rect x="108" y="112" width="1" height="1" fill="#a8b0bc" fill-opacity="0.21"/><rect x="99" y="233" width="1" height="1" fill="#d0d8e4" fill-opacity="0.48"/><rect x="255" y="264" width="1" height="1" fill="#d0d8e4" fill-opacity="0.60"/><rect x="98" y="299" width="1" height="1" fill="#a8b0bc" fill-opacity="0.27"/><rect x="185" y="276" width="1" height="1" fill="#a8b0bc" fill-opacity="0.38"/><rect x="263" y="13" width="1" height="1" fill="#d0d8e4" fill-opacity="0.48"/><rect x="257" y="154" width="1" height="1" fill="#a8b0bc" fill-opacity="0.36"/><rect x="83" y="91" width="1" height="1" fill="#a8b0bc" fill-opacity="0.28"/><rect x="7" y="114" width="1" height="1" fill="#d0d8e4" fill-opacity="0.57"/><rect x="37" y="199" width="1" height="1" fill="#a8b0bc" fill-opacity="0.24"/><rect x="227" y="381" width="1" height="1" fill="#a8b0bc" fill-opacity="0.40"/><rect x="112" y="97" width="1" height="1" fill="#a8b0bc" fill-opacity="0.42"/><circle cx="202.9" cy="58.9" r="0.9" fill="#e4eaf2" fill-opacity="0.82"/><rect x="190" y="84" width="1" height="1" fill="#a8b0bc" fill-opacity="0.23"/><circle cx="216.2" cy="215.0" r="0.9" fill="#e4eaf2" fill-opacity="0.60"/><rect x="100" y="110" width="1" height="1" fill="#d0d8e4" fill-opacity="0.58"/><rect x="201" y="194" width="1" height="1" fill="#a8b0bc" fill-opacity="0.30"/><rect x="32" y="279" width="1" height="1" fill="#a8b0bc" fill-opacity="0.33"/><rect x="240" y="52" width="1" height="1" fill="#a8b0bc" fill-opacity="0.23"/><rect x="70" y="255" width="1" height="1" fill="#a8b0bc" fill-opacity="0.42"/><rect x="62" y="140" width="1" height="1" fill="#a8b0bc" fill-opacity="0.27"/><rect x="186" y="131" width="1" height="1" fill="#a8b0bc" fill-opacity="0.40"/><rect x="21" y="256" width="1" height="1" fill="#a8b0bc" fill-opacity="0.30"/><rect x="122" y="67" width="1" height="1" fill="#a8b0bc" fill-opacity="0.38"/><rect x="89" y="97" width="1" height="1" fill="#a8b0bc" fill-opacity="0.36"/><rect x="193" y="237" width="1" height="1" fill="#a8b0bc" fill-opacity="0.31"/><rect x="115" y="69" width="1" height="1" fill="#d0d8e4" fill-opacity="0.47"/><rect x="233" y="193" width="1" height="1" fill="#a8b0bc" fill-opacity="0.42"/><rect x="16" y="136" width="1" height="1" fill="#a8b0bc" fill-opacity="0.23"/><rect x="176" y="118" width="1" height="1" fill="#d0d8e4" fill-opacity="0.62"/><rect x="11" y="77" width="1" height="1" fill="#a8b0bc" fill-opacity="0.38"/><circle cx="63.5" cy="131.7" r="0.9" fill="#e4eaf2" fill-opacity="0.83"/><circle cx="100.5" cy="274.7" r="0.9" fill="#e4eaf2" fill-opacity="0.75"/><rect x="116" y="365" width="1" height="1" fill="#a8b0bc" fill-opacity="0.37"/><rect x="249" y="21" width="1" height="1" fill="#a8b0bc" fill-opacity="0.22"/><rect x="77" y="380" width="1" height="1" fill="#d0d8e4" fill-opacity="0.46"/><rect x="166" y="172" width="1" height="1" fill="#a8b0bc" fill-opacity="0.29"/><rect x="255" y="292" width="1" height="1" fill="#a8b0bc" fill-opacity="0.35"/><rect x="259" y="151" width="1" height="1" fill="#a8b0bc" fill-opacity="0.21"/><rect x="149" y="145" width="1" height="1" fill="#a8b0bc" fill-opacity="0.37"/><rect x="120" y="238" width="1" height="1" fill="#a8b0bc" fill-opacity="0.34"/><rect x="143" y="82" width="1" height="1" fill="#a8b0bc" fill-opacity="0.37"/><rect x="259" y="41" width="1" height="1" fill="#a8b0bc" fill-opacity="0.31"/><rect x="260" y="344" width="1" height="1" fill="#a8b0bc" fill-opacity="0.35"/><rect x="20" y="315" width="1" height="1" fill="#a8b0bc" fill-opacity="0.44"/><rect x="98" y="121" width="1" height="1" fill="#a8b0bc" fill-opacity="0.23"/><rect x="99" y="83" width="1" height="1" fill="#a8b0bc" fill-opacity="0.32"/><rect x="230" y="296" width="1" height="1" fill="#a8b0bc" fill-opacity="0.23"/><rect x="126" y="100" width="1" height="1" fill="#a8b0bc" fill-opacity="0.42"/><rect x="54" y="208" width="1" height="1" fill="#a8b0bc" fill-opacity="0.31"/><rect x="19" y="358" width="1" height="1" fill="#d0d8e4" fill-opacity="0.42"/><rect x="239" y="178" width="1" height="1" fill="#d0d8e4" fill-opacity="0.44"/><rect x="16" y="386" width="1" height="1" fill="#a8b0bc" fill-opacity="0.21"/><rect x="61" y="130" width="1" height="1" fill="#d0d8e4" fill-opacity="0.64"/><rect x="76" y="48" width="1" height="1" fill="#a8b0bc" fill-opacity="0.45"/><rect x="131" y="51" width="1" height="1" fill="#a8b0bc" fill-opacity="0.33"/><rect x="173" y="209" width="1" height="1" fill="#d0d8e4" fill-opacity="0.48"/><rect x="232" y="268" width="1" height="1" fill="#a8b0bc" fill-opacity="0.22"/><rect x="88" y="109" width="1" height="1" fill="#d0d8e4" fill-opacity="0.61"/><rect x="194" y="266" width="1" height="1" fill="#a8b0bc" fill-opacity="0.20"/><rect x="22" y="175" width="1" height="1" fill="#a8b0bc" fill-opacity="0.45"/><rect x="27" y="243" width="1" height="1" fill="#a8b0bc" fill-opacity="0.25"/><rect x="224" y="321" width="1" height="1" fill="#a8b0bc" fill-opacity="0.32"/><rect x="32" y="235" width="1" height="1" fill="#d0d8e4" fill-opacity="0.62"/><rect x="227" y="315" width="1" height="1" fill="#a8b0bc" fill-opacity="0.43"/><rect x="24" y="93" width="1" height="1" fill="#a8b0bc" fill-opacity="0.38"/><rect x="177" y="240" width="1" height="1" fill="#d0d8e4" fill-opacity="0.47"/><rect x="12" y="111" width="1" height="1" fill="#a8b0bc" fill-opacity="0.38"/><rect x="112" y="215" width="1" height="1" fill="#d0d8e4" fill-opacity="0.53"/><rect x="132" y="158" width="1" height="1" fill="#a8b0bc" fill-opacity="0.29"/><rect x="269" y="199" width="1" height="1" fill="#a8b0bc" fill-opacity="0.36"/><rect x="63" y="174" width="1" height="1" fill="#a8b0bc" fill-opacity="0.33"/><rect x="140" y="311" width="1" height="1" fill="#d0d8e4" fill-opacity="0.46"/><rect x="273" y="221" width="1" height="1" fill="#a8b0bc" fill-opacity="0.24"/><rect x="4" y="139" width="1" height="1" fill="#a8b0bc" fill-opacity="0.27"/><rect x="36" y="186" width="1" height="1" fill="#a8b0bc" fill-opacity="0.25"/><rect x="138" y="282" width="1" height="1" fill="#a8b0bc" fill-opacity="0.37"/><rect x="88" y="54" width="1" height="1" fill="#d0d8e4" fill-opacity="0.54"/><rect x="181" y="291" width="1" height="1" fill="#a8b0bc" fill-opacity="0.22"/><rect x="41" y="212" width="1" height="1" fill="#a8b0bc" fill-opacity="0.21"/><rect x="202" y="358" width="1" height="1" fill="#a8b0bc" fill-opacity="0.42"/><rect x="135" y="294" width="1" height="1" fill="#a8b0bc" fill-opacity="0.33"/><rect x="206" y="309" width="1" height="1" fill="#d0d8e4" fill-opacity="0.47"/><circle cx="13.3" cy="291.1" r="0.9" fill="#e4eaf2" fill-opacity="0.83"/><rect x="238" y="9" width="1" height="1" fill="#a8b0bc" fill-opacity="0.43"/><rect x="83" y="242" width="1" height="1" fill="#a8b0bc" fill-opacity="0.30"/><rect x="254" y="37" width="1" height="1" fill="#a8b0bc" fill-opacity="0.39"/><rect x="211" y="188" width="1" height="1" fill="#d0d8e4" fill-opacity="0.41"/><rect x="69" y="16" width="1" height="1" fill="#d0d8e4" fill-opacity="0.44"/><rect x="168" y="189" width="1" height="1" fill="#a8b0bc" fill-opacity="0.27"/><rect x="34" y="314" width="1" height="1" fill="#a8b0bc" fill-opacity="0.29"/><rect x="149" y="19" width="1" height="1" fill="#d0d8e4" fill-opacity="0.45"/><rect x="90" y="104" width="1" height="1" fill="#a8b0bc" fill-opacity="0.38"/><rect x="184" y="314" width="1" height="1" fill="#a8b0bc" fill-opacity="0.42"/><rect x="112" y="210" width="1" height="1" fill="#d0d8e4" fill-opacity="0.44"/><rect x="130" y="138" width="1" height="1" fill="#a8b0bc" fill-opacity="0.44"/><rect x="234" y="306" width="1" height="1" fill="#a8b0bc" fill-opacity="0.43"/><rect x="35" y="355" width="1" height="1" fill="#a8b0bc" fill-opacity="0.20"/><rect x="209" y="10" width="1" height="1" fill="#d0d8e4" fill-opacity="0.39"/><rect x="229" y="18" width="1" height="1" fill="#a8b0bc" fill-opacity="0.37"/><rect x="168" y="282" width="1" height="1" fill="#a8b0bc" fill-opacity="0.34"/><rect x="235" y="317" width="1" height="1" fill="#d0d8e4" fill-opacity="0.56"/><rect x="225" y="199" width="1" height="1" fill="#a8b0bc" fill-opacity="0.35"/><rect x="226" y="73" width="1" height="1" fill="#a8b0bc" fill-opacity="0.41"/><rect x="65" y="47" width="1" height="1" fill="#d0d8e4" fill-opacity="0.64"/><rect x="36" y="16" width="1" height="1" fill="#a8b0bc" fill-opacity="0.34"/><rect x="180" y="240" width="1" height="1" fill="#a8b0bc" fill-opacity="0.23"/><circle cx="99.4" cy="185.3" r="0.9" fill="#e4eaf2" fill-opacity="0.70"/><rect x="179" y="257" width="1" height="1" fill="#a8b0bc" fill-opacity="0.37"/><rect x="30" y="88" width="1" height="1" fill="#a8b0bc" fill-opacity="0.31"/><rect x="83" y="349" width="1" height="1" fill="#a8b0bc" fill-opacity="0.21"/><rect x="205" y="25" width="1" height="1" fill="#a8b0bc" fill-opacity="0.27"/><rect x="108" y="196" width="1" height="1" fill="#a8b0bc" fill-opacity="0.39"/><rect x="255" y="101" width="1" height="1" fill="#a8b0bc" fill-opacity="0.30"/><rect x="51" y="219" width="1" height="1" fill="#d0d8e4" fill-opacity="0.42"/><rect x="44" y="33" width="1" height="1" fill="#a8b0bc" fill-opacity="0.45"/><circle cx="176.2" cy="45.4" r="0.9" fill="#e4eaf2" fill-opacity="0.61"/><circle cx="123.7" cy="233.2" r="0.9" fill="#e4eaf2" fill-opacity="0.81"/><rect x="95" y="375" width="1" height="1" fill="#a8b0bc" fill-opacity="0.40"/><rect x="85" y="246" width="1" height="1" fill="#d0d8e4" fill-opacity="0.65"/><rect x="234" y="235" width="1" height="1" fill="#a8b0bc" fill-opacity="0.38"/><circle cx="34.4" cy="364.8" r="0.9" fill="#e4eaf2" fill-opacity="0.81"/><rect x="29" y="235" width="1" height="1" fill="#a8b0bc" fill-opacity="0.40"/><rect x="238" y="50" width="1" height="1" fill="#a8b0bc" fill-opacity="0.20"/><rect x="271" y="189" width="1" height="1" fill="#a8b0bc" fill-opacity="0.42"/><rect x="52" y="128" width="1" height="1" fill="#a8b0bc" fill-opacity="0.29"/><rect x="205" y="159" width="1" height="1" fill="#a8b0bc" fill-opacity="0.34"/><rect x="105" y="381" width="1" height="1" fill="#d0d8e4" fill-opacity="0.43"/><rect x="153" y="236" width="1" height="1" fill="#a8b0bc" fill-opacity="0.24"/><rect x="116" y="230" width="1" height="1" fill="#d0d8e4" fill-opacity="0.51"/><rect x="137" y="181" width="1" height="1" fill="#a8b0bc" fill-opacity="0.28"/><rect x="212" y="252" width="1" height="1" fill="#a8b0bc" fill-opacity="0.42"/><rect x="242" y="333" width="1" height="1" fill="#d0d8e4" fill-opacity="0.45"/><rect x="73" y="146" width="1" height="1" fill="#a8b0bc" fill-opacity="0.21"/><rect x="54" y="269" width="1" height="1" fill="#d0d8e4" fill-opacity="0.37"/><rect x="48" y="95" width="1" height="1" fill="#d0d8e4" fill-opacity="0.49"/><rect x="81" y="240" width="1" height="1" fill="#d0d8e4" fill-opacity="0.52"/><rect x="164" y="312" width="1" height="1" fill="#a8b0bc" fill-opacity="0.36"/><rect x="117" y="339" width="1" height="1" fill="#d0d8e4" fill-opacity="0.52"/><rect x="169" y="345" width="1" height="1" fill="#a8b0bc" fill-opacity="0.29"/><rect x="93" y="230" width="1" height="1" fill="#d0d8e4" fill-opacity="0.53"/><rect x="155" y="304" width="1" height="1" fill="#a8b0bc" fill-opacity="0.37"/><rect x="212" y="183" width="1" height="1" fill="#d0d8e4" fill-opacity="0.36"/><rect x="170" y="284" width="1" height="1" fill="#a8b0bc" fill-opacity="0.23"/><rect x="143" y="248" width="1" height="1" fill="#d0d8e4" fill-opacity="0.63"/><rect x="31" y="84" width="1" height="1" fill="#a8b0bc" fill-opacity="0.21"/><rect x="121" y="20" width="1" height="1" fill="#a8b0bc" fill-opacity="0.36"/><rect x="29" y="57" width="1" height="1" fill="#a8b0bc" fill-opacity="0.28"/><rect x="135" y="230" width="1" height="1" fill="#a8b0bc" fill-opacity="0.21"/><rect x="17" y="334" width="1" height="1" fill="#a8b0bc" fill-opacity="0.44"/><rect x="118" y="66" width="1" height="1" fill="#a8b0bc" fill-opacity="0.22"/><rect x="68" y="231" width="1" height="1" fill="#a8b0bc" fill-opacity="0.22"/><circle cx="180.2" cy="98.4" r="0.9" fill="#e4eaf2" fill-opacity="0.61"/><rect x="46" y="111" width="1" height="1" fill="#d0d8e4" fill-opacity="0.61"/><rect x="223" y="88" width="1" height="1" fill="#a8b0bc" fill-opacity="0.33"/><rect x="145" y="365" width="1" height="1" fill="#d0d8e4" fill-opacity="0.50"/><circle cx="39.3" cy="389.7" r="0.9" fill="#e4eaf2" fill-opacity="0.80"/><rect x="207" y="293" width="1" height="1" fill="#d0d8e4" fill-opacity="0.58"/><rect x="160" y="212" width="1" height="1" fill="#a8b0bc" fill-opacity="0.21"/><rect x="170" y="39" width="1" height="1" fill="#d0d8e4" fill-opacity="0.38"/><rect x="77" y="292" width="1" height="1" fill="#a8b0bc" fill-opacity="0.25"/><circle cx="135.4" cy="366.9" r="0.9" fill="#e4eaf2" fill-opacity="0.58"/><rect x="5" y="67" width="1" height="1" fill="#d0d8e4" fill-opacity="0.54"/><rect x="231" y="198" width="1" height="1" fill="#a8b0bc" fill-opacity="0.41"/><rect x="102" y="321" width="1" height="1" fill="#a8b0bc" fill-opacity="0.23"/><rect x="8" y="189" width="1" height="1" fill="#a8b0bc" fill-opacity="0.45"/><rect x="14" y="188" width="1" height="1" fill="#d0d8e4" fill-opacity="0.44"/><rect x="188" y="150" width="1" height="1" fill="#a8b0bc" fill-opacity="0.22"/><rect x="162" y="263" width="1" height="1" fill="#a8b0bc" fill-opacity="0.28"/><rect x="28" y="69" width="1" height="1" fill="#d0d8e4" fill-opacity="0.46"/><rect x="167" y="67" width="1" height="1" fill="#a8b0bc" fill-opacity="0.22"/><rect x="273" y="103" width="1" height="1" fill="#a8b0bc" fill-opacity="0.24"/><rect x="121" y="380" width="1" height="1" fill="#a8b0bc" fill-opacity="0.20"/><rect x="113" y="238" width="1" height="1" fill="#a8b0bc" fill-opacity="0.21"/><rect x="188" y="170" width="1" height="1" fill="#d0d8e4" fill-opacity="0.64"/><rect x="169" y="298" width="1" height="1" fill="#d0d8e4" fill-opacity="0.37"/><rect x="166" y="301" width="1" height="1" fill="#d0d8e4" fill-opacity="0.53"/><rect x="205" y="314" width="1" height="1" fill="#d0d8e4" fill-opacity="0.42"/><rect x="272" y="345" width="1" height="1" fill="#a8b0bc" fill-opacity="0.27"/><rect x="24" y="206" width="1" height="1" fill="#a8b0bc" fill-opacity="0.31"/><rect x="98" y="227" width="1" height="1" fill="#a8b0bc" fill-opacity="0.23"/><rect x="0" y="353" width="1" height="1" fill="#a8b0bc" fill-opacity="0.36"/><rect x="20" y="27" width="1" height="1" fill="#a8b0bc" fill-opacity="0.36"/><rect x="256" y="104" width="1" height="1" fill="#d0d8e4" fill-opacity="0.64"/><rect x="103" y="224" width="1" height="1" fill="#a8b0bc" fill-opacity="0.37"/><rect x="220" y="325" width="1" height="1" fill="#a8b0bc" fill-opacity="0.28"/><rect x="39" y="167" width="1" height="1" fill="#a8b0bc" fill-opacity="0.21"/><rect x="90" y="336" width="1" height="1" fill="#a8b0bc" fill-opacity="0.43"/><rect x="32" y="199" width="1" height="1" fill="#a8b0bc" fill-opacity="0.36"/><circle cx="267.2" cy="248.5" r="0.9" fill="#e4eaf2" fill-opacity="0.78"/><rect x="57" y="325" width="1" height="1" fill="#a8b0bc" fill-opacity="0.37"/><rect x="252" y="51" width="1" height="1" fill="#d0d8e4" fill-opacity="0.61"/><rect x="1" y="227" width="1" height="1" fill="#a8b0bc" fill-opacity="0.31"/><rect x="90" y="37" width="1" height="1" fill="#a8b0bc" fill-opacity="0.42"/><rect x="217" y="7" width="1" height="1" fill="#a8b0bc" fill-opacity="0.29"/><rect x="246" y="317" width="1" height="1" fill="#a8b0bc" fill-opacity="0.27"/><rect x="8" y="168" width="1" height="1" fill="#a8b0bc" fill-opacity="0.39"/><rect x="141" y="198" width="1" height="1" fill="#a8b0bc" fill-opacity="0.23"/><rect x="53" y="64" width="1" height="1" fill="#a8b0bc" fill-opacity="0.28"/><rect x="150" y="200" width="1" height="1" fill="#a8b0bc" fill-opacity="0.33"/><rect x="16" y="160" width="1" height="1" fill="#a8b0bc" fill-opacity="0.21"/><circle cx="183.5" cy="358.2" r="0.9" fill="#e4eaf2" fill-opacity="0.84"/><rect x="87" y="120" width="1" height="1" fill="#a8b0bc" fill-opacity="0.22"/><rect x="184" y="189" width="1" height="1" fill="#a8b0bc" fill-opacity="0.38"/><rect x="233" y="248" width="1" height="1" fill="#a8b0bc" fill-opacity="0.28"/><circle cx="12.9" cy="99.8" r="0.9" fill="#e4eaf2" fill-opacity="0.81"/><rect x="46" y="336" width="1" height="1" fill="#a8b0bc" fill-opacity="0.25"/><rect x="103" y="69" width="1" height="1" fill="#d0d8e4" fill-opacity="0.59"/><rect x="213" y="239" width="1" height="1" fill="#a8b0bc" fill-opacity="0.43"/><circle cx="222.4" cy="261.9" r="0.9" fill="#e4eaf2" fill-opacity="0.55"/><rect x="120" y="201" width="1" height="1" fill="#d0d8e4" fill-opacity="0.39"/><rect x="125" y="209" width="1" height="1" fill="#a8b0bc" fill-opacity="0.40"/><rect x="129" y="376" width="1" height="1" fill="#a8b0bc" fill-opacity="0.42"/><rect x="160" y="303" width="1" height="1" fill="#d0d8e4" fill-opacity="0.60"/><rect x="239" y="162" width="1" height="1" fill="#a8b0bc" fill-opacity="0.31"/><rect x="134" y="212" width="1" height="1" fill="#a8b0bc" fill-opacity="0.43"/><rect x="12" y="52" width="1" height="1" fill="#a8b0bc" fill-opacity="0.29"/><rect x="97" y="6" width="1" height="1" fill="#a8b0bc" fill-opacity="0.25"/><rect x="152" y="117" width="1" height="1" fill="#d0d8e4" fill-opacity="0.35"/><rect x="195" y="142" width="1" height="1" fill="#d0d8e4" fill-opacity="0.42"/><rect x="257" y="78" width="1" height="1" fill="#a8b0bc" fill-opacity="0.42"/><rect x="188" y="301" width="1" height="1" fill="#a8b0bc" fill-opacity="0.43"/><rect x="250" y="321" width="1" height="1" fill="#d0d8e4" fill-opacity="0.63"/><rect x="42" y="325" width="1" height="1" fill="#a8b0bc" fill-opacity="0.37"/><rect x="75" y="154" width="1" height="1" fill="#a8b0bc" fill-opacity="0.23"/><rect x="146" y="342" width="1" height="1" fill="#a8b0bc" fill-opacity="0.25"/><rect x="223" y="102" width="1" height="1" fill="#a8b0bc" fill-opacity="0.21"/><rect x="193" y="375" width="1" height="1" fill="#a8b0bc" fill-opacity="0.34"/><circle cx="195.5" cy="294.1" r="0.9" fill="#e4eaf2" fill-opacity="0.74"/><rect x="42" y="391" width="1" height="1" fill="#a8b0bc" fill-opacity="0.30"/><rect x="248" y="349" width="1" height="1" fill="#a8b0bc" fill-opacity="0.30"/><rect x="43" y="371" width="1" height="1" fill="#d0d8e4" fill-opacity="0.55"/><rect x="60" y="292" width="1" height="1" fill="#d0d8e4" fill-opacity="0.61"/><rect x="127" y="34" width="1" height="1" fill="#a8b0bc" fill-opacity="0.21"/><rect x="118" y="163" width="1" height="1" fill="#d0d8e4" fill-opacity="0.57"/><rect x="34" y="213" width="1" height="1" fill="#a8b0bc" fill-opacity="0.26"/><rect x="161" y="20" width="1" height="1" fill="#d0d8e4" fill-opacity="0.53"/><rect x="253" y="355" width="1" height="1" fill="#a8b0bc" fill-opacity="0.21"/><rect x="182" y="267" width="1" height="1" fill="#d0d8e4" fill-opacity="0.45"/><rect x="112" y="315" width="1" height="1" fill="#a8b0bc" fill-opacity="0.27"/><rect x="32" y="278" width="1" height="1" fill="#a8b0bc" fill-opacity="0.43"/><rect x="232" y="173" width="1" height="1" fill="#a8b0bc" fill-opacity="0.21"/><rect x="148" y="281" width="1" height="1" fill="#a8b0bc" fill-opacity="0.31"/><rect x="103" y="185" width="1" height="1" fill="#a8b0bc" fill-opacity="0.31"/><rect x="192" y="88" width="1" height="1" fill="#d0d8e4" fill-opacity="0.49"/><rect x="162" y="241" width="1" height="1" fill="#d0d8e4" fill-opacity="0.64"/><rect x="4" y="277" width="1" height="1" fill="#a8b0bc" fill-opacity="0.36"/><rect x="65" y="173" width="1" height="1" fill="#a8b0bc" fill-opacity="0.30"/><rect x="253" y="118" width="1" height="1" fill="#a8b0bc" fill-opacity="0.21"/><rect x="92" y="98" width="1" height="1" fill="#a8b0bc" fill-opacity="0.24"/><rect x="81" y="132" width="1" height="1" fill="#a8b0bc" fill-opacity="0.32"/><rect x="176" y="251" width="1" height="1" fill="#a8b0bc" fill-opacity="0.31"/><rect x="142" y="255" width="1" height="1" fill="#a8b0bc" fill-opacity="0.45"/><rect x="223" y="330" width="1" height="1" fill="#a8b0bc" fill-opacity="0.25"/><rect x="171" y="340" width="1" height="1" fill="#a8b0bc" fill-opacity="0.40"/><circle cx="166.0" cy="1.5" r="0.9" fill="#e4eaf2" fill-opacity="0.82"/><rect x="105" y="318" width="1" height="1" fill="#a8b0bc" fill-opacity="0.36"/><rect x="177" y="153" width="1" height="1" fill="#d0d8e4" fill-opacity="0.39"/><rect x="50" y="223" width="1" height="1" fill="#d0d8e4" fill-opacity="0.36"/><rect x="187" y="87" width="1" height="1" fill="#a8b0bc" fill-opacity="0.33"/><rect x="203" y="158" width="1" height="1" fill="#d0d8e4" fill-opacity="0.44"/><rect x="262" y="138" width="1" height="1" fill="#a8b0bc" fill-opacity="0.28"/><rect x="260" y="271" width="1" height="1" fill="#a8b0bc" fill-opacity="0.23"/><rect x="190" y="281" width="1" height="1" fill="#a8b0bc" fill-opacity="0.29"/><circle cx="224.9" cy="240.8" r="0.9" fill="#e4eaf2" fill-opacity="0.73"/><rect x="48" y="200" width="1" height="1" fill="#d0d8e4" fill-opacity="0.65"/><rect x="86" y="57" width="1" height="1" fill="#d0d8e4" fill-opacity="0.56"/><circle cx="35.8" cy="185.9" r="0.9" fill="#e4eaf2" fill-opacity="0.68"/><circle cx="149.4" cy="37.7" r="0.9" fill="#e4eaf2" fill-opacity="0.66"/><rect x="150" y="117" width="1" height="1" fill="#d0d8e4" fill-opacity="0.48"/><rect x="179" y="317" width="1" height="1" fill="#d0d8e4" fill-opacity="0.50"/><rect x="231" y="275" width="1" height="1" fill="#a8b0bc" fill-opacity="0.32"/><rect x="153" y="220" width="1" height="1" fill="#a8b0bc" fill-opacity="0.30"/><rect x="229" y="340" width="1" height="1" fill="#a8b0bc" fill-opacity="0.39"/><rect x="46" y="143" width="1" height="1" fill="#d0d8e4" fill-opacity="0.36"/><rect x="269" y="85" width="1" height="1" fill="#d0d8e4" fill-opacity="0.52"/><rect x="148" y="365" width="1" height="1" fill="#a8b0bc" fill-opacity="0.44"/><rect x="204" y="193" width="1" height="1" fill="#a8b0bc" fill-opacity="0.40"/><rect x="14" y="89" width="1" height="1" fill="#a8b0bc" fill-opacity="0.38"/><rect x="256" y="262" width="1" height="1" fill="#a8b0bc" fill-opacity="0.41"/><rect x="270" y="310" width="1" height="1" fill="#a8b0bc" fill-opacity="0.40"/><rect x="34" y="226" width="1" height="1" fill="#d0d8e4" fill-opacity="0.51"/><rect x="90" y="218" width="1" height="1" fill="#a8b0bc" fill-opacity="0.31"/><circle cx="79.7" cy="74.9" r="0.9" fill="#e4eaf2" fill-opacity="0.83"/><rect x="36" y="72" width="1" height="1" fill="#a8b0bc" fill-opacity="0.41"/><rect x="162" y="386" width="1" height="1" fill="#a8b0bc" fill-opacity="0.30"/><rect x="47" y="303" width="1" height="1" fill="#a8b0bc" fill-opacity="0.26"/><rect x="254" y="66" width="1" height="1" fill="#a8b0bc" fill-opacity="0.42"/><rect x="71" y="86" width="1" height="1" fill="#d0d8e4" fill-opacity="0.62"/><rect x="98" y="267" width="1" height="1" fill="#a8b0bc" fill-opacity="0.39"/><rect x="182" y="54" width="1" height="1" fill="#a8b0bc" fill-opacity="0.24"/><rect x="228" y="30" width="1" height="1" fill="#a8b0bc" fill-opacity="0.33"/><rect x="227" y="139" width="1" height="1" fill="#a8b0bc" fill-opacity="0.24"/><rect x="191" y="120" width="1" height="1" fill="#a8b0bc" fill-opacity="0.20"/><rect x="69" y="64" width="1" height="1" fill="#a8b0bc" fill-opacity="0.25"/><rect x="231" y="198" width="1" height="1" fill="#d0d8e4" fill-opacity="0.52"/><rect x="136" y="222" width="1" height="1" fill="#a8b0bc" fill-opacity="0.25"/><rect x="71" y="250" width="1" height="1" fill="#a8b0bc" fill-opacity="0.33"/><rect x="120" y="327" width="1" height="1" fill="#a8b0bc" fill-opacity="0.23"/><rect x="183" y="308" width="1" height="1" fill="#a8b0bc" fill-opacity="0.44"/><rect x="81" y="99" width="1" height="1" fill="#a8b0bc" fill-opacity="0.34"/><rect x="8" y="32" width="1" height="1" fill="#a8b0bc" fill-opacity="0.29"/><rect x="7" y="294" width="1" height="1" fill="#a8b0bc" fill-opacity="0.34"/><rect x="73" y="61" width="1" height="1" fill="#d0d8e4" fill-opacity="0.49"/><rect x="82" y="179" width="1" height="1" fill="#a8b0bc" fill-opacity="0.42"/><rect x="145" y="104" width="1" height="1" fill="#a8b0bc" fill-opacity="0.42"/><rect x="224" y="275" width="1" height="1" fill="#a8b0bc" fill-opacity="0.42"/><rect x="136" y="274" width="1" height="1" fill="#a8b0bc" fill-opacity="0.33"/><rect x="217" y="316" width="1" height="1" fill="#d0d8e4" fill-opacity="0.48"/><rect x="69" y="337" width="1" height="1" fill="#d0d8e4" fill-opacity="0.63"/><rect x="145" y="357" width="1" height="1" fill="#a8b0bc" fill-opacity="0.42"/><rect x="52" y="77" width="1" height="1" fill="#a8b0bc" fill-opacity="0.36"/><rect x="73" y="77" width="1" height="1" fill="#d0d8e4" fill-opacity="0.52"/><rect x="121" y="301" width="1" height="1" fill="#a8b0bc" fill-opacity="0.43"/><rect x="109" y="59" width="1" height="1" fill="#a8b0bc" fill-opacity="0.37"/><rect x="89" y="19" width="1" height="1" fill="#a8b0bc" fill-opacity="0.35"/><rect x="252" y="114" width="1" height="1" fill="#a8b0bc" fill-opacity="0.43"/><rect x="187" y="58" width="1" height="1" fill="#a8b0bc" fill-opacity="0.25"/><rect x="196" y="264" width="1" height="1" fill="#a8b0bc" fill-opacity="0.21"/><rect x="140" y="97" width="1" height="1" fill="#a8b0bc" fill-opacity="0.26"/><rect x="20" y="347" width="1" height="1" fill="#a8b0bc" fill-opacity="0.41"/><circle cx="173.2" cy="13.3" r="0.9" fill="#e4eaf2" fill-opacity="0.62"/><rect x="8" y="115" width="1" height="1" fill="#a8b0bc" fill-opacity="0.30"/><rect x="190" y="199" width="1" height="1" fill="#a8b0bc" fill-opacity="0.45"/><rect x="131" y="372" width="1" height="1" fill="#a8b0bc" fill-opacity="0.30"/><rect x="236" y="82" width="1" height="1" fill="#a8b0bc" fill-opacity="0.43"/><rect x="99" y="180" width="1" height="1" fill="#a8b0bc" fill-opacity="0.43"/><rect x="153" y="375" width="1" height="1" fill="#d0d8e4" fill-opacity="0.54"/><rect x="171" y="99" width="1" height="1" fill="#d0d8e4" fill-opacity="0.42"/><rect x="252" y="285" width="1" height="1" fill="#a8b0bc" fill-opacity="0.24"/><rect x="218" y="264" width="1" height="1" fill="#d0d8e4" fill-opacity="0.41"/><rect x="46" y="74" width="1" height="1" fill="#a8b0bc" fill-opacity="0.39"/><rect x="102" y="41" width="1" height="1" fill="#a8b0bc" fill-opacity="0.31"/><rect x="226" y="387" width="1" height="1" fill="#a8b0bc" fill-opacity="0.27"/><rect x="54" y="3" width="1" height="1" fill="#a8b0bc" fill-opacity="0.24"/><rect x="67" y="156" width="1" height="1" fill="#d0d8e4" fill-opacity="0.61"/><circle cx="234.4" cy="250.9" r="0.9" fill="#e4eaf2" fill-opacity="0.83"/><circle cx="75.8" cy="149.7" r="0.9" fill="#e4eaf2" fill-opacity="0.85"/><rect x="96" y="98" width="1" height="1" fill="#d0d8e4" fill-opacity="0.37"/><rect x="269" y="81" width="1" height="1" fill="#d0d8e4" fill-opacity="0.53"/><rect x="129" y="340" width="1" height="1" fill="#a8b0bc" fill-opacity="0.38"/><rect x="64" y="301" width="1" height="1" fill="#a8b0bc" fill-opacity="0.37"/><rect x="219" y="180" width="1" height="1" fill="#a8b0bc" fill-opacity="0.40"/><rect x="251" y="245" width="1" height="1" fill="#a8b0bc" fill-opacity="0.32"/><rect x="247" y="273" width="1" height="1" fill="#a8b0bc" fill-opacity="0.39"/><rect x="206" y="45" width="1" height="1" fill="#a8b0bc" fill-opacity="0.34"/><rect x="62" y="7" width="1" height="1" fill="#d0d8e4" fill-opacity="0.63"/><circle cx="265.4" cy="96.7" r="0.9" fill="#e4eaf2" fill-opacity="0.57"/><rect x="211" y="137" width="1" height="1" fill="#a8b0bc" fill-opacity="0.44"/><rect x="201" y="138" width="1" height="1" fill="#d0d8e4" fill-opacity="0.47"/><circle cx="147.3" cy="22.4" r="0.9" fill="#e4eaf2" fill-opacity="0.56"/><rect x="1" y="96" width="1" height="1" fill="#a8b0bc" fill-opacity="0.39"/><rect x="31" y="116" width="1" height="1" fill="#a8b0bc" fill-opacity="0.43"/><rect x="61" y="62" width="1" height="1" fill="#a8b0bc" fill-opacity="0.24"/><rect x="261" y="360" width="1" height="1" fill="#a8b0bc" fill-opacity="0.37"/><rect x="98" y="45" width="1" height="1" fill="#d0d8e4" fill-opacity="0.44"/><rect x="3" y="97" width="1" height="1" fill="#d0d8e4" fill-opacity="0.40"/><rect x="275" y="225" width="1" height="1" fill="#d0d8e4" fill-opacity="0.59"/><rect x="210" y="266" width="1" height="1" fill="#a8b0bc" fill-opacity="0.42"/><rect x="22" y="140" width="1" height="1" fill="#d0d8e4" fill-opacity="0.58"/><rect x="74" y="380" width="1" height="1" fill="#a8b0bc" fill-opacity="0.22"/><rect x="152" y="127" width="1" height="1" fill="#d0d8e4" fill-opacity="0.38"/><rect x="146" y="87" width="1" height="1" fill="#a8b0bc" fill-opacity="0.24"/><rect x="49" y="322" width="1" height="1" fill="#a8b0bc" fill-opacity="0.31"/><rect x="14" y="27" width="1" height="1" fill="#a8b0bc" fill-opacity="0.27"/><rect x="238" y="93" width="1" height="1" fill="#d0d8e4" fill-opacity="0.63"/><rect x="6" y="184" width="1" height="1" fill="#a8b0bc" fill-opacity="0.36"/><rect x="263" y="14" width="1" height="1" fill="#d0d8e4" fill-opacity="0.48"/><rect x="102" y="269" width="1" height="1" fill="#a8b0bc" fill-opacity="0.23"/><circle cx="8.6" cy="18.7" r="0.9" fill="#e4eaf2" fill-opacity="0.60"/><rect x="196" y="172" width="1" height="1" fill="#d0d8e4" fill-opacity="0.41"/><rect x="42" y="81" width="1" height="1" fill="#a8b0bc" fill-opacity="0.21"/><rect x="114" y="180" width="1" height="1" fill="#a8b0bc" fill-opacity="0.39"/><rect x="233" y="90" width="1" height="1" fill="#d0d8e4" fill-opacity="0.64"/><rect x="258" y="112" width="1" height="1" fill="#d0d8e4" fill-opacity="0.41"/><rect x="235" y="212" width="1" height="1" fill="#a8b0bc" fill-opacity="0.24"/><rect x="268" y="55" width="1" height="1" fill="#a8b0bc" fill-opacity="0.42"/><rect x="242" y="10" width="1" height="1" fill="#d0d8e4" fill-opacity="0.62"/><rect x="231" y="46" width="1" height="1" fill="#d0d8e4" fill-opacity="0.39"/><rect x="42" y="159" width="1" height="1" fill="#d0d8e4" fill-opacity="0.49"/><rect x="241" y="4" width="1" height="1" fill="#d0d8e4" fill-opacity="0.57"/><rect x="257" y="64" width="1" height="1" fill="#a8b0bc" fill-opacity="0.32"/><rect x="55" y="259" width="1" height="1" fill="#a8b0bc" fill-opacity="0.44"/><circle cx="69.6" cy="215.3" r="0.9" fill="#e4eaf2" fill-opacity="0.75"/><rect x="68" y="340" width="1" height="1" fill="#a8b0bc" fill-opacity="0.38"/><circle cx="87.6" cy="281.6" r="0.9" fill="#e4eaf2" fill-opacity="0.81"/><rect x="159" y="129" width="1" height="1" fill="#a8b0bc" fill-opacity="0.34"/><rect x="71" y="339" width="1" height="1" fill="#a8b0bc" fill-opacity="0.29"/><rect x="107" y="341" width="1" height="1" fill="#a8b0bc" fill-opacity="0.23"/><rect x="4" y="80" width="1" height="1" fill="#a8b0bc" fill-opacity="0.35"/><rect x="150" y="259" width="1" height="1" fill="#a8b0bc" fill-opacity="0.32"/><rect x="266" y="357" width="1" height="1" fill="#d0d8e4" fill-opacity="0.43"/><rect x="269" y="372" width="1" height="1" fill="#a8b0bc" fill-opacity="0.22"/><rect x="72" y="336" width="1" height="1" fill="#a8b0bc" fill-opacity="0.34"/><rect x="69" y="53" width="1" height="1" fill="#a8b0bc" fill-opacity="0.41"/><rect x="189" y="297" width="1" height="1" fill="#a8b0bc" fill-opacity="0.29"/><rect x="264" y="356" width="1" height="1" fill="#a8b0bc" fill-opacity="0.32"/><circle cx="231.8" cy="67.1" r="0.9" fill="#e4eaf2" fill-opacity="0.78"/><rect x="180" y="172" width="1" height="1" fill="#a8b0bc" fill-opacity="0.43"/><rect x="125" y="204" width="1" height="1" fill="#a8b0bc" fill-opacity="0.42"/><rect x="125" y="167" width="1" height="1" fill="#a8b0bc" fill-opacity="0.44"/><rect x="269" y="298" width="1" height="1" fill="#a8b0bc" fill-opacity="0.25"/><rect x="15" y="60" width="1" height="1" fill="#a8b0bc" fill-opacity="0.36"/><rect x="250" y="89" width="1" height="1" fill="#d0d8e4" fill-opacity="0.63"/><rect x="221" y="257" width="1" height="1" fill="#a8b0bc" fill-opacity="0.32"/><rect x="227" y="169" width="1" height="1" fill="#d0d8e4" fill-opacity="0.60"/><rect x="198" y="78" width="1" height="1" fill="#a8b0bc" fill-opacity="0.21"/><rect x="44" y="32" width="1" height="1" fill="#a8b0bc" fill-opacity="0.30"/><rect x="59" y="142" width="1" height="1" fill="#a8b0bc" fill-opacity="0.25"/><rect x="52" y="384" width="1" height="1" fill="#a8b0bc" fill-opacity="0.44"/><rect x="115" y="222" width="1" height="1" fill="#d0d8e4" fill-opacity="0.38"/><rect x="250" y="178" width="1" height="1" fill="#a8b0bc" fill-opacity="0.27"/><rect x="220" y="142" width="1" height="1" fill="#d0d8e4" fill-opacity="0.61"/><rect x="236" y="245" width="1" height="1" fill="#d0d8e4" fill-opacity="0.58"/><rect x="242" y="372" width="1" height="1" fill="#a8b0bc" fill-opacity="0.44"/><rect x="273" y="160" width="1" height="1" fill="#a8b0bc" fill-opacity="0.41"/><rect x="221" y="42" width="1" height="1" fill="#d0d8e4" fill-opacity="0.43"/><rect x="197" y="122" width="1" height="1" fill="#d0d8e4" fill-opacity="0.44"/><rect x="28" y="172" width="1" height="1" fill="#a8b0bc" fill-opacity="0.23"/><rect x="269" y="375" width="1" height="1" fill="#a8b0bc" fill-opacity="0.40"/><rect x="174" y="146" width="1" height="1" fill="#a8b0bc" fill-opacity="0.25"/><rect x="6" y="320" width="1" height="1" fill="#a8b0bc" fill-opacity="0.34"/><rect x="123" y="297" width="1" height="1" fill="#d0d8e4" fill-opacity="0.56"/><rect x="208" y="310" width="1" height="1" fill="#d0d8e4" fill-opacity="0.62"/><rect x="140" y="109" width="1" height="1" fill="#d0d8e4" fill-opacity="0.47"/><rect x="24" y="33" width="1" height="1" fill="#d0d8e4" fill-opacity="0.36"/><rect x="257" y="184" width="1" height="1" fill="#d0d8e4" fill-opacity="0.46"/><rect x="136" y="159" width="1" height="1" fill="#a8b0bc" fill-opacity="0.36"/><rect x="98" y="188" width="1" height="1" fill="#a8b0bc" fill-opacity="0.39"/><rect x="5" y="282" width="1" height="1" fill="#a8b0bc" fill-opacity="0.21"/><rect x="136" y="349" width="1" height="1" fill="#a8b0bc" fill-opacity="0.22"/><circle cx="103.6" cy="283.2" r="0.9" fill="#e4eaf2" fill-opacity="0.58"/><rect x="155" y="33" width="1" height="1" fill="#a8b0bc" fill-opacity="0.41"/><rect x="174" y="247" width="1" height="1" fill="#a8b0bc" fill-opacity="0.38"/><rect x="167" y="217" width="1" height="1" fill="#d0d8e4" fill-opacity="0.51"/><rect x="91" y="108" width="1" height="1" fill="#a8b0bc" fill-opacity="0.43"/><rect x="116" y="16" width="1" height="1" fill="#d0d8e4" fill-opacity="0.58"/><rect x="236" y="278" width="1" height="1" fill="#d0d8e4" fill-opacity="0.39"/><circle cx="234.6" cy="12.9" r="0.9" fill="#e4eaf2" fill-opacity="0.62"/><rect x="40" y="194" width="1" height="1" fill="#a8b0bc" fill-opacity="0.41"/><rect x="140" y="351" width="1" height="1" fill="#a8b0bc" fill-opacity="0.21"/><rect x="81" y="88" width="1" height="1" fill="#a8b0bc" fill-opacity="0.43"/><rect x="228" y="225" width="1" height="1" fill="#a8b0bc" fill-opacity="0.35"/><rect x="194" y="280" width="1" height="1" fill="#a8b0bc" fill-opacity="0.25"/><rect x="155" y="230" width="1" height="1" fill="#d0d8e4" fill-opacity="0.63"/><rect x="203" y="177" width="1" height="1" fill="#d0d8e4" fill-opacity="0.49"/><rect x="48" y="242" width="1" height="1" fill="#a8b0bc" fill-opacity="0.26"/><rect x="39" y="162" width="1" height="1" fill="#a8b0bc" fill-opacity="0.40"/><rect x="13" y="6" width="1" height="1" fill="#a8b0bc" fill-opacity="0.28"/><rect x="110" y="117" width="1" height="1" fill="#a8b0bc" fill-opacity="0.38"/><rect x="175" y="148" width="1" height="1" fill="#a8b0bc" fill-opacity="0.33"/><rect x="106" y="245" width="1" height="1" fill="#a8b0bc" fill-opacity="0.21"/><rect x="18" y="11" width="1" height="1" fill="#d0d8e4" fill-opacity="0.53"/><rect x="169" y="133" width="1" height="1" fill="#a8b0bc" fill-opacity="0.35"/><rect x="74" y="40" width="1" height="1" fill="#a8b0bc" fill-opacity="0.30"/><rect x="194" y="237" width="1" height="1" fill="#a8b0bc" fill-opacity="0.31"/><circle cx="22.6" cy="216.6" r="0.9" fill="#e4eaf2" fill-opacity="0.68"/><rect x="156" y="221" width="1" height="1" fill="#a8b0bc" fill-opacity="0.31"/><rect x="124" y="95" width="1" height="1" fill="#a8b0bc" fill-opacity="0.35"/><rect x="96" y="270" width="1" height="1" fill="#d0d8e4" fill-opacity="0.51"/><rect x="214" y="366" width="1" height="1" fill="#d0d8e4" fill-opacity="0.55"/><rect x="258" y="163" width="1" height="1" fill="#a8b0bc" fill-opacity="0.23"/><rect x="274" y="95" width="1" height="1" fill="#a8b0bc" fill-opacity="0.23"/><rect x="54" y="39" width="1" height="1" fill="#a8b0bc" fill-opacity="0.33"/><rect x="212" y="340" width="1" height="1" fill="#a8b0bc" fill-opacity="0.29"/><rect x="113" y="208" width="1" height="1" fill="#a8b0bc" fill-opacity="0.43"/><rect x="157" y="129" width="1" height="1" fill="#d0d8e4" fill-opacity="0.52"/><rect x="141" y="73" width="1" height="1" fill="#a8b0bc" fill-opacity="0.32"/><rect x="236" y="310" width="1" height="1" fill="#a8b0bc" fill-opacity="0.23"/><rect x="80" y="134" width="1" height="1" fill="#a8b0bc" fill-opacity="0.42"/><rect x="239" y="63" width="1" height="1" fill="#a8b0bc" fill-opacity="0.26"/><rect x="63" y="41" width="1" height="1" fill="#a8b0bc" fill-opacity="0.42"/><rect x="106" y="245" width="1" height="1" fill="#d0d8e4" fill-opacity="0.63"/><rect x="206" y="185" width="1" height="1" fill="#a8b0bc" fill-opacity="0.25"/><rect x="94" y="381" width="1" height="1" fill="#a8b0bc" fill-opacity="0.44"/><rect x="57" y="297" width="1" height="1" fill="#a8b0bc" fill-opacity="0.44"/><rect x="106" y="222" width="1" height="1" fill="#a8b0bc" fill-opacity="0.33"/><rect x="43" y="272" width="1" height="1" fill="#a8b0bc" fill-opacity="0.21"/><rect x="28" y="351" width="1" height="1" fill="#a8b0bc" fill-opacity="0.23"/><rect x="15" y="108" width="1" height="1" fill="#d0d8e4" fill-opacity="0.42"/><rect x="239" y="326" width="1" height="1" fill="#a8b0bc" fill-opacity="0.33"/><rect x="53" y="5" width="1" height="1" fill="#d0d8e4" fill-opacity="0.50"/><rect x="8" y="63" width="1" height="1" fill="#a8b0bc" fill-opacity="0.40"/><rect x="220" y="144" width="1" height="1" fill="#a8b0bc" fill-opacity="0.30"/><rect x="103" y="118" width="1" height="1" fill="#a8b0bc" fill-opacity="0.23"/><circle cx="211.4" cy="30.0" r="0.9" fill="#e4eaf2" fill-opacity="0.70"/><rect x="141" y="175" width="1" height="1" fill="#a8b0bc" fill-opacity="0.24"/><rect x="19" y="96" width="1" height="1" fill="#a8b0bc" fill-opacity="0.33"/><rect x="200" y="13" width="1" height="1" fill="#d0d8e4" fill-opacity="0.45"/><rect x="271" y="183" width="1" height="1" fill="#a8b0bc" fill-opacity="0.21"/><rect x="223" y="115" width="1" height="1" fill="#a8b0bc" fill-opacity="0.20"/><rect x="187" y="45" width="1" height="1" fill="#a8b0bc" fill-opacity="0.20"/><rect x="87" y="273" width="1" height="1" fill="#a8b0bc" fill-opacity="0.21"/><rect x="274" y="262" width="1" height="1" fill="#d0d8e4" fill-opacity="0.56"/><rect x="49" y="366" width="1" height="1" fill="#d0d8e4" fill-opacity="0.55"/><circle cx="115.1" cy="184.5" r="0.9" fill="#e4eaf2" fill-opacity="0.65"/><rect x="270" y="276" width="1" height="1" fill="#a8b0bc" fill-opacity="0.25"/><rect x="196" y="312" width="1" height="1" fill="#a8b0bc" fill-opacity="0.24"/><rect x="121" y="255" width="1" height="1" fill="#d0d8e4" fill-opacity="0.52"/><rect x="160" y="231" width="1" height="1" fill="#d0d8e4" fill-opacity="0.49"/><rect x="13" y="27" width="1" height="1" fill="#a8b0bc" fill-opacity="0.38"/><circle cx="167.6" cy="365.9" r="0.9" fill="#e4eaf2" fill-opacity="0.64"/><rect x="232" y="260" width="1" height="1" fill="#d0d8e4" fill-opacity="0.58"/><rect x="145" y="329" width="1" height="1" fill="#d0d8e4" fill-opacity="0.39"/><rect x="260" y="267" width="1" height="1" fill="#a8b0bc" fill-opacity="0.20"/><rect x="95" y="302" width="1" height="1" fill="#a8b0bc" fill-opacity="0.45"/><rect x="8" y="251" width="1" height="1" fill="#a8b0bc" fill-opacity="0.34"/><rect x="158" y="101" width="1" height="1" fill="#a8b0bc" fill-opacity="0.24"/><rect x="112" y="202" width="1" height="1" fill="#a8b0bc" fill-opacity="0.43"/><rect x="170" y="32" width="1" height="1" fill="#a8b0bc" fill-opacity="0.23"/><rect x="180" y="146" width="1" height="1" fill="#a8b0bc" fill-opacity="0.29"/><rect x="38" y="335" width="1" height="1" fill="#a8b0bc" fill-opacity="0.25"/><rect x="166" y="361" width="1" height="1" fill="#a8b0bc" fill-opacity="0.34"/><rect x="197" y="269" width="1" height="1" fill="#d0d8e4" fill-opacity="0.53"/><rect x="257" y="248" width="1" height="1" fill="#a8b0bc" fill-opacity="0.38"/><rect x="37" y="166" width="1" height="1" fill="#a8b0bc" fill-opacity="0.21"/><rect x="173" y="332" width="1" height="1" fill="#a8b0bc" fill-opacity="0.25"/><rect x="188" y="250" width="1" height="1" fill="#a8b0bc" fill-opacity="0.36"/><circle cx="10.3" cy="172.7" r="0.9" fill="#e4eaf2" fill-opacity="0.65"/><rect x="253" y="88" width="1" height="1" fill="#a8b0bc" fill-opacity="0.25"/><rect x="134" y="312" width="1" height="1" fill="#d0d8e4" fill-opacity="0.59"/><rect x="170" y="355" width="1" height="1" fill="#d0d8e4" fill-opacity="0.43"/><rect x="37" y="7" width="1" height="1" fill="#a8b0bc" fill-opacity="0.24"/><rect x="148" y="97" width="1" height="1" fill="#a8b0bc" fill-opacity="0.22"/><rect x="67" y="121" width="1" height="1" fill="#d0d8e4" fill-opacity="0.54"/><rect x="259" y="281" width="1" height="1" fill="#d0d8e4" fill-opacity="0.49"/><rect x="60" y="81" width="1" height="1" fill="#d0d8e4" fill-opacity="0.57"/><rect x="151" y="306" width="1" height="1" fill="#d0d8e4" fill-opacity="0.36"/><rect x="39" y="29" width="1" height="1" fill="#a8b0bc" fill-opacity="0.23"/><rect x="197" y="162" width="1" height="1" fill="#d0d8e4" fill-opacity="0.56"/><rect x="87" y="354" width="1" height="1" fill="#a8b0bc" fill-opacity="0.21"/><rect x="109" y="35" width="1" height="1" fill="#a8b0bc" fill-opacity="0.38"/><rect x="5" y="348" width="1" height="1" fill="#d0d8e4" fill-opacity="0.50"/><rect x="186" y="270" width="1" height="1" fill="#a8b0bc" fill-opacity="0.24"/><rect x="237" y="283" width="1" height="1" fill="#a8b0bc" fill-opacity="0.45"/><rect x="203" y="25" width="1" height="1" fill="#a8b0bc" fill-opacity="0.42"/><rect x="201" y="133" width="1" height="1" fill="#a8b0bc" fill-opacity="0.31"/><rect x="83" y="199" width="1" height="1" fill="#a8b0bc" fill-opacity="0.23"/><rect x="13" y="284" width="1" height="1" fill="#a8b0bc" fill-opacity="0.23"/><rect x="107" y="86" width="1" height="1" fill="#a8b0bc" fill-opacity="0.39"/><rect x="99" y="303" width="1" height="1" fill="#a8b0bc" fill-opacity="0.37"/><circle cx="270.8" cy="202.5" r="0.9" fill="#e4eaf2" fill-opacity="0.61"/><rect x="188" y="278" width="1" height="1" fill="#a8b0bc" fill-opacity="0.38"/><rect x="114" y="221" width="1" height="1" fill="#a8b0bc" fill-opacity="0.40"/><rect x="13" y="183" width="1" height="1" fill="#d0d8e4" fill-opacity="0.54"/><rect x="124" y="146" width="1" height="1" fill="#a8b0bc" fill-opacity="0.22"/><rect x="20" y="389" width="1" height="1" fill="#a8b0bc" fill-opacity="0.39"/><rect x="66" y="224" width="1" height="1" fill="#a8b0bc" fill-opacity="0.38"/><rect x="272" y="326" width="1" height="1" fill="#d0d8e4" fill-opacity="0.50"/><rect x="177" y="234" width="1" height="1" fill="#a8b0bc" fill-opacity="0.41"/><rect x="60" y="171" width="1" height="1" fill="#a8b0bc" fill-opacity="0.37"/><rect x="21" y="289" width="1" height="1" fill="#a8b0bc" fill-opacity="0.40"/><rect x="199" y="368" width="1" height="1" fill="#a8b0bc" fill-opacity="0.22"/><rect x="203" y="168" width="1" height="1" fill="#a8b0bc" fill-opacity="0.23"/><rect x="113" y="278" width="1" height="1" fill="#d0d8e4" fill-opacity="0.46"/><rect x="265" y="306" width="1" height="1" fill="#a8b0bc" fill-opacity="0.30"/><circle cx="254.3" cy="29.6" r="0.9" fill="#e4eaf2" fill-opacity="0.56"/><rect x="235" y="205" width="1" height="1" fill="#d0d8e4" fill-opacity="0.61"/><rect x="165" y="311" width="1" height="1" fill="#a8b0bc" fill-opacity="0.32"/><rect x="216" y="153" width="1" height="1" fill="#a8b0bc" fill-opacity="0.29"/><rect x="156" y="321" width="1" height="1" fill="#a8b0bc" fill-opacity="0.21"/><rect x="18" y="207" width="1" height="1" fill="#a8b0bc" fill-opacity="0.23"/><rect x="31" y="28" width="1" height="1" fill="#a8b0bc" fill-opacity="0.26"/><rect x="194" y="238" width="1" height="1" fill="#a8b0bc" fill-opacity="0.28"/><rect x="136" y="252" width="1" height="1" fill="#a8b0bc" fill-opacity="0.29"/><rect x="7" y="30" width="1" height="1" fill="#d0d8e4" fill-opacity="0.60"/><rect x="203" y="207" width="1" height="1" fill="#d0d8e4" fill-opacity="0.39"/><rect x="220" y="23" width="1" height="1" fill="#a8b0bc" fill-opacity="0.32"/><rect x="111" y="278" width="1" height="1" fill="#d0d8e4" fill-opacity="0.53"/><rect x="163" y="23" width="1" height="1" fill="#a8b0bc" fill-opacity="0.20"/><rect x="111" y="113" width="1" height="1" fill="#a8b0bc" fill-opacity="0.26"/><rect x="20" y="42" width="1" height="1" fill="#a8b0bc" fill-opacity="0.43"/><rect x="185" y="291" width="1" height="1" fill="#a8b0bc" fill-opacity="0.33"/><rect x="266" y="343" width="1" height="1" fill="#a8b0bc" fill-opacity="0.28"/><rect x="71" y="72" width="1" height="1" fill="#a8b0bc" fill-opacity="0.26"/><circle cx="33.1" cy="132.3" r="0.9" fill="#e4eaf2" fill-opacity="0.81"/><rect x="214" y="343" width="1" height="1" fill="#a8b0bc" fill-opacity="0.34"/><rect x="76" y="127" width="1" height="1" fill="#a8b0bc" fill-opacity="0.38"/><rect x="107" y="80" width="1" height="1" fill="#a8b0bc" fill-opacity="0.29"/><rect x="56" y="383" width="1" height="1" fill="#a8b0bc" fill-opacity="0.24"/><circle cx="40.2" cy="328.6" r="0.9" fill="#e4eaf2" fill-opacity="0.60"/><rect x="151" y="130" width="1" height="1" fill="#a8b0bc" fill-opacity="0.36"/><rect x="82" y="248" width="1" height="1" fill="#a8b0bc" fill-opacity="0.34"/><circle cx="116.1" cy="29.2" r="0.9" fill="#e4eaf2" fill-opacity="0.56"/><rect x="41" y="159" width="1" height="1" fill="#d0d8e4" fill-opacity="0.51"/><rect x="91" y="33" width="1" height="1" fill="#a8b0bc" fill-opacity="0.36"/><rect x="273" y="374" width="1" height="1" fill="#d0d8e4" fill-opacity="0.64"/><rect x="76" y="26" width="1" height="1" fill="#a8b0bc" fill-opacity="0.20"/><rect x="141" y="320" width="1" height="1" fill="#a8b0bc" fill-opacity="0.26"/><rect x="64" y="217" width="1" height="1" fill="#a8b0bc" fill-opacity="0.27"/><rect x="223" y="195" width="1" height="1" fill="#a8b0bc" fill-opacity="0.21"/><rect x="126" y="135" width="1" height="1" fill="#a8b0bc" fill-opacity="0.42"/><rect x="234" y="96" width="1" height="1" fill="#a8b0bc" fill-opacity="0.39"/><rect x="139" y="357" width="1" height="1" fill="#d0d8e4" fill-opacity="0.55"/><rect x="92" y="204" width="1" height="1" fill="#a8b0bc" fill-opacity="0.41"/><rect x="81" y="165" width="1" height="1" fill="#a8b0bc" fill-opacity="0.39"/><rect x="82" y="152" width="1" height="1" fill="#a8b0bc" fill-opacity="0.41"/><rect x="45" y="378" width="1" height="1" fill="#a8b0bc" fill-opacity="0.20"/><rect x="92" y="146" width="1" height="1" fill="#d0d8e4" fill-opacity="0.64"/><rect x="36" y="169" width="1" height="1" fill="#a8b0bc" fill-opacity="0.35"/><rect x="57" y="107" width="1" height="1" fill="#a8b0bc" fill-opacity="0.40"/><rect x="264" y="243" width="1" height="1" fill="#d0d8e4" fill-opacity="0.42"/><rect x="117" y="192" width="1" height="1" fill="#a8b0bc" fill-opacity="0.24"/><rect x="3" y="232" width="1" height="1" fill="#a8b0bc" fill-opacity="0.31"/><rect x="181" y="296" width="1" height="1" fill="#a8b0bc" fill-opacity="0.36"/><rect x="218" y="92" width="1" height="1" fill="#d0d8e4" fill-opacity="0.39"/><rect x="68" y="105" width="1" height="1" fill="#a8b0bc" fill-opacity="0.29"/><rect x="131" y="324" width="1" height="1" fill="#a8b0bc" fill-opacity="0.37"/><rect x="15" y="22" width="1" height="1" fill="#d0d8e4" fill-opacity="0.42"/><rect x="212" y="378" width="1" height="1" fill="#a8b0bc" fill-opacity="0.41"/><rect x="269" y="287" width="1" height="1" fill="#d0d8e4" fill-opacity="0.57"/><rect x="237" y="126" width="1" height="1" fill="#d0d8e4" fill-opacity="0.56"/><rect x="229" y="36" width="1" height="1" fill="#a8b0bc" fill-opacity="0.43"/><rect x="214" y="282" width="1" height="1" fill="#a8b0bc" fill-opacity="0.42"/><rect x="102" y="63" width="1" height="1" fill="#a8b0bc" fill-opacity="0.35"/><rect x="7" y="374" width="1" height="1" fill="#a8b0bc" fill-opacity="0.24"/><rect x="193" y="8" width="1" height="1" fill="#a8b0bc" fill-opacity="0.31"/><rect x="176" y="314" width="1" height="1" fill="#a8b0bc" fill-opacity="0.39"/><rect x="139" y="341" width="1" height="1" fill="#a8b0bc" fill-opacity="0.33"/><rect x="267" y="236" width="1" height="1" fill="#a8b0bc" fill-opacity="0.25"/><rect x="86" y="60" width="1" height="1" fill="#a8b0bc" fill-opacity="0.33"/><rect x="50" y="7" width="1" height="1" fill="#a8b0bc" fill-opacity="0.34"/><rect x="110" y="40" width="1" height="1" fill="#a8b0bc" fill-opacity="0.27"/><rect x="240" y="41" width="1" height="1" fill="#a8b0bc" fill-opacity="0.22"/><rect x="15" y="217" width="1" height="1" fill="#a8b0bc" fill-opacity="0.41"/><rect x="231" y="99" width="1" height="1" fill="#a8b0bc" fill-opacity="0.40"/><rect x="125" y="217" width="1" height="1" fill="#a8b0bc" fill-opacity="0.21"/><rect x="99" y="69" width="1" height="1" fill="#a8b0bc" fill-opacity="0.26"/><rect x="157" y="81" width="1" height="1" fill="#a8b0bc" fill-opacity="0.42"/><rect x="240" y="209" width="1" height="1" fill="#a8b0bc" fill-opacity="0.32"/><rect x="238" y="174" width="1" height="1" fill="#a8b0bc" fill-opacity="0.45"/><rect x="87" y="33" width="1" height="1" fill="#a8b0bc" fill-opacity="0.32"/><circle cx="191.4" cy="110.0" r="0.9" fill="#e4eaf2" fill-opacity="0.60"/><rect x="270" y="386" width="1" height="1" fill="#a8b0bc" fill-opacity="0.45"/><rect x="27" y="140" width="1" height="1" fill="#a8b0bc" fill-opacity="0.37"/><rect x="156" y="26" width="1" height="1" fill="#a8b0bc" fill-opacity="0.29"/><circle cx="220.5" cy="183.0" r="0.9" fill="#e4eaf2" fill-opacity="0.84"/><rect x="172" y="194" width="1" height="1" fill="#a8b0bc" fill-opacity="0.27"/><rect x="211" y="219" width="1" height="1" fill="#d0d8e4" fill-opacity="0.44"/><rect x="131" y="302" width="1" height="1" fill="#a8b0bc" fill-opacity="0.26"/><rect x="133" y="234" width="1" height="1" fill="#a8b0bc" fill-opacity="0.24"/><rect x="39" y="186" width="1" height="1" fill="#d0d8e4" fill-opacity="0.42"/><rect x="235" y="111" width="1" height="1" fill="#a8b0bc" fill-opacity="0.26"/><rect x="1" y="383" width="1" height="1" fill="#d0d8e4" fill-opacity="0.48"/><rect x="240" y="24" width="1" height="1" fill="#a8b0bc" fill-opacity="0.34"/><rect x="43" y="3" width="1" height="1" fill="#a8b0bc" fill-opacity="0.34"/><rect x="115" y="195" width="1" height="1" fill="#a8b0bc" fill-opacity="0.27"/><rect x="177" y="227" width="1" height="1" fill="#a8b0bc" fill-opacity="0.39"/><rect x="10" y="8" width="1" height="1" fill="#a8b0bc" fill-opacity="0.20"/><rect x="155" y="375" width="1" height="1" fill="#d0d8e4" fill-opacity="0.36"/><rect x="148" y="323" width="1" height="1" fill="#d0d8e4" fill-opacity="0.60"/><rect x="51" y="237" width="1" height="1" fill="#a8b0bc" fill-opacity="0.23"/><rect x="227" y="47" width="1" height="1" fill="#a8b0bc" fill-opacity="0.30"/><rect x="83" y="39" width="1" height="1" fill="#a8b0bc" fill-opacity="0.21"/><rect x="268" y="74" width="1" height="1" fill="#a8b0bc" fill-opacity="0.33"/><rect x="144" y="347" width="1" height="1" fill="#a8b0bc" fill-opacity="0.43"/><rect x="200" y="121" width="1" height="1" fill="#a8b0bc" fill-opacity="0.44"/><rect x="263" y="310" width="1" height="1" fill="#a8b0bc" fill-opacity="0.21"/><rect x="83" y="92" width="1" height="1" fill="#d0d8e4" fill-opacity="0.43"/><rect x="202" y="291" width="1" height="1" fill="#a8b0bc" fill-opacity="0.37"/><rect x="231" y="236" width="1" height="1" fill="#a8b0bc" fill-opacity="0.41"/><rect x="194" y="217" width="1" height="1" fill="#d0d8e4" fill-opacity="0.61"/><rect x="96" y="373" width="1" height="1" fill="#a8b0bc" fill-opacity="0.37"/><rect x="128" y="379" width="1" height="1" fill="#a8b0bc" fill-opacity="0.41"/><rect x="42" y="375" width="1" height="1" fill="#d0d8e4" fill-opacity="0.35"/><rect x="77" y="18" width="1" height="1" fill="#a8b0bc" fill-opacity="0.37"/><rect x="27" y="208" width="1" height="1" fill="#a8b0bc" fill-opacity="0.24"/><rect x="118" y="385" width="1" height="1" fill="#a8b0bc" fill-opacity="0.22"/><rect x="181" y="132" width="1" height="1" fill="#a8b0bc" fill-opacity="0.20"/><rect x="199" y="272" width="1" height="1" fill="#a8b0bc" fill-opacity="0.43"/><circle cx="252.0" cy="353.5" r="0.9" fill="#e4eaf2" fill-opacity="0.82"/><rect x="17" y="293" width="1" height="1" fill="#d0d8e4" fill-opacity="0.65"/><rect x="73" y="360" width="1" height="1" fill="#d0d8e4" fill-opacity="0.54"/><rect x="170" y="174" width="1" height="1" fill="#a8b0bc" fill-opacity="0.29"/><rect x="220" y="255" width="1" height="1" fill="#a8b0bc" fill-opacity="0.37"/><rect x="203" y="75" width="1" height="1" fill="#a8b0bc" fill-opacity="0.41"/><rect x="36" y="75" width="1" height="1" fill="#d0d8e4" fill-opacity="0.41"/><rect x="193" y="362" width="1" height="1" fill="#a8b0bc" fill-opacity="0.32"/><rect x="59" y="365" width="1" height="1" fill="#d0d8e4" fill-opacity="0.45"/><rect x="150" y="342" width="1" height="1" fill="#a8b0bc" fill-opacity="0.28"/><rect x="144" y="321" width="1" height="1" fill="#d0d8e4" fill-opacity="0.39"/><rect x="135" y="335" width="1" height="1" fill="#a8b0bc" fill-opacity="0.44"/><rect x="190" y="178" width="1" height="1" fill="#a8b0bc" fill-opacity="0.30"/><rect x="194" y="139" width="1" height="1" fill="#a8b0bc" fill-opacity="0.20"/><rect x="229" y="31" width="1" height="1" fill="#a8b0bc" fill-opacity="0.27"/><rect x="172" y="31" width="1" height="1" fill="#a8b0bc" fill-opacity="0.34"/><rect x="160" y="32" width="1" height="1" fill="#a8b0bc" fill-opacity="0.39"/><rect x="194" y="192" width="1" height="1" fill="#a8b0bc" fill-opacity="0.33"/><rect x="116" y="170" width="1" height="1" fill="#a8b0bc" fill-opacity="0.21"/><rect x="151" y="205" width="1" height="1" fill="#a8b0bc" fill-opacity="0.25"/><rect x="67" y="22" width="1" height="1" fill="#d0d8e4" fill-opacity="0.43"/><rect x="67" y="317" width="1" height="1" fill="#a8b0bc" fill-opacity="0.32"/><rect x="247" y="339" width="1" height="1" fill="#a8b0bc" fill-opacity="0.29"/><rect x="76" y="246" width="1" height="1" fill="#d0d8e4" fill-opacity="0.51"/><rect x="217" y="59" width="1" height="1" fill="#a8b0bc" fill-opacity="0.33"/><rect x="168" y="211" width="1" height="1" fill="#a8b0bc" fill-opacity="0.45"/><rect x="222" y="223" width="1" height="1" fill="#d0d8e4" fill-opacity="0.57"/><rect x="158" y="118" width="1" height="1" fill="#a8b0bc" fill-opacity="0.38"/><rect x="80" y="15" width="1" height="1" fill="#a8b0bc" fill-opacity="0.28"/><rect x="232" y="356" width="1" height="1" fill="#a8b0bc" fill-opacity="0.44"/><rect x="109" y="362" width="1" height="1" fill="#a8b0bc" fill-opacity="0.35"/><rect x="253" y="14" width="1" height="1" fill="#a8b0bc" fill-opacity="0.44"/><rect x="99" y="254" width="1" height="1" fill="#a8b0bc" fill-opacity="0.26"/><rect x="11" y="105" width="1" height="1" fill="#d0d8e4" fill-opacity="0.41"/><rect x="66" y="357" width="1" height="1" fill="#a8b0bc" fill-opacity="0.35"/><rect x="80" y="66" width="1" height="1" fill="#a8b0bc" fill-opacity="0.40"/><rect x="54" y="220" width="1" height="1" fill="#a8b0bc" fill-opacity="0.35"/><rect x="84" y="284" width="1" height="1" fill="#a8b0bc" fill-opacity="0.41"/><rect x="228" y="143" width="1" height="1" fill="#a8b0bc" fill-opacity="0.32"/><rect x="187" y="269" width="1" height="1" fill="#a8b0bc" fill-opacity="0.39"/><rect x="144" y="172" width="1" height="1" fill="#a8b0bc" fill-opacity="0.25"/><rect x="151" y="319" width="1" height="1" fill="#d0d8e4" fill-opacity="0.52"/><rect x="157" y="124" width="1" height="1" fill="#d0d8e4" fill-opacity="0.44"/><rect x="196" y="153" width="1" height="1" fill="#a8b0bc" fill-opacity="0.33"/><rect x="62" y="1" width="1" height="1" fill="#a8b0bc" fill-opacity="0.34"/><rect x="93" y="362" width="1" height="1" fill="#d0d8e4" fill-opacity="0.63"/><rect x="83" y="347" width="1" height="1" fill="#a8b0bc" fill-opacity="0.28"/><rect x="71" y="339" width="1" height="1" fill="#a8b0bc" fill-opacity="0.29"/><rect x="215" y="17" width="1" height="1" fill="#d0d8e4" fill-opacity="0.54"/><rect x="151" y="163" width="1" height="1" fill="#a8b0bc" fill-opacity="0.44"/><rect x="64" y="206" width="1" height="1" fill="#a8b0bc" fill-opacity="0.24"/><rect x="144" y="279" width="1" height="1" fill="#a8b0bc" fill-opacity="0.23"/><rect x="150" y="65" width="1" height="1" fill="#a8b0bc" fill-opacity="0.29"/><rect x="26" y="312" width="1" height="1" fill="#a8b0bc" fill-opacity="0.43"/><rect x="229" y="230" width="1" height="1" fill="#d0d8e4" fill-opacity="0.44"/><rect x="201" y="156" width="1" height="1" fill="#a8b0bc" fill-opacity="0.29"/><rect x="231" y="65" width="1" height="1" fill="#d0d8e4" fill-opacity="0.62"/><rect x="191" y="340" width="1" height="1" fill="#a8b0bc" fill-opacity="0.38"/><rect x="78" y="336" width="1" height="1" fill="#a8b0bc" fill-opacity="0.40"/><rect x="181" y="313" width="1" height="1" fill="#d0d8e4" fill-opacity="0.50"/><rect x="76" y="84" width="1" height="1" fill="#a8b0bc" fill-opacity="0.41"/><rect x="65" y="130" width="1" height="1" fill="#a8b0bc" fill-opacity="0.33"/><rect x="17" y="243" width="1" height="1" fill="#a8b0bc" fill-opacity="0.37"/><rect x="6" y="176" width="1" height="1" fill="#a8b0bc" fill-opacity="0.25"/><rect x="104" y="65" width="1" height="1" fill="#d0d8e4" fill-opacity="0.65"/><rect x="265" y="330" width="1" height="1" fill="#a8b0bc" fill-opacity="0.43"/><rect x="275" y="94" width="1" height="1" fill="#a8b0bc" fill-opacity="0.37"/><rect x="112" y="239" width="1" height="1" fill="#a8b0bc" fill-opacity="0.32"/><rect x="135" y="10" width="1" height="1" fill="#d0d8e4" fill-opacity="0.39"/><rect x="57" y="303" width="1" height="1" fill="#a8b0bc" fill-opacity="0.32"/><rect x="270" y="221" width="1" height="1" fill="#a8b0bc" fill-opacity="0.23"/><rect x="204" y="350" width="1" height="1" fill="#d0d8e4" fill-opacity="0.43"/><rect x="172" y="362" width="1" height="1" fill="#a8b0bc" fill-opacity="0.41"/><rect x="268" y="311" width="1" height="1" fill="#a8b0bc" fill-opacity="0.38"/><rect x="222" y="215" width="1" height="1" fill="#a8b0bc" fill-opacity="0.41"/><rect x="224" y="169" width="1" height="1" fill="#a8b0bc" fill-opacity="0.32"/><circle cx="246.6" cy="363.6" r="0.9" fill="#e4eaf2" fill-opacity="0.78"/><rect x="155" y="57" width="1" height="1" fill="#a8b0bc" fill-opacity="0.24"/><rect x="168" y="362" width="1" height="1" fill="#d0d8e4" fill-opacity="0.64"/><rect x="13" y="52" width="1" height="1" fill="#d0d8e4" fill-opacity="0.44"/><rect x="23" y="69" width="1" height="1" fill="#a8b0bc" fill-opacity="0.30"/><rect x="237" y="274" width="1" height="1" fill="#d0d8e4" fill-opacity="0.47"/><rect x="223" y="373" width="1" height="1" fill="#d0d8e4" fill-opacity="0.53"/><rect x="21" y="276" width="1" height="1" fill="#a8b0bc" fill-opacity="0.39"/><rect x="234" y="214" width="1" height="1" fill="#a8b0bc" fill-opacity="0.36"/><rect x="130" y="87" width="1" height="1" fill="#a8b0bc" fill-opacity="0.42"/><rect x="257" y="13" width="1" height="1" fill="#a8b0bc" fill-opacity="0.37"/><rect x="188" y="323" width="1" height="1" fill="#a8b0bc" fill-opacity="0.27"/><rect x="153" y="372" width="1" height="1" fill="#a8b0bc" fill-opacity="0.27"/><rect x="14" y="128" width="1" height="1" fill="#d0d8e4" fill-opacity="0.38"/><rect x="59" y="124" width="1" height="1" fill="#a8b0bc" fill-opacity="0.26"/><rect x="182" y="77" width="1" height="1" fill="#a8b0bc" fill-opacity="0.40"/><rect x="245" y="372" width="1" height="1" fill="#a8b0bc" fill-opacity="0.28"/><rect x="44" y="77" width="1" height="1" fill="#d0d8e4" fill-opacity="0.47"/><rect x="86" y="337" width="1" height="1" fill="#a8b0bc" fill-opacity="0.43"/><rect x="72" y="145" width="1" height="1" fill="#a8b0bc" fill-opacity="0.37"/><rect x="237" y="304" width="1" height="1" fill="#a8b0bc" fill-opacity="0.29"/><rect x="207" y="373" width="1" height="1" fill="#a8b0bc" fill-opacity="0.38"/><rect x="64" y="369" width="1" height="1" fill="#a8b0bc" fill-opacity="0.43"/><rect x="148" y="346" width="1" height="1" fill="#a8b0bc" fill-opacity="0.45"/><rect x="131" y="36" width="1" height="1" fill="#a8b0bc" fill-opacity="0.31"/><rect x="238" y="323" width="1" height="1" fill="#a8b0bc" fill-opacity="0.36"/><rect x="11" y="119" width="1" height="1" fill="#d0d8e4" fill-opacity="0.45"/><rect x="124" y="3" width="1" height="1" fill="#a8b0bc" fill-opacity="0.40"/><rect x="165" y="65" width="1" height="1" fill="#a8b0bc" fill-opacity="0.26"/><rect x="253" y="18" width="1" height="1" fill="#a8b0bc" fill-opacity="0.26"/><rect x="256" y="266" width="1" height="1" fill="#d0d8e4" fill-opacity="0.62"/><rect x="33" y="166" width="1" height="1" fill="#a8b0bc" fill-opacity="0.39"/><rect x="128" y="332" width="1" height="1" fill="#a8b0bc" fill-opacity="0.44"/><rect x="199" y="61" width="1" height="1" fill="#a8b0bc" fill-opacity="0.25"/><rect x="70" y="228" width="1" height="1" fill="#a8b0bc" fill-opacity="0.36"/><rect x="69" y="272" width="1" height="1" fill="#d0d8e4" fill-opacity="0.57"/><rect x="270" y="193" width="1" height="1" fill="#a8b0bc" fill-opacity="0.40"/><rect x="11" y="296" width="1" height="1" fill="#a8b0bc" fill-opacity="0.39"/><rect x="152" y="130" width="1" height="1" fill="#a8b0bc" fill-opacity="0.34"/><rect x="89" y="274" width="1" height="1" fill="#a8b0bc" fill-opacity="0.20"/><rect x="206" y="242" width="1" height="1" fill="#a8b0bc" fill-opacity="0.31"/><rect x="97" y="108" width="1" height="1" fill="#a8b0bc" fill-opacity="0.41"/><rect x="156" y="365" width="1" height="1" fill="#d0d8e4" fill-opacity="0.45"/><rect x="158" y="294" width="1" height="1" fill="#a8b0bc" fill-opacity="0.34"/><rect x="240" y="32" width="1" height="1" fill="#a8b0bc" fill-opacity="0.40"/><rect x="157" y="337" width="1" height="1" fill="#a8b0bc" fill-opacity="0.25"/><rect x="260" y="315" width="1" height="1" fill="#d0d8e4" fill-opacity="0.64"/><circle cx="162.0" cy="347.3" r="0.9" fill="#e4eaf2" fill-opacity="0.64"/><rect x="182" y="385" width="1" height="1" fill="#d0d8e4" fill-opacity="0.42"/><rect x="126" y="92" width="1" height="1" fill="#a8b0bc" fill-opacity="0.34"/><rect x="124" y="301" width="1" height="1" fill="#a8b0bc" fill-opacity="0.41"/><rect x="153" y="74" width="1" height="1" fill="#a8b0bc" fill-opacity="0.22"/><rect x="21" y="146" width="1" height="1" fill="#a8b0bc" fill-opacity="0.37"/><rect x="231" y="163" width="1" height="1" fill="#d0d8e4" fill-opacity="0.63"/><rect x="255" y="268" width="1" height="1" fill="#a8b0bc" fill-opacity="0.42"/><rect x="195" y="306" width="1" height="1" fill="#a8b0bc" fill-opacity="0.24"/><rect x="92" y="61" width="1" height="1" fill="#d0d8e4" fill-opacity="0.41"/><rect x="141" y="312" width="1" height="1" fill="#a8b0bc" fill-opacity="0.22"/><rect x="147" y="12" width="1" height="1" fill="#d0d8e4" fill-opacity="0.49"/><rect x="195" y="367" width="1" height="1" fill="#a8b0bc" fill-opacity="0.29"/><rect x="59" y="321" width="1" height="1" fill="#d0d8e4" fill-opacity="0.62"/><rect x="221" y="105" width="1" height="1" fill="#a8b0bc" fill-opacity="0.32"/><rect x="218" y="149" width="1" height="1" fill="#d0d8e4" fill-opacity="0.41"/><rect x="128" y="138" width="1" height="1" fill="#d0d8e4" fill-opacity="0.45"/><rect x="240" y="66" width="1" height="1" fill="#a8b0bc" fill-opacity="0.45"/><rect x="46" y="141" width="1" height="1" fill="#a8b0bc" fill-opacity="0.31"/><rect x="230" y="247" width="1" height="1" fill="#a8b0bc" fill-opacity="0.30"/><rect x="40" y="173" width="1" height="1" fill="#d0d8e4" fill-opacity="0.50"/><rect x="174" y="38" width="1" height="1" fill="#d0d8e4" fill-opacity="0.61"/><rect x="88" y="5" width="1" height="1" fill="#a8b0bc" fill-opacity="0.24"/><rect x="27" y="362" width="1" height="1" fill="#d0d8e4" fill-opacity="0.47"/><rect x="250" y="297" width="1" height="1" fill="#a8b0bc" fill-opacity="0.32"/><rect x="18" y="297" width="1" height="1" fill="#a8b0bc" fill-opacity="0.31"/><rect x="38" y="321" width="1" height="1" fill="#a8b0bc" fill-opacity="0.38"/><rect x="44" y="277" width="1" height="1" fill="#a8b0bc" fill-opacity="0.30"/><rect x="87" y="376" width="1" height="1" fill="#a8b0bc" fill-opacity="0.31"/><rect x="84" y="327" width="1" height="1" fill="#a8b0bc" fill-opacity="0.42"/><rect x="266" y="84" width="1" height="1" fill="#a8b0bc" fill-opacity="0.23"/><rect x="166" y="72" width="1" height="1" fill="#d0d8e4" fill-opacity="0.38"/><rect x="171" y="113" width="1" height="1" fill="#a8b0bc" fill-opacity="0.20"/><rect x="227" y="311" width="1" height="1" fill="#a8b0bc" fill-opacity="0.31"/><circle cx="25.5" cy="55.8" r="0.9" fill="#e4eaf2" fill-opacity="0.84"/><rect x="128" y="102" width="1" height="1" fill="#a8b0bc" fill-opacity="0.39"/><rect x="144" y="84" width="1" height="1" fill="#a8b0bc" fill-opacity="0.32"/><rect x="212" y="300" width="1" height="1" fill="#d0d8e4" fill-opacity="0.54"/><rect x="271" y="78" width="1" height="1" fill="#a8b0bc" fill-opacity="0.27"/><rect x="143" y="231" width="1" height="1" fill="#a8b0bc" fill-opacity="0.30"/><rect x="224" y="273" width="1" height="1" fill="#a8b0bc" fill-opacity="0.20"/><circle cx="46.8" cy="212.6" r="0.9" fill="#e4eaf2" fill-opacity="0.58"/><rect x="77" y="261" width="1" height="1" fill="#a8b0bc" fill-opacity="0.43"/><rect x="210" y="124" width="1" height="1" fill="#a8b0bc" fill-opacity="0.21"/><rect x="60" y="269" width="1" height="1" fill="#a8b0bc" fill-opacity="0.27"/><rect x="161" y="110" width="1" height="1" fill="#a8b0bc" fill-opacity="0.39"/><rect x="4" y="158" width="1" height="1" fill="#a8b0bc" fill-opacity="0.25"/><rect x="41" y="21" width="1" height="1" fill="#a8b0bc" fill-opacity="0.28"/><rect x="240" y="215" width="1" height="1" fill="#a8b0bc" fill-opacity="0.28"/><rect x="81" y="178" width="1" height="1" fill="#d0d8e4" fill-opacity="0.62"/><rect x="20" y="359" width="1" height="1" fill="#a8b0bc" fill-opacity="0.44"/><rect x="85" y="27" width="1" height="1" fill="#a8b0bc" fill-opacity="0.27"/><rect x="252" y="171" width="1" height="1" fill="#a8b0bc" fill-opacity="0.30"/><circle cx="226.9" cy="165.8" r="0.9" fill="#e4eaf2" fill-opacity="0.78"/><rect x="35" y="48" width="1" height="1" fill="#a8b0bc" fill-opacity="0.24"/><rect x="234" y="84" width="1" height="1" fill="#d0d8e4" fill-opacity="0.63"/><rect x="127" y="135" width="1" height="1" fill="#a8b0bc" fill-opacity="0.45"/><rect x="95" y="158" width="1" height="1" fill="#a8b0bc" fill-opacity="0.42"/><rect x="214" y="84" width="1" height="1" fill="#a8b0bc" fill-opacity="0.42"/><rect x="34" y="269" width="1" height="1" fill="#a8b0bc" fill-opacity="0.42"/><rect x="44" y="384" width="1" height="1" fill="#a8b0bc" fill-opacity="0.27"/><rect x="3" y="135" width="1" height="1" fill="#a8b0bc" fill-opacity="0.23"/><rect x="32" y="276" width="1" height="1" fill="#a8b0bc" fill-opacity="0.35"/><rect x="12" y="159" width="1" height="1" fill="#a8b0bc" fill-opacity="0.38"/><rect x="20" y="114" width="1" height="1" fill="#d0d8e4" fill-opacity="0.50"/><rect x="110" y="102" width="1" height="1" fill="#a8b0bc" fill-opacity="0.23"/><rect x="91" y="4" width="1" height="1" fill="#d0d8e4" fill-opacity="0.55"/><rect x="2" y="85" width="1" height="1" fill="#d0d8e4" fill-opacity="0.44"/><rect x="97" y="302" width="1" height="1" fill="#a8b0bc" fill-opacity="0.35"/><rect x="10" y="31" width="1" height="1" fill="#a8b0bc" fill-opacity="0.44"/><rect x="266" y="257" width="1" height="1" fill="#d0d8e4" fill-opacity="0.52"/><rect x="9" y="38" width="1" height="1" fill="#a8b0bc" fill-opacity="0.30"/><rect x="100" y="27" width="1" height="1" fill="#d0d8e4" fill-opacity="0.60"/><rect x="132" y="250" width="1" height="1" fill="#a8b0bc" fill-opacity="0.32"/><rect x="217" y="146" width="1" height="1" fill="#a8b0bc" fill-opacity="0.37"/><rect x="223" y="156" width="1" height="1" fill="#a8b0bc" fill-opacity="0.23"/><rect x="218" y="107" width="1" height="1" fill="#a8b0bc" fill-opacity="0.25"/><rect x="115" y="321" width="1" height="1" fill="#a8b0bc" fill-opacity="0.24"/><rect x="127" y="72" width="1" height="1" fill="#a8b0bc" fill-opacity="0.44"/><rect x="61" y="365" width="1" height="1" fill="#d0d8e4" fill-opacity="0.36"/><rect x="28" y="228" width="1" height="1" fill="#a8b0bc" fill-opacity="0.27"/><rect x="33" y="223" width="1" height="1" fill="#d0d8e4" fill-opacity="0.52"/><rect x="96" y="144" width="1" height="1" fill="#a8b0bc" fill-opacity="0.24"/><rect x="128" y="291" width="1" height="1" fill="#a8b0bc" fill-opacity="0.42"/><rect x="64" y="112" width="1" height="1" fill="#d0d8e4" fill-opacity="0.45"/><rect x="121" y="16" width="1" height="1" fill="#a8b0bc" fill-opacity="0.29"/><rect x="40" y="376" width="1" height="1" fill="#d0d8e4" fill-opacity="0.44"/><rect x="10" y="2" width="1" height="1" fill="#d0d8e4" fill-opacity="0.43"/><rect x="18" y="188" width="1" height="1" fill="#a8b0bc" fill-opacity="0.21"/><rect x="181" y="62" width="1" height="1" fill="#d0d8e4" fill-opacity="0.59"/><circle cx="191.9" cy="126.8" r="0.9" fill="#e4eaf2" fill-opacity="0.62"/><rect x="57" y="307" width="1" height="1" fill="#a8b0bc" fill-opacity="0.31"/><rect x="150" y="149" width="1" height="1" fill="#a8b0bc" fill-opacity="0.32"/><rect x="96" y="50" width="1" height="1" fill="#d0d8e4" fill-opacity="0.62"/><rect x="164" y="118" width="1" height="1" fill="#a8b0bc" fill-opacity="0.33"/><rect x="7" y="171" width="1" height="1" fill="#a8b0bc" fill-opacity="0.44"/><rect x="150" y="341" width="1" height="1" fill="#a8b0bc" fill-opacity="0.43"/><rect x="71" y="303" width="1" height="1" fill="#a8b0bc" fill-opacity="0.31"/><rect x="157" y="276" width="1" height="1" fill="#d0d8e4" fill-opacity="0.42"/><rect x="161" y="38" width="1" height="1" fill="#a8b0bc" fill-opacity="0.21"/><rect x="243" y="340" width="1" height="1" fill="#a8b0bc" fill-opacity="0.30"/><circle cx="81.2" cy="276.1" r="0.9" fill="#e4eaf2" fill-opacity="0.63"/><rect x="33" y="85" width="1" height="1" fill="#a8b0bc" fill-opacity="0.21"/><rect x="169" y="317" width="1" height="1" fill="#a8b0bc" fill-opacity="0.43"/><rect x="248" y="217" width="1" height="1" fill="#a8b0bc" fill-opacity="0.28"/><rect x="70" y="173" width="1" height="1" fill="#d0d8e4" fill-opacity="0.49"/><rect x="96" y="86" width="1" height="1" fill="#d0d8e4" fill-opacity="0.58"/><rect x="206" y="240" width="1" height="1" fill="#a8b0bc" fill-opacity="0.43"/><rect x="142" y="73" width="1" height="1" fill="#a8b0bc" fill-opacity="0.26"/><rect x="146" y="254" width="1" height="1" fill="#a8b0bc" fill-opacity="0.37"/><rect x="231" y="383" width="1" height="1" fill="#d0d8e4" fill-opacity="0.35"/><rect x="150" y="320" width="1" height="1" fill="#a8b0bc" fill-opacity="0.42"/><rect x="151" y="383" width="1" height="1" fill="#d0d8e4" fill-opacity="0.61"/><rect x="185" y="305" width="1" height="1" fill="#a8b0bc" fill-opacity="0.40"/><rect x="250" y="182" width="1" height="1" fill="#a8b0bc" fill-opacity="0.40"/><rect x="140" y="141" width="1" height="1" fill="#a8b0bc" fill-opacity="0.21"/><rect x="179" y="248" width="1" height="1" fill="#a8b0bc" fill-opacity="0.26"/><circle cx="257.9" cy="260.9" r="0.9" fill="#e4eaf2" fill-opacity="0.68"/><circle cx="98.8" cy="106.0" r="0.9" fill="#e4eaf2" fill-opacity="0.79"/><rect x="33" y="161" width="1" height="1" fill="#a8b0bc" fill-opacity="0.28"/><rect x="248" y="217" width="1" height="1" fill="#a8b0bc" fill-opacity="0.42"/><rect x="234" y="356" width="1" height="1" fill="#a8b0bc" fill-opacity="0.40"/><rect x="106" y="364" width="1" height="1" fill="#a8b0bc" fill-opacity="0.26"/><rect x="147" y="122" width="1" height="1" fill="#a8b0bc" fill-opacity="0.24"/><rect x="228" y="75" width="1" height="1" fill="#a8b0bc" fill-opacity="0.41"/><rect x="71" y="166" width="1" height="1" fill="#a8b0bc" fill-opacity="0.36"/><circle cx="63.0" cy="19.8" r="0.9" fill="#e4eaf2" fill-opacity="0.79"/><rect x="228" y="159" width="1" height="1" fill="#a8b0bc" fill-opacity="0.21"/><circle cx="176.5" cy="319.5" r="0.9" fill="#e4eaf2" fill-opacity="0.77"/><rect x="143" y="178" width="1" height="1" fill="#a8b0bc" fill-opacity="0.33"/><rect x="51" y="283" width="1" height="1" fill="#a8b0bc" fill-opacity="0.23"/><rect x="152" y="6" width="1" height="1" fill="#a8b0bc" fill-opacity="0.22"/><rect x="129" y="196" width="1" height="1" fill="#a8b0bc" fill-opacity="0.30"/><rect x="143" y="249" width="1" height="1" fill="#a8b0bc" fill-opacity="0.42"/><rect x="202" y="34" width="1" height="1" fill="#a8b0bc" fill-opacity="0.29"/><rect x="201" y="106" width="1" height="1" fill="#a8b0bc" fill-opacity="0.33"/><rect x="228" y="232" width="1" height="1" fill="#a8b0bc" fill-opacity="0.43"/><rect x="240" y="122" width="1" height="1" fill="#a8b0bc" fill-opacity="0.39"/><rect x="103" y="229" width="1" height="1" fill="#a8b0bc" fill-opacity="0.41"/><rect x="110" y="362" width="1" height="1" fill="#a8b0bc" fill-opacity="0.26"/><rect x="90" y="149" width="1" height="1" fill="#a8b0bc" fill-opacity="0.37"/><rect x="216" y="266" width="1" height="1" fill="#d0d8e4" fill-opacity="0.42"/><rect x="98" y="379" width="1" height="1" fill="#d0d8e4" fill-opacity="0.60"/><rect x="90" y="20" width="1" height="1" fill="#a8b0bc" fill-opacity="0.38"/><rect x="8" y="312" width="1" height="1" fill="#a8b0bc" fill-opacity="0.31"/><rect x="7" y="28" width="1" height="1" fill="#a8b0bc" fill-opacity="0.34"/><rect x="108" y="134" width="1" height="1" fill="#a8b0bc" fill-opacity="0.42"/><rect x="54" y="164" width="1" height="1" fill="#a8b0bc" fill-opacity="0.36"/><rect x="51" y="129" width="1" height="1" fill="#a8b0bc" fill-opacity="0.25"/><rect x="79" y="276" width="1" height="1" fill="#a8b0bc" fill-opacity="0.36"/><rect x="40" y="10" width="1" height="1" fill="#a8b0bc" fill-opacity="0.36"/><rect x="109" y="82" width="1" height="1" fill="#a8b0bc" fill-opacity="0.41"/><rect x="35" y="52" width="1" height="1" fill="#a8b0bc" fill-opacity="0.28"/><rect x="54" y="300" width="1" height="1" fill="#a8b0bc" fill-opacity="0.22"/><rect x="146" y="88" width="1" height="1" fill="#a8b0bc" fill-opacity="0.37"/><rect x="64" y="390" width="1" height="1" fill="#a8b0bc" fill-opacity="0.26"/><rect x="95" y="269" width="1" height="1" fill="#a8b0bc" fill-opacity="0.29"/><rect x="204" y="375" width="1" height="1" fill="#a8b0bc" fill-opacity="0.24"/><rect x="69" y="85" width="1" height="1" fill="#a8b0bc" fill-opacity="0.40"/><rect x="241" y="232" width="1" height="1" fill="#a8b0bc" fill-opacity="0.41"/><rect x="146" y="280" width="1" height="1" fill="#a8b0bc" fill-opacity="0.36"/><rect x="32" y="300" width="1" height="1" fill="#a8b0bc" fill-opacity="0.30"/><rect x="57" y="214" width="1" height="1" fill="#d0d8e4" fill-opacity="0.62"/><rect x="226" y="277" width="1" height="1" fill="#d0d8e4" fill-opacity="0.59"/><rect x="57" y="166" width="1" height="1" fill="#a8b0bc" fill-opacity="0.42"/><rect x="231" y="384" width="1" height="1" fill="#a8b0bc" fill-opacity="0.45"/><rect x="139" y="68" width="1" height="1" fill="#a8b0bc" fill-opacity="0.44"/><rect x="110" y="178" width="1" height="1" fill="#a8b0bc" fill-opacity="0.29"/><rect x="210" y="341" width="1" height="1" fill="#a8b0bc" fill-opacity="0.23"/><rect x="114" y="12" width="1" height="1" fill="#a8b0bc" fill-opacity="0.20"/><circle cx="204.1" cy="239.0" r="0.9" fill="#e4eaf2" fill-opacity="0.67"/><rect x="204" y="50" width="1" height="1" fill="#a8b0bc" fill-opacity="0.35"/><rect x="26" y="128" width="1" height="1" fill="#d0d8e4" fill-opacity="0.44"/><rect x="183" y="385" width="1" height="1" fill="#d0d8e4" fill-opacity="0.43"/><rect x="40" y="56" width="1" height="1" fill="#a8b0bc" fill-opacity="0.27"/><rect x="246" y="253" width="1" height="1" fill="#a8b0bc" fill-opacity="0.36"/><rect x="258" y="168" width="1" height="1" fill="#a8b0bc" fill-opacity="0.42"/><rect x="238" y="175" width="1" height="1" fill="#a8b0bc" fill-opacity="0.44"/><rect x="129" y="359" width="1" height="1" fill="#d0d8e4" fill-opacity="0.65"/><rect x="139" y="234" width="1" height="1" fill="#a8b0bc" fill-opacity="0.34"/><rect x="255" y="275" width="1" height="1" fill="#a8b0bc" fill-opacity="0.25"/><rect x="260" y="116" width="1" height="1" fill="#a8b0bc" fill-opacity="0.27"/><rect x="247" y="332" width="1" height="1" fill="#a8b0bc" fill-opacity="0.38"/><rect x="177" y="39" width="1" height="1" fill="#a8b0bc" fill-opacity="0.36"/><rect x="202" y="214" width="1" height="1" fill="#a8b0bc" fill-opacity="0.27"/><rect x="64" y="238" width="1" height="1" fill="#a8b0bc" fill-opacity="0.21"/><circle cx="211.7" cy="365.3" r="0.9" fill="#e4eaf2" fill-opacity="0.74"/><rect x="107" y="230" width="1" height="1" fill="#a8b0bc" fill-opacity="0.37"/><rect x="124" y="41" width="1" height="1" fill="#d0d8e4" fill-opacity="0.45"/><rect x="187" y="123" width="1" height="1" fill="#a8b0bc" fill-opacity="0.22"/><rect x="218" y="119" width="1" height="1" fill="#a8b0bc" fill-opacity="0.25"/><rect x="155" y="132" width="1" height="1" fill="#a8b0bc" fill-opacity="0.38"/><rect x="91" y="262" width="1" height="1" fill="#a8b0bc" fill-opacity="0.31"/><rect x="45" y="370" width="1" height="1" fill="#a8b0bc" fill-opacity="0.27"/><rect x="226" y="181" width="1" height="1" fill="#a8b0bc" fill-opacity="0.29"/><rect x="82" y="225" width="1" height="1" fill="#d0d8e4" fill-opacity="0.51"/><rect x="253" y="83" width="1" height="1" fill="#d0d8e4" fill-opacity="0.55"/><rect x="168" y="0" width="1" height="1" fill="#d0d8e4" fill-opacity="0.36"/><rect x="188" y="17" width="1" height="1" fill="#a8b0bc" fill-opacity="0.23"/><rect x="96" y="62" width="1" height="1" fill="#a8b0bc" fill-opacity="0.27"/><rect x="105" y="73" width="1" height="1" fill="#d0d8e4" fill-opacity="0.57"/><rect x="244" y="174" width="1" height="1" fill="#a8b0bc" fill-opacity="0.22"/><rect x="168" y="254" width="1" height="1" fill="#a8b0bc" fill-opacity="0.42"/><rect x="178" y="269" width="1" height="1" fill="#a8b0bc" fill-opacity="0.23"/><rect x="157" y="350" width="1" height="1" fill="#a8b0bc" fill-opacity="0.45"/><rect x="200" y="258" width="1" height="1" fill="#a8b0bc" fill-opacity="0.40"/><rect x="275" y="56" width="1" height="1" fill="#a8b0bc" fill-opacity="0.26"/><rect x="154" y="153" width="1" height="1" fill="#d0d8e4" fill-opacity="0.59"/><rect x="2" y="285" width="1" height="1" fill="#a8b0bc" fill-opacity="0.26"/><rect x="201" y="33" width="1" height="1" fill="#a8b0bc" fill-opacity="0.35"/><rect x="27" y="248" width="1" height="1" fill="#a8b0bc" fill-opacity="0.37"/><rect x="34" y="242" width="1" height="1" fill="#a8b0bc" fill-opacity="0.31"/><rect x="46" y="171" width="1" height="1" fill="#d0d8e4" fill-opacity="0.40"/><rect x="89" y="279" width="1" height="1" fill="#a8b0bc" fill-opacity="0.27"/><rect x="162" y="80" width="1" height="1" fill="#a8b0bc" fill-opacity="0.39"/><rect x="96" y="98" width="1" height="1" fill="#d0d8e4" fill-opacity="0.63"/><rect x="108" y="189" width="1" height="1" fill="#a8b0bc" fill-opacity="0.41"/><rect x="44" y="74" width="1" height="1" fill="#d0d8e4" fill-opacity="0.54"/><rect x="194" y="125" width="1" height="1" fill="#a8b0bc" fill-opacity="0.41"/><rect x="217" y="310" width="1" height="1" fill="#a8b0bc" fill-opacity="0.42"/><rect x="105" y="281" width="1" height="1" fill="#a8b0bc" fill-opacity="0.38"/><rect x="140" y="86" width="1" height="1" fill="#d0d8e4" fill-opacity="0.37"/><rect x="214" y="116" width="1" height="1" fill="#a8b0bc" fill-opacity="0.31"/><rect x="212" y="270" width="1" height="1" fill="#a8b0bc" fill-opacity="0.43"/><rect x="210" y="118" width="1" height="1" fill="#d0d8e4" fill-opacity="0.38"/><rect x="141" y="350" width="1" height="1" fill="#a8b0bc" fill-opacity="0.41"/><rect x="259" y="205" width="1" height="1" fill="#d0d8e4" fill-opacity="0.54"/><rect x="222" y="251" width="1" height="1" fill="#a8b0bc" fill-opacity="0.43"/><rect x="23" y="365" width="1" height="1" fill="#d0d8e4" fill-opacity="0.47"/><rect x="80" y="151" width="1" height="1" fill="#a8b0bc" fill-opacity="0.26"/><rect x="142" y="230" width="1" height="1" fill="#d0d8e4" fill-opacity="0.52"/><rect x="148" y="253" width="1" height="1" fill="#a8b0bc" fill-opacity="0.41"/><rect x="275" y="254" width="1" height="1" fill="#a8b0bc" fill-opacity="0.31"/><rect x="109" y="376" width="1" height="1" fill="#a8b0bc" fill-opacity="0.29"/><rect x="56" y="245" width="1" height="1" fill="#d0d8e4" fill-opacity="0.54"/><circle cx="49.5" cy="285.8" r="0.9" fill="#e4eaf2" fill-opacity="0.83"/><rect x="167" y="114" width="1" height="1" fill="#a8b0bc" fill-opacity="0.36"/><rect x="140" y="241" width="1" height="1" fill="#d0d8e4" fill-opacity="0.39"/><circle cx="115.2" cy="245.4" r="0.9" fill="#e4eaf2" fill-opacity="0.84"/><rect x="173" y="202" width="1" height="1" fill="#a8b0bc" fill-opacity="0.40"/><rect x="178" y="307" width="1" height="1" fill="#a8b0bc" fill-opacity="0.35"/><rect x="174" y="219" width="1" height="1" fill="#a8b0bc" fill-opacity="0.35"/><rect x="266" y="320" width="1" height="1" fill="#a8b0bc" fill-opacity="0.25"/><circle cx="184.7" cy="116.2" r="0.9" fill="#e4eaf2" fill-opacity="0.55"/><rect x="240" y="72" width="1" height="1" fill="#d0d8e4" fill-opacity="0.55"/><circle cx="64.4" cy="181.4" r="0.9" fill="#e4eaf2" fill-opacity="0.60"/><rect x="149" y="143" width="1" height="1" fill="#a8b0bc" fill-opacity="0.21"/><rect x="201" y="85" width="1" height="1" fill="#a8b0bc" fill-opacity="0.25"/><rect x="132" y="314" width="1" height="1" fill="#a8b0bc" fill-opacity="0.43"/><rect x="184" y="138" width="1" height="1" fill="#a8b0bc" fill-opacity="0.29"/><rect x="209" y="74" width="1" height="1" fill="#a8b0bc" fill-opacity="0.30"/><rect x="111" y="331" width="1" height="1" fill="#a8b0bc" fill-opacity="0.25"/><rect x="255" y="247" width="1" height="1" fill="#a8b0bc" fill-opacity="0.38"/><rect x="212" y="365" width="1" height="1" fill="#a8b0bc" fill-opacity="0.22"/><rect x="43" y="212" width="1" height="1" fill="#a8b0bc" fill-opacity="0.25"/><rect x="64" y="278" width="1" height="1" fill="#d0d8e4" fill-opacity="0.39"/><rect x="133" y="207" width="1" height="1" fill="#a8b0bc" fill-opacity="0.36"/><rect x="212" y="312" width="1" height="1" fill="#a8b0bc" fill-opacity="0.31"/><rect x="90" y="357" width="1" height="1" fill="#a8b0bc" fill-opacity="0.43"/><rect x="246" y="209" width="1" height="1" fill="#a8b0bc" fill-opacity="0.23"/><rect x="63" y="195" width="1" height="1" fill="#a8b0bc" fill-opacity="0.22"/><circle cx="14.6" cy="47.5" r="0.9" fill="#e4eaf2" fill-opacity="0.85"/><rect x="270" y="191" width="1" height="1" fill="#a8b0bc" fill-opacity="0.23"/><rect x="46" y="302" width="1" height="1" fill="#d0d8e4" fill-opacity="0.41"/><rect x="30" y="290" width="1" height="1" fill="#a8b0bc" fill-opacity="0.43"/><rect x="214" y="90" width="1" height="1" fill="#a8b0bc" fill-opacity="0.20"/><rect x="70" y="151" width="1" height="1" fill="#d0d8e4" fill-opacity="0.63"/><rect x="233" y="222" width="1" height="1" fill="#a8b0bc" fill-opacity="0.28"/><rect x="94" y="265" width="1" height="1" fill="#a8b0bc" fill-opacity="0.21"/><rect x="100" y="213" width="1" height="1" fill="#a8b0bc" fill-opacity="0.39"/><rect x="267" y="97" width="1" height="1" fill="#d0d8e4" fill-opacity="0.37"/><rect x="92" y="300" width="1" height="1" fill="#a8b0bc" fill-opacity="0.33"/><rect x="170" y="249" width="1" height="1" fill="#d0d8e4" fill-opacity="0.53"/><rect x="109" y="117" width="1" height="1" fill="#d0d8e4" fill-opacity="0.62"/><rect x="75" y="181" width="1" height="1" fill="#d0d8e4" fill-opacity="0.60"/><rect x="219" y="231" width="1" height="1" fill="#a8b0bc" fill-opacity="0.21"/><rect x="44" y="298" width="1" height="1" fill="#d0d8e4" fill-opacity="0.54"/></g><circle cx="22" cy="157.7" r="10" fill="url(#sg)"/><circle cx="48.8" cy="173" r="8.5" fill="url(#sg)"/><circle cx="59" cy="128.7" r="8.5" fill="url(#sg)"/><circle cx="72" cy="118" r="6" fill="url(#sg)"/><circle cx="82.5" cy="154" r="8" fill="url(#sg)"/><circle cx="83" cy="135.7" r="6" fill="url(#sg)"/><circle cx="55.4" cy="110" r="4" fill="url(#sg)"/><circle cx="52.8" cy="112.6" r="4" fill="url(#sg)"/><circle cx="71.3" cy="79.4" r="5" fill="url(#sg)"/><circle cx="30.8" cy="115.8" r="3" fill="url(#sg)"/><circle cx="20" cy="140" r="3" fill="url(#sg)"/><circle cx="170" cy="23" r="3.5" fill="url(#sg)"/><circle cx="4.7" cy="229.5" r="4" fill="url(#sg)"/><circle cx="97" cy="129" r="3" fill="url(#sg)"/><defs><linearGradient id="m1g" x1="0" x2="1" y1="0.15" y2="0"><stop offset="0" stop-color="#342c24"/><stop offset="0.3" stop-color="#5e5040"/><stop offset="0.7" stop-color="#857460"/><stop offset="1" stop-color="#a49480"/></linearGradient><filter id="tx1" x="0" y="0" width="100%" height="100%"><feTurbulence type="fractalNoise" baseFrequency="0.2" numOctaves="2" seed="9"/><feColorMatrix values="0 0 0 0 0  0 0 0 0 0  0 0 0 0 0  0 0 0 -2 1.1"/><feComposite in2="SourceGraphic" operator="in"/></filter><clipPath id="m1c"><path d="M231 324.5 A25.5 25.5 0 0 1 231 375.5 A5 25.5 0 0 1 231 324.5Z"/></clipPath></defs><path d="M229 323 A27 27 0 0 1 229 377 A8 27 0 0 1 229 323Z" fill="#15171b" fill-opacity="0.6" filter="url(#bl3)"/><g clip-path="url(#m1c)"><rect x="225" y="324" width="32" height="52" fill="url(#m1g)"/><rect x="225" y="324" width="32" height="52" fill="#2a241e" fill-opacity="0.28" filter="url(#tx1)"/><g fill="#3e352c" fill-opacity="0.35" filter="url(#bl3)"><ellipse cx="240" cy="338" rx="4" ry="5"/><ellipse cx="238" cy="352" rx="5" ry="4"/><ellipse cx="248" cy="358" rx="2.5" ry="3"/><ellipse cx="236" cy="367" rx="3" ry="3"/></g><path d="M231 324.5 A25.5 25.5 0 0 1 231 375.5" fill="none" stroke="#a89880" stroke-opacity="0.5" stroke-width="1.5"/></g></svg><!--/SF--></div>
</div>
</div>
<!-- doc2 -->
<div id="doc2" class="a"><div class="a" style="left:-1px;top:-1px;width:178px;height:212px">
<div class="a" style="left:1px;top:1px;width:176px;height:17px;background:linear-gradient(#eef3f7,#e2e9ef);border-radius:4px 4px 0 0"></div>
<div class="a" style="left:1px;top:18px;width:176px;height:194px;background:linear-gradient(90deg,#dfe7ee,#eef3f7)"></div>
<div class="a" style="left:6.5px;top:8px;width:9px;height:9px;background:#2a5d9c;border-radius:1px"></div>
<div class="a" style="left:6.5px;top:6px;width:5px;height:3px;background:#3a72b4;border-radius:1px 1px 0 0"></div>
<div class="t" style="left:8.5px;top:10.5px;font-size:4.5px;color:#cfe0f8;font-weight:bold">Ps</div>
<div class="t" style="left:19.5px;top:9.5px;font-size:7.1px;color:#333">lune du 11tv001 b.jpg @ 20...</div>
<div class="a" style="left:117.5px;top:8px;width:17px;height:8.5px;border:1px solid #a9b6c2;border-radius:2px;background:linear-gradient(#f4f7fa,#dde5ec)"></div>
<div class="a" style="left:136px;top:8px;width:17px;height:8.5px;border:1px solid #a9b6c2;border-radius:2px;background:linear-gradient(#f4f7fa,#dde5ec)"></div>
<div class="a" style="left:155px;top:8px;width:17px;height:8.5px;border:1px solid #a9b6c2;border-radius:2px;background:linear-gradient(#f4f7fa,#dde5ec)"></div>
<div class="a" style="left:122.5px;top:11.5px;width:7px;height:3px;border:1px solid #555;background:#fff"></div>
<div class="a" style="left:141.5px;top:9.5px;width:6px;height:5px;border:1px solid #555"></div>
<svg class="a" style="left:160.5px;top:9.5px" width="7" height="6"><path d="M1 0.5 L6 5.5 M6 0.5 L1 5.5" stroke="#666" stroke-width="1.3"/></svg>
<div class="a" style="left:6px;top:18px;width:158px;height:10px;background:#fdfdfd"></div>
<div class="a" style="left:6px;top:28px;width:8px;height:184px;background:#fdfdfd"></div>
<svg class="a" style="left:0;top:0" width="178" height="212"><rect x="18.0" y="25.5" width="1" height="2.5" fill="#444"/><rect x="35.4" y="25.5" width="1" height="2.5" fill="#444"/><rect x="52.8" y="25.5" width="1" height="2.5" fill="#444"/><rect x="70.2" y="25.5" width="1" height="2.5" fill="#444"/><rect x="87.6" y="25.5" width="1" height="2.5" fill="#444"/><rect x="105.0" y="25.5" width="1" height="2.5" fill="#444"/><rect x="122.4" y="18" width="1" height="10" fill="#333"/><text x="123.4" y="24" font-size="6" font-family="Liberation Sans" fill="#222">2</text><rect x="139.8" y="25.5" width="1" height="2.5" fill="#444"/><rect x="157.2" y="25.5" width="1" height="2.5" fill="#444"/><rect x="11.5" y="41.0" width="2.5" height="1" fill="#444"/><rect x="6" y="58.4" width="8" height="1" fill="#333"/><text x="7" y="64.9" font-size="6" font-family="Liberation Sans" fill="#222">2</text><rect x="11.5" y="75.8" width="2.5" height="1" fill="#444"/><rect x="11.5" y="93.2" width="2.5" height="1" fill="#444"/><rect x="11.5" y="110.6" width="2.5" height="1" fill="#444"/><rect x="11.5" y="128.0" width="2.5" height="1" fill="#444"/><rect x="11.5" y="145.4" width="2.5" height="1" fill="#444"/><rect x="11.5" y="162.8" width="2.5" height="1" fill="#444"/><rect x="11.5" y="180.2" width="2.5" height="1" fill="#444"/><rect x="11.5" y="197.6" width="2.5" height="1" fill="#444"/><rect x="11.5" y="215.0" width="2.5" height="1" fill="#444"/><rect x="11.5" y="232.4" width="2.5" height="1" fill="#444"/></svg>
<div class="a" style="left:164px;top:18px;width:9px;height:194px;background:#eef0f2;border-left:1px solid #e0e0e0"></div>
<svg class="a" style="left:166px;top:22px" width="6" height="5"><path d="M3 1 L5 4 H1Z" fill="#555"/></svg>
<div class="a" style="left:165px;top:104.5px;width:8px;height:52px;border:1px solid #a0a8b0;border-radius:2px;background:linear-gradient(90deg,#e4e8ec,#f8f9fa,#dde2e6)"></div>
<div class="a" style="left:167.5px;top:128px;width:3px;height:5px;background:repeating-linear-gradient(#777 0 1px,transparent 1px 2px)"></div>
<div class="a" style="left:14px;top:28px;width:150px;height:184px;background:#000;overflow:hidden"><svg width="150" height="184" style="position:absolute;left:0;top:0"><defs>
<linearGradient id="mg2" x1="0" x2="1" y1="0.1" y2="0"><stop offset="0" stop-color="#4a4038"/><stop offset="0.35" stop-color="#7e7162"/><stop offset="0.75" stop-color="#9a8e7c"/><stop offset="1" stop-color="#aea290"/></linearGradient>
<linearGradient id="tg" gradientUnits="userSpaceOnUse" x1="53" y1="124" x2="78" y2="128"><stop offset="0" stop-color="#000" stop-opacity="1"/><stop offset="0.4" stop-color="#000" stop-opacity="0.55"/><stop offset="1" stop-color="#000" stop-opacity="0"/></linearGradient>
<filter id="b2" x="-30%" y="-30%" width="160%" height="160%"><feGaussianBlur stdDeviation="2.5"/></filter>
<filter id="b1"><feGaussianBlur stdDeviation="0.7"/></filter>
<filter id="tx" x="0" y="0" width="100%" height="100%"><feTurbulence type="fractalNoise" baseFrequency="0.12" numOctaves="2" seed="3"/><feColorMatrix values="0 0 0 0 0  0 0 0 0 0  0 0 0 0 0  0 0 0 -2 1.1"/><feComposite in2="SourceGraphic" operator="in"/></filter>
<clipPath id="mc2"><circle cx="60" cy="124.5" r="53.5"/></clipPath></defs>
<g clip-path="url(#mc2)" filter="url(#b1)">
<rect x="45" y="65" width="70" height="120" fill="url(#mg2)"/>
<rect x="40" y="65" width="80" height="120" fill="#3a342e" fill-opacity="0.35" filter="url(#tx)"/>
<g fill="#3e362e" fill-opacity="0.6" filter="url(#b2)"><ellipse cx="76" cy="100" rx="8" ry="11"/><ellipse cx="70" cy="126" rx="10" ry="8"/><ellipse cx="95" cy="118" rx="5" ry="8"/><ellipse cx="88" cy="146" rx="7" ry="6"/><ellipse cx="99" cy="95" rx="4" ry="5"/><ellipse cx="66" cy="152" rx="6" ry="6"/><ellipse cx="84" cy="112" rx="4" ry="4"/></g>
<rect x="0" y="65" width="120" height="120" fill="url(#tg)"/>
</g>
</svg></div>
</div>
</div>
<!-- dock -->
<div class="a dk" style="left:587px;top:47px;width:213px;height:10px"></div>
<div class="a dk" style="left:587px;top:57px;width:20px;height:143.5px"></div>
<div class="a dk" style="left:605px;top:57px;width:195px;height:424px"></div>
<div class="a" style="left:589.5px;top:58px;width:16.5px;height:25.5px;background:#ececec;border-radius:1px"></div>
<div class="a" style="left:589.5px;top:58px;width:16.5px;height:4px;background:linear-gradient(#f6f6f6,#d4d4d4)"></div>
<div class="a" style="left:589.5px;top:86.5px;width:16.5px;height:36.0px;background:#ececec;border-radius:1px"></div>
<div class="a" style="left:589.5px;top:86.5px;width:16.5px;height:4px;background:linear-gradient(#f6f6f6,#d4d4d4)"></div>
<div class="a" style="left:589.5px;top:127px;width:16.5px;height:40.5px;background:#ececec;border-radius:1px"></div>
<div class="a" style="left:589.5px;top:127px;width:16.5px;height:4px;background:linear-gradient(#f6f6f6,#d4d4d4)"></div>
<div class="a" style="left:589.5px;top:172px;width:16.5px;height:26.5px;background:#ececec;border-radius:1px"></div>
<div class="a" style="left:589.5px;top:172px;width:16.5px;height:4px;background:linear-gradient(#f6f6f6,#d4d4d4)"></div>
<svg class="a" style="left:591.5px;top:66px" width="12" height="12" viewBox="0 0 12 12"><path d="M2 2 L10 10 M10 2 L2 10" stroke="#111" stroke-width="1.6"/><circle cx="2.5" cy="10" r="1.6" fill="#111"/><circle cx="9.5" cy="10" r="1.6" fill="#111"/></svg>
<svg class="a" style="left:591.5px;top:95px" width="12" height="12" viewBox="0 0 12 12"><path d="M3 1v6h6v-6M6 7v3" stroke="#111" stroke-width="1.3" fill="none"/><rect x="4" y="9" width="4" height="3" fill="#111"/></svg>
<svg class="a" style="left:591.5px;top:108px" width="12" height="12" viewBox="0 0 12 12"><rect x="2" y="1" width="8" height="4" fill="none" stroke="#222"/><rect x="2" y="6" width="8" height="5" fill="#555"/><path d="M3 8h6" stroke="#ddd"/></svg>
<svg class="a" style="left:591.5px;top:134px" width="12" height="12" viewBox="0 0 12 12"><path d="M1 11 L4.5 1 L8 11 M2.5 7h4" stroke="#111" stroke-width="1.2" fill="none"/><path d="M10 1v11" stroke="#111"/></svg>
<svg class="a" style="left:591.5px;top:150px" width="12" height="12" viewBox="0 0 12 12"><path d="M6 1v11 M9 1v11 M6 1h4" stroke="#111" stroke-width="1.1" fill="none"/><circle cx="5" cy="4" r="3" fill="#111"/></svg>
<svg class="a" style="left:591.5px;top:181px" width="12" height="12" viewBox="0 0 12 12"><rect x="1.5" y="2.5" width="9" height="8" fill="#f4f4f4" stroke="#333"/><rect x="3" y="6" width="6" height="3" fill="#555"/><rect x="6" y="3.5" width="3" height="2" fill="#555"/></svg>
<div class="a" style="left:590px;top:49px;width:1px;height:7px;background:#888"></div><div class="a" style="left:611px;top:49px;width:1px;height:7px;background:#888"></div>
<div class="t" style="left:598px;top:49.5px;font-size:6px;color:#eee;letter-spacing:-1.5px">◂◂</div>
<div class="t" style="left:789px;top:49.5px;font-size:6px;color:#eee;letter-spacing:-1.5px">▸▸</div>
<div class="a" style="left:608px;top:57.5px;width:189px;height:21.0px;background:#ececec"></div>
<div class="a" style="left:608px;top:57.5px;width:189px;height:5px;background:linear-gradient(#f2f2f2,#e4e4e4)"></div>
<svg class="a" style="left:608px;top:62.5px" width="189" height="12"><defs><linearGradient id="tsg" x1="0" y1="0" x2="0" y2="1"><stop offset="0" stop-color="#dedede"/><stop offset="1" stop-color="#c4c4c4"/></linearGradient></defs><path d="M0 0 H175 L189 12 H0Z" fill="url(#tsg)"/></svg>
<div class="a" style="left:611px;top:64.0px;width:42px;height:10px;background:linear-gradient(#d8d8d8,#c2c2c2);border:1px solid #a8a8a8;border-bottom:none;border-radius:2px 2px 0 0"></div>
<div class="t" style="left:615px;top:66.5px;font-size:6.9px;color:#333">Navigation</div>
<div class="a" style="left:653px;top:62.5px;width:56px;height:16.0px;background:linear-gradient(#f6f6f6,#ececec);border:1px solid #bdbdbd;border-bottom:none;border-radius:2px 2px 0 0"></div>
<div class="t" style="left:657px;top:66.5px;font-size:6.9px;color:#333">Histogramme <span style="color:#777">×</span></div>
<div class="a" style="left:709px;top:64.0px;width:48.5px;height:10px;background:linear-gradient(#d8d8d8,#c2c2c2);border:1px solid #a8a8a8;border-bottom:none;border-radius:2px 2px 0 0"></div>
<div class="t" style="left:713px;top:66.5px;font-size:6.9px;color:#333">Informations</div>
<div class="a" style="left:782px;top:59.5px;width:5px;height:3px;border:1px solid #666;border-top-width:1.5px"></div>
<div class="t" style="left:790.5px;top:57.5px;font-size:7px;color:#666">×</div>
<svg class="a" style="left:786px;top:70.5px" width="10" height="6"><path d="M0 2 h3 l-1.5 2z" fill="#222"/><path d="M4 0.5h6M4 2.5h6M4 4.5h6" stroke="#444" stroke-width="1"/></svg>
<div class="a" style="left:608px;top:80.5px;width:189px;height:21.5px;background:#ececec"></div>
<div class="a" style="left:608px;top:80.5px;width:189px;height:5px;background:linear-gradient(#f2f2f2,#e4e4e4)"></div>
<svg class="a" style="left:608px;top:85.5px" width="189" height="12"><defs><linearGradient id="tsg" x1="0" y1="0" x2="0" y2="1"><stop offset="0" stop-color="#dedede"/><stop offset="1" stop-color="#c4c4c4"/></linearGradient></defs><path d="M0 0 H175 L189 12 H0Z" fill="url(#tsg)"/></svg>
<div class="a" style="left:611px;top:85.5px;width:34px;height:16.5px;background:linear-gradient(#f6f6f6,#ececec);border:1px solid #bdbdbd;border-bottom:none;border-radius:2px 2px 0 0"></div>
<div class="t" style="left:615px;top:89.5px;font-size:6.9px;color:#333">Scripts <span style="color:#777">×</span></div>
<div class="a" style="left:645px;top:87.0px;width:41.5px;height:10px;background:linear-gradient(#d8d8d8,#c2c2c2);border:1px solid #a8a8a8;border-bottom:none;border-radius:2px 2px 0 0"></div>
<div class="t" style="left:649px;top:89.5px;font-size:6.9px;color:#333">Historique</div>
<div class="a" style="left:782px;top:82.5px;width:5px;height:3px;border:1px solid #666;border-top-width:1.5px"></div>
<div class="t" style="left:790.5px;top:80.5px;font-size:7px;color:#666">×</div>
<svg class="a" style="left:786px;top:93.5px" width="10" height="6"><path d="M0 2 h3 l-1.5 2z" fill="#222"/><path d="M4 0.5h6M4 2.5h6M4 4.5h6" stroke="#444" stroke-width="1"/></svg>
<div class="a" style="left:608px;top:103.5px;width:189px;height:20.5px;background:#ececec"></div>
<div class="a" style="left:608px;top:103.5px;width:189px;height:5px;background:linear-gradient(#f2f2f2,#e4e4e4)"></div>
<svg class="a" style="left:608px;top:108.5px" width="189" height="12"><defs><linearGradient id="tsg" x1="0" y1="0" x2="0" y2="1"><stop offset="0" stop-color="#dedede"/><stop offset="1" stop-color="#c4c4c4"/></linearGradient></defs><path d="M0 0 H175 L189 12 H0Z" fill="url(#tsg)"/></svg>
<div class="a" style="left:611px;top:108.5px;width:38.5px;height:15.5px;background:linear-gradient(#f6f6f6,#ececec);border:1px solid #bdbdbd;border-bottom:none;border-radius:2px 2px 0 0"></div>
<div class="t" style="left:615px;top:112.5px;font-size:6.9px;color:#333">Couleur <span style="color:#777">×</span></div>
<div class="a" style="left:649.5px;top:110.0px;width:36.5px;height:10px;background:linear-gradient(#d8d8d8,#c2c2c2);border:1px solid #a8a8a8;border-bottom:none;border-radius:2px 2px 0 0"></div>
<div class="t" style="left:653.5px;top:112.5px;font-size:6.9px;color:#333">Nuancier</div>
<div class="a" style="left:686.0px;top:110.0px;width:32px;height:10px;background:linear-gradient(#d8d8d8,#c2c2c2);border:1px solid #a8a8a8;border-bottom:none;border-radius:2px 2px 0 0"></div>
<div class="t" style="left:690.0px;top:112.5px;font-size:6.9px;color:#333">Styles</div>
<div class="a" style="left:782px;top:105.5px;width:5px;height:3px;border:1px solid #666;border-top-width:1.5px"></div>
<div class="t" style="left:790.5px;top:103.5px;font-size:7px;color:#666">×</div>
<svg class="a" style="left:786px;top:116.5px" width="10" height="6"><path d="M0 2 h3 l-1.5 2z" fill="#222"/><path d="M4 0.5h6M4 2.5h6M4 4.5h6" stroke="#444" stroke-width="1"/></svg>
<div class="a" style="left:608px;top:126px;width:189px;height:350.5px;background:#ececec"></div>
<div class="a" style="left:608px;top:126px;width:189px;height:5px;background:linear-gradient(#f2f2f2,#e4e4e4)"></div>
<svg class="a" style="left:608px;top:131px" width="189" height="12"><defs><linearGradient id="tsg" x1="0" y1="0" x2="0" y2="1"><stop offset="0" stop-color="#dedede"/><stop offset="1" stop-color="#c4c4c4"/></linearGradient></defs><path d="M0 0 H175 L189 12 H0Z" fill="url(#tsg)"/></svg>
<div class="a" style="left:611px;top:131px;width:39px;height:345.5px;background:linear-gradient(#f6f6f6,#ececec);border:1px solid #bdbdbd;border-bottom:none;border-radius:2px 2px 0 0"></div>
<div class="t" style="left:615px;top:135px;font-size:6.9px;color:#333">Calques <span style="color:#777">×</span></div>
<div class="a" style="left:650px;top:132.5px;width:34px;height:10px;background:linear-gradient(#d8d8d8,#c2c2c2);border:1px solid #a8a8a8;border-bottom:none;border-radius:2px 2px 0 0"></div>
<div class="t" style="left:654px;top:135px;font-size:6.9px;color:#333">Couches</div>
<div class="a" style="left:684px;top:132.5px;width:34px;height:10px;background:linear-gradient(#d8d8d8,#c2c2c2);border:1px solid #a8a8a8;border-bottom:none;border-radius:2px 2px 0 0"></div>
<div class="t" style="left:688px;top:135px;font-size:6.9px;color:#333">Tracés</div>
<div class="a" style="left:782px;top:129px;width:5px;height:1px;background:#555"></div>
<div class="t" style="left:790.5px;top:126px;font-size:7px;color:#666">×</div>
<svg class="a" style="left:786px;top:139px" width="10" height="6"><path d="M0 2 h3 l-1.5 2z" fill="#222"/><path d="M4 0.5h6M4 2.5h6M4 4.5h6" stroke="#444" stroke-width="1"/></svg>
<div class="a" style="left:608px;top:142px;width:189px;height:334px;background:#ececec"></div>
<div class="a" style="left:610.5px;top:144px;width:82.5px;height:12.5px;background:#fff;border:1px solid #e2e2e2"></div>
<div class="t" style="left:613px;top:147.5px;font-size:6.3px;color:#222">Normal</div>
<svg class="a" style="left:686px;top:150px" width="5" height="3"><path d="M0 0h5l-2.5 3z" fill="#111"/></svg>
<div class="t" style="left:696px;top:147px;font-size:6.3px;color:#222">Opacité :</div>
<div class="a" style="left:722.5px;top:144px;width:22px;height:12px;background:#fff;border:1px solid #d4d4d4"></div>
<div class="t" style="left:725.5px;top:147.5px;font-size:6.2px;color:#222">100%</div>
<div class="a" style="left:744.5px;top:144px;width:10.5px;height:12px;background:linear-gradient(#f0f0f0,#dcdcdc);border:1px solid #c4c4c4"></div>
<svg class="a" style="left:748.5px;top:148px" width="3" height="4"><path d="M0 0 L3 2 L0 4z" fill="#555"/></svg>
<div class="a" style="left:722.5px;top:160.8px;width:22px;height:12px;background:#fff;border:1px solid #d4d4d4"></div>
<div class="t" style="left:725.5px;top:164.3px;font-size:6.2px;color:#222">100%</div>
<div class="a" style="left:744.5px;top:160.8px;width:10.5px;height:12px;background:linear-gradient(#f0f0f0,#dcdcdc);border:1px solid #c4c4c4"></div>
<svg class="a" style="left:748.5px;top:164.8px" width="3" height="4"><path d="M0 0 L3 2 L0 4z" fill="#555"/></svg>
<div class="a" style="left:608px;top:157.5px;width:189px;height:1px;background:#d0d0d0"></div>
<div class="t" style="left:612px;top:163px;font-size:6.3px;color:#222">Verrou :</div>
<div class="t" style="left:702px;top:163.5px;font-size:6.3px;color:#222">Fond :</div>
<div class="a" style="left:640px;top:161.5px;width:7px;height:8px;border:1px solid #555;background:#f6f6f6"></div>
<svg class="a" style="left:650px;top:161px" width="9" height="9"><path d="M1 8 L8 1" stroke="#333" stroke-width="1.5"/><path d="M1 8 l2 -1" stroke="#000" stroke-width="2"/></svg>
<svg class="a" style="left:660px;top:161px" width="9" height="9"><path d="M4.5 0v9M0 4.5h9M3 1.5l1.5-1.5 1.5 1.5M3 7.5l1.5 1.5 1.5-1.5" stroke="#222" stroke-width="1" fill="none"/></svg>
<svg class="a" style="left:671px;top:161px" width="8" height="9"><path d="M2 4 v-1.5 a2 2 0 0 1 4 0 v1.5" stroke="#222" fill="none"/><rect x="1" y="4" width="6" height="5" fill="#222"/></svg>
<div class="a" style="left:608px;top:174px;width:179px;height:290px;background:#ececec"></div>
<div class="a" style="left:787px;top:174px;width:9.5px;height:290px;background:#f0f0f0;border-left:1px solid #e4e4e4"></div>
<svg class="a" style="left:789px;top:178px" width="6" height="4"><path d="M3 0 L6 4 H0z" fill="#777"/></svg>
<div class="a" style="left:622.5px;top:174px;width:164.5px;height:54px;background:#3797f5"></div>
<div class="a" style="left:608px;top:228px;width:179px;height:1px;background:#c6c6c6"></div>
<div class="a" style="left:608px;top:283px;width:179px;height:1px;background:#c6c6c6"></div>
<div class="a" style="left:622px;top:174px;width:1px;height:109px;background:#c6c6c6"></div>
<div class="a" style="left:624px;top:175.5px;width:37px;height:52px;border:1.5px solid #444;background-color:#fff;background-image:linear-gradient(45deg,#cfcfcf 25%,transparent 25%,transparent 75%,#cfcfcf 75%),linear-gradient(45deg,#cfcfcf 25%,transparent 25%,transparent 75%,#cfcfcf 75%);background-size:4px 4px;background-position:0 0,2px 2px"></div>
<svg class="a" style="left:652px;top:215px" width="6" height="8"><path d="M1 0 L1 7 L5 4z" fill="#333"/></svg>
<div class="a" style="left:625px;top:230px;width:36px;height:50.5px;background:#29313b;overflow:hidden"><div class="a" style="left:-2px;top:6px;width:22px;height:24px;border-radius:50%;background:radial-gradient(rgba(80,150,200,0.55),rgba(60,120,170,0.25) 50%,transparent 72%)"></div><svg class="a" style="left:0;top:0" width="36" height="51"><g fill="#8ad0f0"><circle cx="5" cy="19" r="1.3"/><circle cx="10" cy="14" r="1.1"/><circle cx="12" cy="19" r="1.1"/><circle cx="8" cy="22" r="1"/><circle cx="12" cy="11" r="0.8"/></g><circle cx="30" cy="45" r="3" fill="#4a4a44" fill-opacity="0.6"/></svg></div>
<div class="t" style="left:666px;top:198px;font-size:6.4px;color:#fff;font-weight:bold">Calque 1</div>
<div class="t" style="left:666px;top:252.5px;font-size:6.4px;color:#222;font-style:italic">Arrière-plan</div>
<svg class="a" style="left:770.5px;top:251.5px" width="8" height="9"><path d="M2 4 v-1.5 a2 2 0 0 1 4 0 v1.5" stroke="#333" fill="none"/><rect x="1" y="4" width="6" height="4.5" fill="#fafafa" stroke="#333" stroke-width="0.8"/></svg>
<svg class="a" style="left:611px;top:197px" width="10" height="6"><path d="M0.5 3 Q5 -1 9.5 3 Q5 7 0.5 3z" fill="#222"/><circle cx="5" cy="3" r="1" fill="#fff"/></svg>
<svg class="a" style="left:611px;top:251.5px" width="10" height="6"><path d="M0.5 3 Q5 -1 9.5 3 Q5 7 0.5 3z" fill="#222"/><circle cx="5" cy="3" r="1" fill="#fff"/></svg>
<div class="a" style="left:608px;top:464px;width:189px;height:1px;background:#b8b8b8"></div>
<div class="a" style="left:608px;top:465px;width:189px;height:11.5px;background:#ececec"></div>
<svg class="a" style="left:670px;top:466px" width="120" height="10"><path d="M3 5 h8" stroke="#888" stroke-width="3"/><text x="20" y="8" font-size="8" font-style="italic" font-family="Liberation Serif" fill="#222">fx</text><rect x="37.5" y="1.5" width="8" height="7" fill="#fff" stroke="#222"/><circle cx="41.5" cy="5" r="2" fill="#222"/><circle cx="59" cy="5" r="3.5" fill="#222"/><path d="M59 1.5 a3.5 3.5 0 0 1 0 7z" fill="#fff"/><rect x="73" y="3" width="8" height="5" fill="#fff" stroke="#333"/><rect x="89" y="2" width="7" height="7" fill="#fff" stroke="#333"/><rect x="105" y="2" width="6" height="7" fill="#555"/></svg>
<div class="a" style="left:726px;top:437px;width:71px;height:31px;background:rgba(205,225,243,0.8);border:1px solid #a8bccc"></div>
<div class="a" style="left:727px;top:438px;width:69px;height:10px;background:linear-gradient(#e6f0f8,#a9c8e2)"></div>
<div class="a" style="left:761.5px;top:438px;width:1px;height:29px;background:#8aa3b8"></div>
<div class="t" style="left:731.5px;top:440px;font-size:6.6px;color:#1a2a3a">Fichiers</div>
<div class="t" style="left:767px;top:440px;font-size:6.6px;color:#1a2a3a">Réseau</div>
<!-- taskbar -->
<div id="task" class="a">
  <div class="a" style="left:0;top:0;width:800px;height:1px;background:#6a7078"></div>
  <div class="a" style="left:100px;top:1.5px;width:97.5px;height:17.5px;border:1px solid #5a5e64;border-bottom:none;border-radius:2px 2px 0 0;background:linear-gradient(#4d5258,#2c3034 45%,#15171a 55%,#1e2124)"></div>
  <div class="a" style="left:201px;top:1.5px;width:97.5px;height:17.5px;border:1px solid #70757b;border-bottom:none;border-radius:2px 2px 0 0;background:linear-gradient(#2a2d31,#1a1c1f 50%,#0c0d0e)"></div>
  <div class="a" style="left:302px;top:1.5px;width:96px;height:17.5px;border:1px solid #5a5e64;border-bottom:none;border-radius:2px 2px 0 0;background:linear-gradient(#4d5258,#2c3034 45%,#15171a 55%,#1e2124)"></div>
  <div class="a" style="left:107px;top:6px;width:8px;height:9.5px;background:linear-gradient(90deg,#f0d878,#d8b048);border-radius:1px"></div>
  <div class="t" style="left:118.5px;top:7px;font-size:7px;color:#fff">JEAN LUC</div>
  <div class="a" style="left:208px;top:5.5px;width:10px;height:9.5px;background:linear-gradient(#3d6fc0,#1d3f8a);border:1px solid #8aa8d8"></div>
  <div class="t" style="left:209.5px;top:8px;font-size:5.5px;color:#dfe8ff">Ps</div>
  <div class="t" style="left:219px;top:7px;font-size:7px;color:#fff">Adobe Photoshop C...</div>
  <svg class="a" style="left:307px;top:5px" width="9" height="11"><path d="M0.5 1 L4.5 10 L8.5 1 Z" fill="#c8a040"/><path d="M2.5 2 L4.5 8 L6.5 2z" fill="#601810"/></svg>
  <div class="t" style="left:318.5px;top:7px;font-size:7px;color:#fff">SANS TITRE3 - Paint</div>
  <div class="a" style="left:40px;top:5.5px;width:11px;height:8.5px;background:linear-gradient(#a8c8f0,#3f6fc0);border:1px solid #c8d8f0"></div>
  <div class="a" style="left:55px;top:5.5px;width:10px;height:8.5px;background:linear-gradient(#e8f0ff,#2a5ab0);border:1px solid #c8d8f0"></div>
  <div class="a" style="left:70px;top:5px;width:10px;height:10px;border-radius:50%;border:2px solid #3aa0e0;border-right-color:#e8c030"></div>
  <div class="t" style="left:91px;top:4.5px;font-size:7px;color:#ddd">»</div>
  <div class="t" style="left:693.5px;top:4.5px;font-size:7px;color:#eee">FR</div>
  <svg class="a" style="left:711.5px;top:6.5px" width="5" height="7"><path d="M4 0.5 L1 3.5 L4 6.5" stroke="#eee" stroke-width="1.4" fill="none"/></svg>
  <div class="a" style="left:720.5px;top:3.5px;width:12px;height:12px;border-radius:50%;background:radial-gradient(circle at 40% 35%,#f04040,#b01010 60%,#700808)"></div>
  <div class="a" style="left:740px;top:4px;width:9px;height:10px;background:linear-gradient(#ffffff,#e04040 50%,#c01818);border-radius:3px"></div>
  <div class="a" style="left:752px;top:4.5px;width:9px;height:9px;background:linear-gradient(135deg,#60c8f0,#1a78b8)"></div>
  <svg class="a" style="left:763px;top:4.5px" width="9" height="9"><path d="M0 3h2l3-3v9l-3-3h-2z" fill="#eee"/><path d="M6.5 2.5v4M8 1.5v6" stroke="#7ac070" stroke-width="0.9"/></svg>
  <div class="t" style="left:774px;top:5px;font-size:7px;color:#fff">10:26</div>
</div>
<!-- start orb -->
<div class="a" style="left:6px;top:477.5px;width:25.5px;height:25.5px;border-radius:50%;background:radial-gradient(circle at 50% 35%,#9ad8f8 0,#3a98d0 35%,#155a9a 70%,#0a2a50 100%);border:1px solid #0a1420;box-shadow:0 0 2px #3a8ad0"></div>
<div class="a" style="left:12px;top:482.5px;width:6.5px;height:6px;background:linear-gradient(135deg,#f8a040,#e04a20);border-radius:40% 10% 10% 10%;transform:skewY(8deg)"></div>
<div class="a" style="left:19px;top:484px;width:6.5px;height:6px;background:linear-gradient(135deg,#a8d850,#50a030);border-radius:10% 40% 10% 10%;transform:skewY(8deg)"></div>
<div class="a" style="left:11.5px;top:489px;width:6.5px;height:6px;background:linear-gradient(135deg,#60b8f0,#2080d0);border-radius:10% 10% 10% 40%;transform:skewY(8deg)"></div>
<div class="a" style="left:18.5px;top:490.5px;width:6.5px;height:6px;background:linear-gradient(135deg,#ffe060,#e8b020);border-radius:10% 10% 40% 10%;transform:skewY(8deg)"></div>
</body></html>
